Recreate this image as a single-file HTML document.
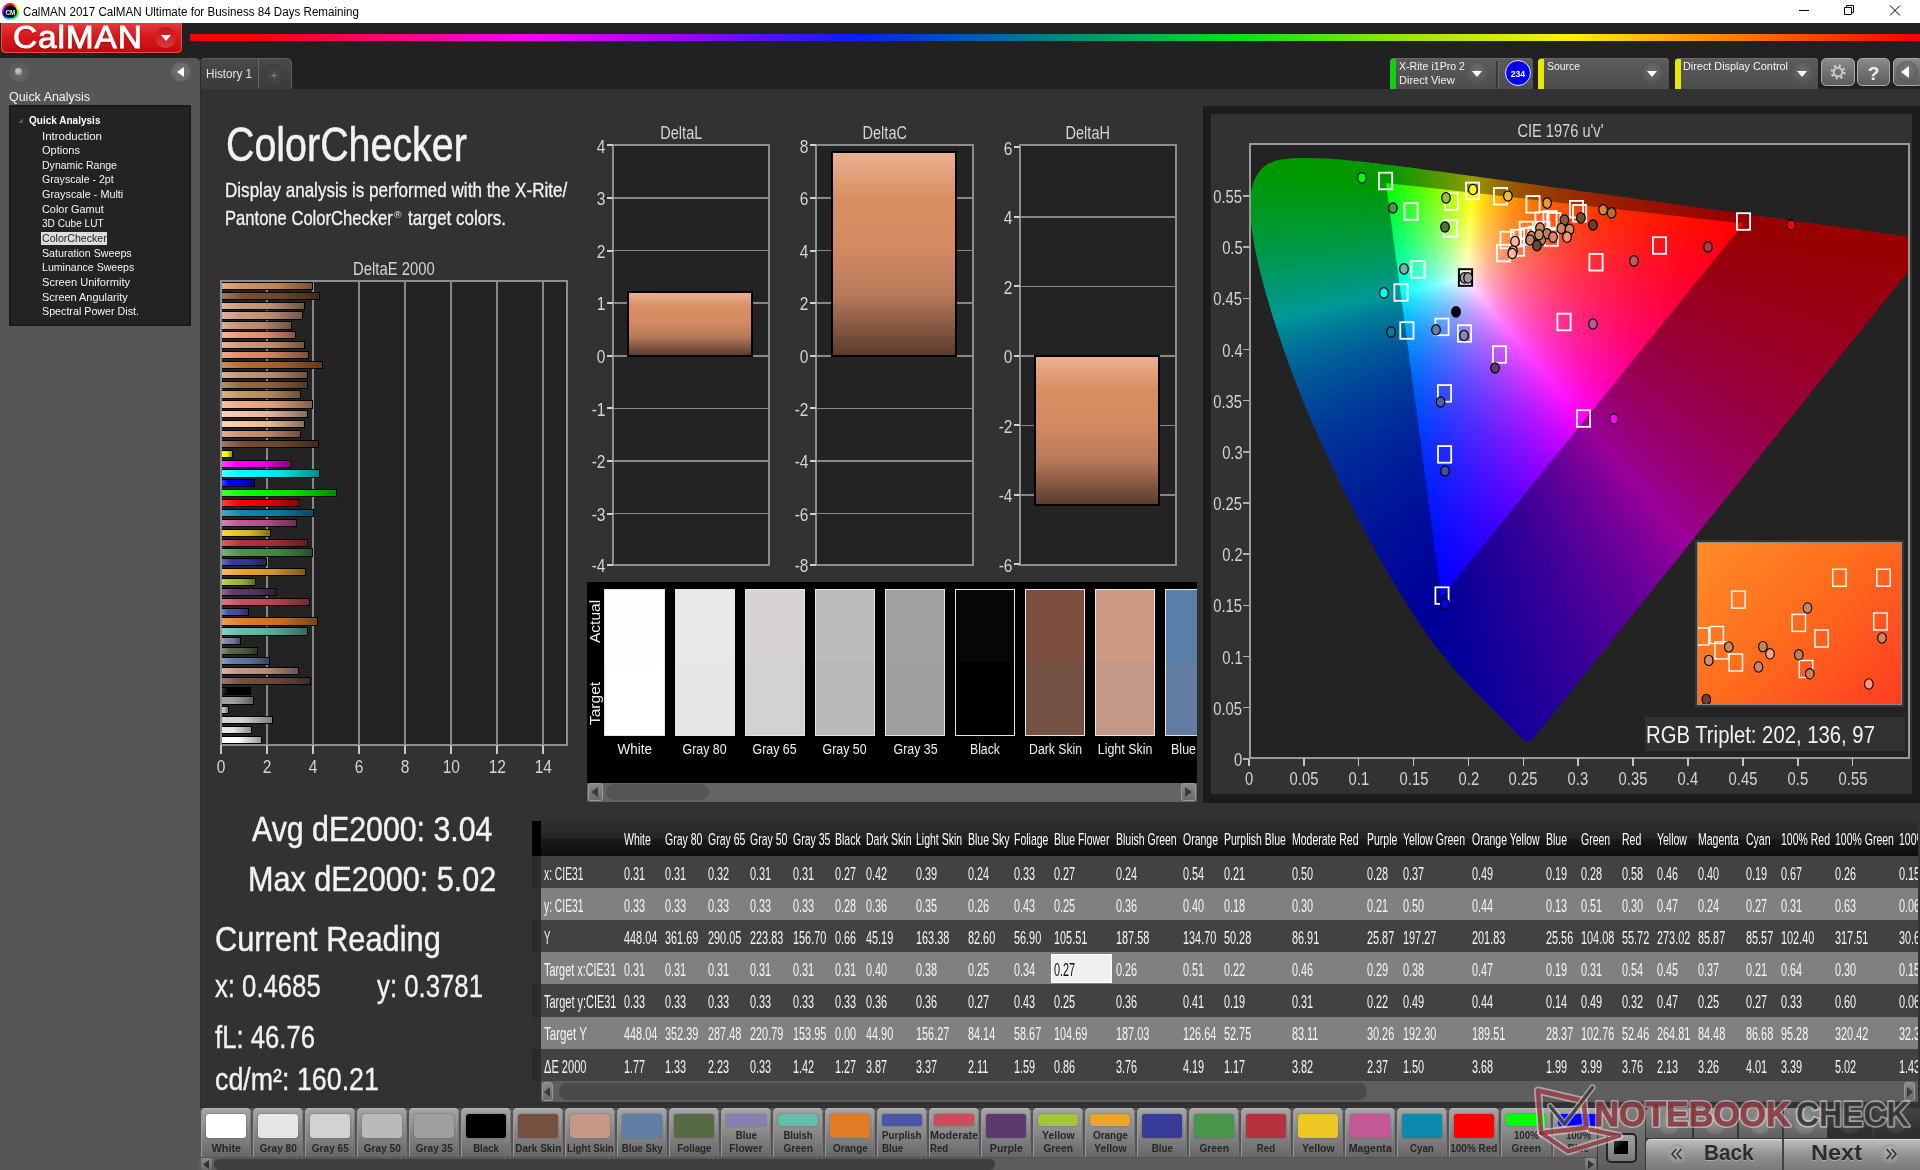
<!DOCTYPE html><html><head><meta charset="utf-8"><title>CalMAN 2017</title><style>html,body{margin:0;padding:0;background:#323232}
body{width:1920px;height:1170px;position:relative;overflow:hidden;font-family:"Liberation Sans",Arial,sans-serif}
.a,.t,.cg i{position:absolute}
.a{box-sizing:content-box}
.t{white-space:pre;line-height:1;display:block}
.cg i{display:block;height:2.4px}
.pb{border-radius:5px 5px 0 0;background:linear-gradient(#a6a6a6,#8c8c8c 45%,#666);box-shadow:inset 0 1px 0 #b8b8b8,inset 1px 0 0 #999,inset -1px 0 0 #777}
</style></head><body>
<div class="a" style="left:199px;top:89px;width:1721px;height:1081px;background:#323232"></div>
<span class="t" style="left:226.3px;top:120.96px;font-size:47.3px;transform:scaleX(0.833);transform-origin:0 0;color:#f2f2f2;-webkit-text-stroke:.5px #f2f2f2;">ColorChecker</span>
<span class="t" style="left:225.3px;top:179.52px;font-size:20.3px;transform:scaleX(0.841);transform-origin:0 0;color:#f2f2f2;-webkit-text-stroke:.3px #f2f2f2;">Display analysis is performed with the X-Rite/</span>
<span class="t" style="left:225.3px;top:207.52px;font-size:20.3px;transform:scaleX(0.818);transform-origin:0 0;color:#f2f2f2;-webkit-text-stroke:.3px #f2f2f2;">Pantone ColorChecker</span>
<span class="t" style="left:393.9px;top:209.56px;font-size:9.5px;transform:scaleX(1.086);transform-origin:0 0;color:#f2f2f2;">®</span>
<span class="t" style="left:407.5px;top:207.52px;font-size:20.3px;transform:scaleX(0.835);transform-origin:0 0;color:#f2f2f2;-webkit-text-stroke:.3px #f2f2f2;">target colors.</span>
<div class="a" style="left:0;top:0;width:1920px;height:23px;background:#fff"></div>
<div class="a" style="left:2px;top:3px;width:17px;height:17px;border-radius:50%;background:conic-gradient(#f00,#ff0,#0f0,#0ff,#00f,#f0f,#f00)"></div>
<div class="a" style="left:4px;top:5px;width:13px;height:13px;border-radius:50%;background:#000"></div>
<span class="t" style="left:5.06px;top:8.67px;font-size:7px;transform:scaleX(0.900);transform-origin:50% 0;color:#fff;font-weight:bold;">CM</span>
<span class="t" style="left:23px;top:5.84px;font-size:12px;transform:scaleX(0.967);transform-origin:0 0;color:#000;">CalMAN 2017 CalMAN Ultimate for Business 84 Days Remaining</span>
<svg class="a" style="left:1790px;top:0" width="130" height="23" viewBox="0 0 130 23" fill="none" stroke="#000" stroke-width="1"><path d="M9 10.5h10"/><path d="M54.5 7.5h7v7h-7z"/><path d="M56.5 7.5v-2h7v7h-2"/><path d="M100 5.5l10 10M110 5.5l-10 10"/></svg>
<div class="a" style="left:0px;top:23px;width:1920px;height:66px;background:#212121"></div>
<div class="a" style="left:190px;top:34.4px;width:1730px;height:6.8px;background:linear-gradient(90deg,#f00 0,#f00 3.5%,#ff0080 12%,#ff00f0 19%,#a000ff 28.3%,#0020ff 38.7%,#008088 49.4%,#00e020 60.2%,#a0e800 70.6%,#fff000 79.8%,#ff8000 89%,#f00 99.5%);filter:blur(.7px)"></div>
<div class="a" style="left:1px;top:23px;width:181px;height:29.5px;border-radius:0 0 5px 5px;background:linear-gradient(#e43a3e,#d8181c 45%,#c20a10);box-shadow:0 1px 0 #500000,inset 0 -1px 0 #e05050,inset 1px 0 0 #e05050,inset -1px 0 0 #e05050"></div>
<span class="t" style="left:13.3px;top:21.86px;font-size:31px;transform:scaleX(1.079);transform-origin:0 0;color:#fff;letter-spacing:.8px;-webkit-text-stroke:.9px #fff;text-shadow:0 1px 2px rgba(90,0,0,.7);">CalMAN</span>
<div class="a" style="left:155px;top:27px;width:21px;height:21px;border-radius:50%;background:linear-gradient(#c41418,#dc3a3e)"></div>
<svg class="a" style="left:161px;top:35px" width="10" height="6"><path d="M0 0h10l-5 6z" fill="#fff"/></svg>
<div class="a" style="left:200.4px;top:58.4px;width:91.6px;height:30.6px;border-radius:5px 5px 0 0;background:linear-gradient(#4a4a4a,#3a3a3a);border:1px solid #5e5e5e;border-bottom:none;box-sizing:border-box"></div>
<div class="a" style="left:257.5px;top:59px;width:1.5px;height:29px;background:#666"></div>
<span class="t" style="left:206.3px;top:67.72px;font-size:12.5px;transform:scaleX(0.933);transform-origin:0 0;color:#e4e4e4;">History 1</span>
<div class="a" style="left:264px;top:64px;width:20px;height:20px;border-radius:50%;background:radial-gradient(#4a4a4a,#3c3c3c)"></div>
<span class="t" style="left:270.79px;top:69.69px;font-size:11px;transform:scaleX(1.000);transform-origin:50% 0;color:#888;">+</span>
<div class="a" style="left:1390px;top:58px;width:143px;height:30.5px;border-radius:4px 4px 0 0;background:linear-gradient(#5c5c5c,#4c4c4c);box-shadow:inset 0 1px 0 #6a6a6a"></div>
<div class="a" style="left:1390px;top:59px;width:6px;height:29.5px;background:#10d010;border-radius:3px 0 0 0"></div>
<span class="t" style="left:1398.5px;top:60.69px;font-size:11px;transform:scaleX(0.964);transform-origin:0 0;color:#f4f4f4;">X-Rite i1Pro 2</span>
<span class="t" style="left:1398.5px;top:74.69px;font-size:11px;transform:scaleX(1.005);transform-origin:0 0;color:#f4f4f4;">Direct View</span>
<div class="a" style="left:1466.5px;top:63px;width:21px;height:21px;border-radius:50%;background:radial-gradient(circle at 50% 35%,#6e6e6e,#4a4a4a)"></div>
<svg class="a" style="left:1472px;top:71px" width="10" height="6"><path d="M0 0h10l-5 6z" fill="#fff"/></svg>
<div class="a" style="left:1496px;top:61px;width:1.5px;height:28px;background:#3a3a3a;box-shadow:1px 0 0 #666"></div>
<div class="a" style="left:1504.5px;top:60px;width:26px;height:26px;border-radius:50%;background:#0000f0;border:1.5px solid #e8e8ff;box-sizing:border-box"></div>
<span class="t" style="left:1509.57px;top:68.56px;font-size:9.5px;transform:scaleX(0.920);transform-origin:50% 0;color:#fff;font-weight:bold;">234</span>
<div class="a" style="left:1538px;top:58px;width:131px;height:30.5px;border-radius:4px 4px 0 0;background:linear-gradient(#5c5c5c,#4c4c4c);box-shadow:inset 0 1px 0 #6a6a6a"></div>
<div class="a" style="left:1538px;top:59px;width:6px;height:29.5px;background:#e8e800;border-radius:3px 0 0 0"></div>
<span class="t" style="left:1546.5px;top:60.69px;font-size:11px;transform:scaleX(0.947);transform-origin:0 0;color:#f4f4f4;">Source</span>
<div class="a" style="left:1641.5px;top:63px;width:21px;height:21px;border-radius:50%;background:radial-gradient(circle at 50% 35%,#6e6e6e,#4a4a4a)"></div>
<svg class="a" style="left:1647px;top:71px" width="10" height="6"><path d="M0 0h10l-5 6z" fill="#fff"/></svg>
<div class="a" style="left:1674.5px;top:58px;width:143.5px;height:30.5px;border-radius:4px 4px 0 0;background:linear-gradient(#5c5c5c,#4c4c4c);box-shadow:inset 0 1px 0 #6a6a6a"></div>
<div class="a" style="left:1674.5px;top:59px;width:6px;height:29.5px;background:#e8e800;border-radius:3px 0 0 0"></div>
<span class="t" style="left:1683px;top:60.69px;font-size:11px;transform:scaleX(0.987);transform-origin:0 0;color:#f4f4f4;">Direct Display Control</span>
<div class="a" style="left:1791.5px;top:63px;width:21px;height:21px;border-radius:50%;background:radial-gradient(circle at 50% 35%,#6e6e6e,#4a4a4a)"></div>
<svg class="a" style="left:1797px;top:71px" width="10" height="6"><path d="M0 0h10l-5 6z" fill="#fff"/></svg>
<div class="a" style="left:1821px;top:58px;width:34px;height:28px;border-radius:5px;background:linear-gradient(#8a8a8a,#5c5c5c);border:1px solid #a8a8a8;box-sizing:border-box;box-shadow:0 0 0 1px #222"></div>
<div class="a" style="left:1857px;top:58px;width:33px;height:28px;border-radius:5px;background:linear-gradient(#8a8a8a,#5c5c5c);border:1px solid #a8a8a8;box-sizing:border-box;box-shadow:0 0 0 1px #222"></div>
<div class="a" style="left:1893px;top:58px;width:30px;height:28px;border-radius:5px;background:linear-gradient(#8a8a8a,#5c5c5c);border:1px solid #a8a8a8;box-sizing:border-box;box-shadow:0 0 0 1px #222"></div>
<svg class="a" style="left:1828px;top:62px" width="20" height="20" viewBox="-10 -10 20 20"><g fill="none" stroke="#cfcfcf"><circle r="4.3" stroke-width="1.9"/><circle r="6.4" stroke-width="2.2" stroke-dasharray="2.2 2.83"/></g></svg>
<span class="t" style="left:1867.7px;top:64.42px;font-size:19px;transform:scaleX(1.000);transform-origin:50% 0;color:#eee;font-weight:bold;">?</span>
<div class="a" style="left:1896px;top:61px;width:22px;height:22px;border-radius:50%;background:radial-gradient(circle at 50% 35%,#7a7a7a,#555)"></div>
<svg class="a" style="left:1901px;top:66px" width="8" height="12"><path d="M8 0v12l-8-6z" fill="#fff"/></svg>
<div class="a" style="left:0;top:58px;width:200px;height:1112px;background:#565656;box-shadow:1px 0 0 #2b2b2b;border-radius:0 5px 0 0"></div>
<div class="a" style="left:9px;top:62px;width:20px;height:20px;border-radius:50%;background:radial-gradient(circle at 50% 60%,#6c6c6c,#545454)"></div>
<div class="a" style="left:15px;top:68px;width:7px;height:7px;border-radius:50%;background:radial-gradient(circle at 40% 35%,#ccc,#888)"></div>
<div class="a" style="left:171px;top:62px;width:20px;height:20px;border-radius:50%;background:radial-gradient(circle at 50% 40%,#747474,#5e5e5e)"></div>
<svg class="a" style="left:177px;top:67px" width="7" height="10"><path d="M7 0v10l-7-5z" fill="#fff"/></svg>
<span class="t" style="left:9px;top:91.02px;font-size:12.5px;transform:scaleX(0.997);transform-origin:0 0;color:#f4f4f4;">Quick Analysis</span>
<div class="a" style="left:9px;top:105px;width:182px;height:221px;background:#232323;border:2px solid #1a1a1a;box-sizing:border-box"></div>
<svg class="a" style="left:18px;top:118px" width="5" height="5"><path d="M5 0v5h-5z" fill="#555"/></svg>
<span class="t" style="left:29px;top:114.69px;font-size:11px;transform:scaleX(0.911);transform-origin:0 0;color:#fff;font-weight:bold;">Quick Analysis</span>
<span class="t" style="left:42px;top:130.69px;font-size:11px;transform:scaleX(1.044);transform-origin:0 0;color:#f4f4f4;">Introduction</span>
<span class="t" style="left:42px;top:144.69px;font-size:11px;transform:scaleX(1.002);transform-origin:0 0;color:#f4f4f4;">Options</span>
<span class="t" style="left:42px;top:159.69px;font-size:11px;transform:scaleX(0.958);transform-origin:0 0;color:#f4f4f4;">Dynamic Range</span>
<span class="t" style="left:42px;top:173.69px;font-size:11px;transform:scaleX(0.961);transform-origin:0 0;color:#f4f4f4;">Grayscale - 2pt</span>
<span class="t" style="left:42px;top:188.69px;font-size:11px;transform:scaleX(0.985);transform-origin:0 0;color:#f4f4f4;">Grayscale - Multi</span>
<span class="t" style="left:42px;top:203.69px;font-size:11px;transform:scaleX(0.990);transform-origin:0 0;color:#f4f4f4;">Color Gamut</span>
<span class="t" style="left:42px;top:217.69px;font-size:11px;transform:scaleX(0.917);transform-origin:0 0;color:#f4f4f4;">3D Cube LUT</span>
<div class="a" style="left:41px;top:231.8px;width:66px;height:13.5px;background:#dcdcdc"></div>
<span class="t" style="left:42px;top:232.69px;font-size:11px;transform:scaleX(0.962);transform-origin:0 0;color:#222;">ColorChecker</span>
<span class="t" style="left:42px;top:247.69px;font-size:11px;transform:scaleX(0.971);transform-origin:0 0;color:#f4f4f4;">Saturation Sweeps</span>
<span class="t" style="left:42px;top:261.69px;font-size:11px;transform:scaleX(0.961);transform-origin:0 0;color:#f4f4f4;">Luminance Sweeps</span>
<span class="t" style="left:42px;top:276.99px;font-size:11px;transform:scaleX(1.007);transform-origin:0 0;color:#f4f4f4;">Screen Uniformity</span>
<span class="t" style="left:42px;top:291.99px;font-size:11px;transform:scaleX(0.994);transform-origin:0 0;color:#f4f4f4;">Screen Angularity</span>
<span class="t" style="left:42px;top:305.99px;font-size:11px;transform:scaleX(0.973);transform-origin:0 0;color:#f4f4f4;">Spectral Power Dist.</span>
<span class="t" style="left:342.59px;top:260.34px;font-size:18.5px;transform:scaleX(0.802);transform-origin:50% 0;color:#d4d4d4;">DeltaE 2000</span>
<div class="a" style="left:220px;top:280px;width:347.5px;height:466px;background:#232323;border:2px solid #8e8e8e;box-sizing:border-box"></div>
<div class="a" style="left:266.25px;top:281px;width:1.5px;height:464px;background:#888"></div>
<div class="a" style="left:312.25px;top:281px;width:1.5px;height:464px;background:#888"></div>
<div class="a" style="left:358.25px;top:281px;width:1.5px;height:464px;background:#888"></div>
<div class="a" style="left:404.25px;top:281px;width:1.5px;height:464px;background:#888"></div>
<div class="a" style="left:450.25px;top:281px;width:1.5px;height:464px;background:#888"></div>
<div class="a" style="left:496.25px;top:281px;width:1.5px;height:464px;background:#888"></div>
<div class="a" style="left:542.25px;top:281px;width:1.5px;height:464px;background:#888"></div>
<div class="a" style="left:220px;top:745px;width:2px;height:9px;background:#c8c8c8"></div>
<span class="t" style="left:215.86px;top:757.94px;font-size:18.5px;transform:scaleX(0.840);transform-origin:50% 0;color:#d4d4d4;">0</span>
<div class="a" style="left:266px;top:745px;width:2px;height:9px;background:#c8c8c8"></div>
<span class="t" style="left:261.86px;top:757.94px;font-size:18.5px;transform:scaleX(0.840);transform-origin:50% 0;color:#d4d4d4;">2</span>
<div class="a" style="left:312px;top:745px;width:2px;height:9px;background:#c8c8c8"></div>
<span class="t" style="left:307.86px;top:757.94px;font-size:18.5px;transform:scaleX(0.840);transform-origin:50% 0;color:#d4d4d4;">4</span>
<div class="a" style="left:358px;top:745px;width:2px;height:9px;background:#c8c8c8"></div>
<span class="t" style="left:353.86px;top:757.94px;font-size:18.5px;transform:scaleX(0.840);transform-origin:50% 0;color:#d4d4d4;">6</span>
<div class="a" style="left:404px;top:745px;width:2px;height:9px;background:#c8c8c8"></div>
<span class="t" style="left:399.86px;top:757.94px;font-size:18.5px;transform:scaleX(0.840);transform-origin:50% 0;color:#d4d4d4;">8</span>
<div class="a" style="left:450px;top:745px;width:2px;height:9px;background:#c8c8c8"></div>
<span class="t" style="left:440.71px;top:757.94px;font-size:18.5px;transform:scaleX(0.840);transform-origin:50% 0;color:#d4d4d4;">10</span>
<div class="a" style="left:496px;top:745px;width:2px;height:9px;background:#c8c8c8"></div>
<span class="t" style="left:486.71px;top:757.94px;font-size:18.5px;transform:scaleX(0.840);transform-origin:50% 0;color:#d4d4d4;">12</span>
<div class="a" style="left:542px;top:745px;width:2px;height:9px;background:#c8c8c8"></div>
<span class="t" style="left:532.71px;top:757.94px;font-size:18.5px;transform:scaleX(0.840);transform-origin:50% 0;color:#d4d4d4;">14</span>
<div class="a" style="left:222px;top:735.9px;width:40.41px;height:8.2px;background:linear-gradient(90deg,#ffffff,#ffffff 40%,#999999);border:1.5px solid #000;border-left:none;box-sizing:border-box"></div>
<div class="a" style="left:222px;top:726.03px;width:30.29px;height:8.2px;background:linear-gradient(90deg,#e6e6e6,#e6e6e6 40%,#8a8a8a);border:1.5px solid #000;border-left:none;box-sizing:border-box"></div>
<div class="a" style="left:222px;top:716.16px;width:50.99px;height:8.2px;background:linear-gradient(90deg,#d2d2d2,#d2d2d2 40%,#7e7e7e);border:1.5px solid #000;border-left:none;box-sizing:border-box"></div>
<div class="a" style="left:222px;top:706.29px;width:7.29px;height:8.2px;background:linear-gradient(90deg,#bababa,#bababa 40%,#707070);border:1.5px solid #000;border-left:none;box-sizing:border-box"></div>
<div class="a" style="left:222px;top:696.42px;width:32.36px;height:8.2px;background:linear-gradient(90deg,#9f9f9f,#9f9f9f 40%,#5f5f5f);border:1.5px solid #000;border-left:none;box-sizing:border-box"></div>
<div class="a" style="left:222px;top:686.55px;width:28.91px;height:8.2px;background:linear-gradient(90deg,#303030,#000000 22%,#000000 60%,#000000);border:1.5px solid #000;border-left:none;box-sizing:border-box"></div>
<div class="a" style="left:222px;top:676.68px;width:88.71px;height:8.2px;background:linear-gradient(90deg,#977c6f,#74513f 22%,#684939 60%,#402d23);border:1.5px solid #000;border-left:none;box-sizing:border-box"></div>
<div class="a" style="left:222px;top:666.81px;width:77.21px;height:8.2px;background:linear-gradient(90deg,#d4b1a3,#c69784 22%,#b28877 60%,#6d5349);border:1.5px solid #000;border-left:none;box-sizing:border-box"></div>
<div class="a" style="left:222px;top:656.94px;width:48.23px;height:8.2px;background:linear-gradient(90deg,#879ebc,#5f7da5 22%,#567094 60%,#34455b);border:1.5px solid #000;border-left:none;box-sizing:border-box"></div>
<div class="a" style="left:222px;top:647.07px;width:36.27px;height:8.2px;background:linear-gradient(90deg,#809072,#566b43 22%,#4d603c 60%,#2f3b25);border:1.5px solid #000;border-left:none;box-sizing:border-box"></div>
<div class="a" style="left:222px;top:637.2px;width:19.48px;height:8.2px;background:linear-gradient(90deg,#a4a0c7,#8681b4 22%,#7974a2 60%,#4a4763);border:1.5px solid #000;border-left:none;box-sizing:border-box"></div>
<div class="a" style="left:222px;top:627.33px;width:86.18px;height:8.2px;background:linear-gradient(90deg,#8acfc0,#63bfab 22%,#59ac9a 60%,#36695e);border:1.5px solid #000;border-left:none;box-sizing:border-box"></div>
<div class="a" style="left:222px;top:617.46px;width:96.07px;height:8.2px;background:linear-gradient(90deg,#e89c5e,#e07b28 22%,#ca6f24 60%,#7b4416);border:1.5px solid #000;border-left:none;box-sizing:border-box"></div>
<div class="a" style="left:222px;top:607.59px;width:26.61px;height:8.2px;background:linear-gradient(90deg,#7780be,#4a56a8 22%,#434d97 60%,#292f5c);border:1.5px solid #000;border-left:none;box-sizing:border-box"></div>
<div class="a" style="left:222px;top:597.72px;width:87.56px;height:8.2px;background:linear-gradient(90deg,#d97985,#cc4c5c 22%,#b84453 60%,#702a33);border:1.5px solid #000;border-left:none;box-sizing:border-box"></div>
<div class="a" style="left:222px;top:587.85px;width:54.21px;height:8.2px;background:linear-gradient(90deg,#846b94,#5b3a70 22%,#523465 60%,#32203e);border:1.5px solid #000;border-left:none;box-sizing:border-box"></div>
<div class="a" style="left:222px;top:577.98px;width:34.2px;height:8.2px;background:linear-gradient(90deg,#bcd36d,#a5c43c 22%,#94b036 60%,#5b6c21);border:1.5px solid #000;border-left:none;box-sizing:border-box"></div>
<div class="a" style="left:222px;top:568.11px;width:84.34px;height:8.2px;background:linear-gradient(90deg,#f0bb61,#eba42c 22%,#d49428 60%,#815a18);border:1.5px solid #000;border-left:none;box-sizing:border-box"></div>
<div class="a" style="left:222px;top:558.24px;width:45.47px;height:8.2px;background:linear-gradient(90deg,#686db2,#363c98 22%,#313689 60%,#1e2154);border:1.5px solid #000;border-left:none;box-sizing:border-box"></div>
<div class="a" style="left:222px;top:548.37px;width:91.47px;height:8.2px;background:linear-gradient(90deg,#76b077,#48964a 22%,#418743 60%,#285229);border:1.5px solid #000;border-left:none;box-sizing:border-box"></div>
<div class="a" style="left:222px;top:538.5px;width:86.18px;height:8.2px;background:linear-gradient(90deg,#c8666d,#b5333c 22%,#a32e36 60%,#641c21);border:1.5px solid #000;border-left:none;box-sizing:border-box"></div>
<div class="a" style="left:222px;top:528.63px;width:48.69px;height:8.2px;background:linear-gradient(90deg,#f2d55b,#edc724 22%,#d5b320 60%,#826d14);border:1.5px solid #000;border-left:none;box-sizing:border-box"></div>
<div class="a" style="left:222px;top:518.76px;width:74.68px;height:8.2px;background:linear-gradient(90deg,#d182b0,#c25896 22%,#af4f87 60%,#6b3052);border:1.5px solid #000;border-left:none;box-sizing:border-box"></div>
<div class="a" style="left:222px;top:508.89px;width:91.93px;height:8.2px;background:linear-gradient(90deg,#48a7c2,#0b8aad 22%,#0a7c9c 60%,#064c5f);border:1.5px solid #000;border-left:none;box-sizing:border-box"></div>
<div class="a" style="left:222px;top:499.02px;width:77.67px;height:8.2px;background:linear-gradient(90deg,#ff4040,#ff0000 22%,#e60000 60%,#8c0000);border:1.5px solid #000;border-left:none;box-sizing:border-box"></div>
<div class="a" style="left:222px;top:489.15px;width:115.16px;height:8.2px;background:linear-gradient(90deg,#40ff40,#00ff00 22%,#00e600 60%,#008c00);border:1.5px solid #000;border-left:none;box-sizing:border-box"></div>
<div class="a" style="left:222px;top:479.28px;width:32.59px;height:8.2px;background:linear-gradient(90deg,#4040ff,#0000ff 22%,#0000e6 60%,#00008c);border:1.5px solid #000;border-left:none;box-sizing:border-box"></div>
<div class="a" style="left:222px;top:469.41px;width:97.91px;height:8.2px;background:linear-gradient(90deg,#40ffff,#00ffff 22%,#00e6e6 60%,#008c8c);border:1.5px solid #000;border-left:none;box-sizing:border-box"></div>
<div class="a" style="left:222px;top:459.54px;width:68.7px;height:8.2px;background:linear-gradient(90deg,#ff40ff,#ff00ff 22%,#e600e6 60%,#8c008c);border:1.5px solid #000;border-left:none;box-sizing:border-box"></div>
<div class="a" style="left:222px;top:449.67px;width:10.97px;height:8.2px;background:linear-gradient(90deg,#ffff40,#ffff00 22%,#e6e600 60%,#8c8c00);border:1.5px solid #000;border-left:none;box-sizing:border-box"></div>
<div class="a" style="left:222px;top:439.8px;width:96.99px;height:8.2px;background:linear-gradient(90deg,#9b7964,#7a4c30 22%,#6e442b 60%,#432a1a);border:1.5px solid #000;border-left:none;box-sizing:border-box"></div>
<div class="a" style="left:222px;top:429.93px;width:78.82px;height:8.2px;background:linear-gradient(90deg,#dcaf94,#d09470 22%,#bb8565 60%,#72513e);border:1.5px solid #000;border-left:none;box-sizing:border-box"></div>
<div class="a" style="left:222px;top:420.06px;width:82.96px;height:8.2px;background:linear-gradient(90deg,#fdd6b8,#fcc8a0 22%,#e3b490 60%,#8b6e58);border:1.5px solid #000;border-left:none;box-sizing:border-box"></div>
<div class="a" style="left:222px;top:410.19px;width:86.18px;height:8.2px;background:linear-gradient(90deg,#f7d3be,#f4c4a8 22%,#dcb097 60%,#866c5c);border:1.5px solid #000;border-left:none;box-sizing:border-box"></div>
<div class="a" style="left:222px;top:400.32px;width:91.24px;height:8.2px;background:linear-gradient(90deg,#f7c1a0,#f4ac80 22%,#dc9b73 60%,#865f46);border:1.5px solid #000;border-left:none;box-sizing:border-box"></div>
<div class="a" style="left:222px;top:390.45px;width:78.82px;height:8.2px;background:linear-gradient(90deg,#d6b08b,#c99664 22%,#b5875a 60%,#6f5237);border:1.5px solid #000;border-left:none;box-sizing:border-box"></div>
<div class="a" style="left:222px;top:380.58px;width:86.18px;height:8.2px;background:linear-gradient(90deg,#b28f6d,#986a3c 22%,#895f36 60%,#543a21);border:1.5px solid #000;border-left:none;box-sizing:border-box"></div>
<div class="a" style="left:222px;top:370.71px;width:86.18px;height:8.2px;background:linear-gradient(90deg,#d6b097,#c99674 22%,#b58768 60%,#6f5240);border:1.5px solid #000;border-left:none;box-sizing:border-box"></div>
<div class="a" style="left:222px;top:360.84px;width:101.13px;height:8.2px;background:linear-gradient(90deg,#c78e61,#b4682c 22%,#a25e28 60%,#633918);border:1.5px solid #000;border-left:none;box-sizing:border-box"></div>
<div class="a" style="left:222px;top:350.97px;width:87.1px;height:8.2px;background:linear-gradient(90deg,#e6ac8e,#dd9068 22%,#c7825e 60%,#7a4f39);border:1.5px solid #000;border-left:none;box-sizing:border-box"></div>
<div class="a" style="left:222px;top:341.1px;width:82.96px;height:8.2px;background:linear-gradient(90deg,#e2b29a,#d99878 22%,#c3896c 60%,#775442);border:1.5px solid #000;border-left:none;box-sizing:border-box"></div>
<div class="a" style="left:222px;top:331.23px;width:74.22px;height:8.2px;background:linear-gradient(90deg,#f4b5a0,#f09c80 22%,#d88c73 60%,#845646);border:1.5px solid #000;border-left:none;box-sizing:border-box"></div>
<div class="a" style="left:222px;top:321.36px;width:69.85px;height:8.2px;background:linear-gradient(90deg,#d6b097,#c99674 22%,#b58768 60%,#6f5240);border:1.5px solid #000;border-left:none;box-sizing:border-box"></div>
<div class="a" style="left:222px;top:311.49px;width:80.89px;height:8.2px;background:linear-gradient(90deg,#dbb3a0,#cf9a80 22%,#ba8b73 60%,#725546);border:1.5px solid #000;border-left:none;box-sizing:border-box"></div>
<div class="a" style="left:222px;top:301.62px;width:82.96px;height:8.2px;background:linear-gradient(90deg,#dcb39a,#d19a78 22%,#bc8b6c 60%,#735542);border:1.5px solid #000;border-left:none;box-sizing:border-box"></div>
<div class="a" style="left:222px;top:291.75px;width:98.14px;height:8.2px;background:linear-gradient(90deg,#9b7b62,#7a4f2e 22%,#6e4729 60%,#432b19);border:1.5px solid #000;border-left:none;box-sizing:border-box"></div>
<div class="a" style="left:222px;top:281.88px;width:91.24px;height:8.2px;background:linear-gradient(90deg,#e2ac87,#d9905f 22%,#c38256 60%,#774f34);border:1.5px solid #000;border-left:none;box-sizing:border-box"></div>
<span class="t" style="left:656.21px;top:125.49px;font-size:17.5px;transform:scaleX(0.830);transform-origin:50% 0;color:#d4d4d4;">DeltaL</span>
<div class="a" style="left:612px;top:144px;width:158px;height:422px;background:#232323;border:2px solid #8e8e8e;box-sizing:border-box"></div>
<div class="a" style="left:606.5px;top:144.4px;width:6.5px;height:2px;background:#d0d0d0"></div>
<span class="t" style="left:595.41px;top:137.64px;font-size:18.5px;transform:scaleX(0.840);transform-origin:100% 0;color:#d4d4d4;">4</span>
<div class="a" style="left:613px;top:197.25px;width:156px;height:1.5px;background:#888"></div>
<div class="a" style="left:606.5px;top:197px;width:6.5px;height:2px;background:#d0d0d0"></div>
<span class="t" style="left:595.41px;top:190.24px;font-size:18.5px;transform:scaleX(0.840);transform-origin:100% 0;color:#d4d4d4;">3</span>
<div class="a" style="left:613px;top:249.85px;width:156px;height:1.5px;background:#888"></div>
<div class="a" style="left:606.5px;top:249.6px;width:6.5px;height:2px;background:#d0d0d0"></div>
<span class="t" style="left:595.41px;top:242.84px;font-size:18.5px;transform:scaleX(0.840);transform-origin:100% 0;color:#d4d4d4;">2</span>
<div class="a" style="left:613px;top:302.45px;width:156px;height:1.5px;background:#888"></div>
<div class="a" style="left:606.5px;top:302.2px;width:6.5px;height:2px;background:#d0d0d0"></div>
<span class="t" style="left:595.41px;top:295.44px;font-size:18.5px;transform:scaleX(0.840);transform-origin:100% 0;color:#d4d4d4;">1</span>
<div class="a" style="left:613px;top:355.05px;width:156px;height:1.5px;background:#888"></div>
<div class="a" style="left:606.5px;top:354.8px;width:6.5px;height:2px;background:#d0d0d0"></div>
<span class="t" style="left:595.41px;top:348.04px;font-size:18.5px;transform:scaleX(0.840);transform-origin:100% 0;color:#d4d4d4;">0</span>
<div class="a" style="left:613px;top:407.65px;width:156px;height:1.5px;background:#888"></div>
<div class="a" style="left:606.5px;top:407.4px;width:6.5px;height:2px;background:#d0d0d0"></div>
<span class="t" style="left:589.25px;top:400.64px;font-size:18.5px;transform:scaleX(0.840);transform-origin:100% 0;color:#d4d4d4;">-1</span>
<div class="a" style="left:613px;top:460.25px;width:156px;height:1.5px;background:#888"></div>
<div class="a" style="left:606.5px;top:460px;width:6.5px;height:2px;background:#d0d0d0"></div>
<span class="t" style="left:589.25px;top:453.24px;font-size:18.5px;transform:scaleX(0.840);transform-origin:100% 0;color:#d4d4d4;">-2</span>
<div class="a" style="left:613px;top:512.85px;width:156px;height:1.5px;background:#888"></div>
<div class="a" style="left:606.5px;top:512.6px;width:6.5px;height:2px;background:#d0d0d0"></div>
<span class="t" style="left:589.25px;top:505.84px;font-size:18.5px;transform:scaleX(0.840);transform-origin:100% 0;color:#d4d4d4;">-3</span>
<div class="a" style="left:606.5px;top:564px;width:6.5px;height:2px;background:#d0d0d0"></div>
<span class="t" style="left:589.25px;top:557.24px;font-size:18.5px;transform:scaleX(0.840);transform-origin:100% 0;color:#d4d4d4;">-4</span>
<div class="a" style="left:627px;top:290.8px;width:126.3px;height:66.2px;background:linear-gradient(#e9b191,#d98e62 22%,#d48b62 45%,#b87a5a 70%,#5a3c2e);border:2px solid #000;box-sizing:border-box"></div>
<span class="t" style="left:858.05px;top:125.49px;font-size:17.5px;transform:scaleX(0.830);transform-origin:50% 0;color:#d4d4d4;">DeltaC</span>
<div class="a" style="left:815px;top:144px;width:159.3px;height:422px;background:#232323;border:2px solid #8e8e8e;box-sizing:border-box"></div>
<div class="a" style="left:809.5px;top:144.4px;width:6.5px;height:2px;background:#d0d0d0"></div>
<span class="t" style="left:798.41px;top:137.64px;font-size:18.5px;transform:scaleX(0.840);transform-origin:100% 0;color:#d4d4d4;">8</span>
<div class="a" style="left:816px;top:197.25px;width:157.3px;height:1.5px;background:#888"></div>
<div class="a" style="left:809.5px;top:197px;width:6.5px;height:2px;background:#d0d0d0"></div>
<span class="t" style="left:798.41px;top:190.24px;font-size:18.5px;transform:scaleX(0.840);transform-origin:100% 0;color:#d4d4d4;">6</span>
<div class="a" style="left:816px;top:249.85px;width:157.3px;height:1.5px;background:#888"></div>
<div class="a" style="left:809.5px;top:249.6px;width:6.5px;height:2px;background:#d0d0d0"></div>
<span class="t" style="left:798.41px;top:242.84px;font-size:18.5px;transform:scaleX(0.840);transform-origin:100% 0;color:#d4d4d4;">4</span>
<div class="a" style="left:816px;top:302.45px;width:157.3px;height:1.5px;background:#888"></div>
<div class="a" style="left:809.5px;top:302.2px;width:6.5px;height:2px;background:#d0d0d0"></div>
<span class="t" style="left:798.41px;top:295.44px;font-size:18.5px;transform:scaleX(0.840);transform-origin:100% 0;color:#d4d4d4;">2</span>
<div class="a" style="left:816px;top:355.05px;width:157.3px;height:1.5px;background:#888"></div>
<div class="a" style="left:809.5px;top:354.8px;width:6.5px;height:2px;background:#d0d0d0"></div>
<span class="t" style="left:798.41px;top:348.04px;font-size:18.5px;transform:scaleX(0.840);transform-origin:100% 0;color:#d4d4d4;">0</span>
<div class="a" style="left:816px;top:407.65px;width:157.3px;height:1.5px;background:#888"></div>
<div class="a" style="left:809.5px;top:407.4px;width:6.5px;height:2px;background:#d0d0d0"></div>
<span class="t" style="left:792.25px;top:400.64px;font-size:18.5px;transform:scaleX(0.840);transform-origin:100% 0;color:#d4d4d4;">-2</span>
<div class="a" style="left:816px;top:460.25px;width:157.3px;height:1.5px;background:#888"></div>
<div class="a" style="left:809.5px;top:460px;width:6.5px;height:2px;background:#d0d0d0"></div>
<span class="t" style="left:792.25px;top:453.24px;font-size:18.5px;transform:scaleX(0.840);transform-origin:100% 0;color:#d4d4d4;">-4</span>
<div class="a" style="left:816px;top:512.85px;width:157.3px;height:1.5px;background:#888"></div>
<div class="a" style="left:809.5px;top:512.6px;width:6.5px;height:2px;background:#d0d0d0"></div>
<span class="t" style="left:792.25px;top:505.84px;font-size:18.5px;transform:scaleX(0.840);transform-origin:100% 0;color:#d4d4d4;">-6</span>
<div class="a" style="left:809.5px;top:564px;width:6.5px;height:2px;background:#d0d0d0"></div>
<span class="t" style="left:792.25px;top:557.24px;font-size:18.5px;transform:scaleX(0.840);transform-origin:100% 0;color:#d4d4d4;">-8</span>
<div class="a" style="left:830.5px;top:151.3px;width:126.3px;height:205.7px;background:linear-gradient(#e9b191,#d98e62 22%,#d48b62 45%,#b87a5a 70%,#5a3c2e);border:2px solid #000;box-sizing:border-box"></div>
<span class="t" style="left:1061.05px;top:125.49px;font-size:17.5px;transform:scaleX(0.830);transform-origin:50% 0;color:#d4d4d4;">DeltaH</span>
<div class="a" style="left:1019px;top:144px;width:158.3px;height:422px;background:#232323;border:2px solid #8e8e8e;box-sizing:border-box"></div>
<div class="a" style="left:1013.5px;top:146.3px;width:6.5px;height:2px;background:#d0d0d0"></div>
<span class="t" style="left:1002.41px;top:139.54px;font-size:18.5px;transform:scaleX(0.840);transform-origin:100% 0;color:#d4d4d4;">6</span>
<div class="a" style="left:1020px;top:216.05px;width:156.3px;height:1.5px;background:#888"></div>
<div class="a" style="left:1013.5px;top:215.8px;width:6.5px;height:2px;background:#d0d0d0"></div>
<span class="t" style="left:1002.41px;top:209.04px;font-size:18.5px;transform:scaleX(0.840);transform-origin:100% 0;color:#d4d4d4;">4</span>
<div class="a" style="left:1020px;top:285.55px;width:156.3px;height:1.5px;background:#888"></div>
<div class="a" style="left:1013.5px;top:285.3px;width:6.5px;height:2px;background:#d0d0d0"></div>
<span class="t" style="left:1002.41px;top:278.54px;font-size:18.5px;transform:scaleX(0.840);transform-origin:100% 0;color:#d4d4d4;">2</span>
<div class="a" style="left:1020px;top:355.05px;width:156.3px;height:1.5px;background:#888"></div>
<div class="a" style="left:1013.5px;top:354.8px;width:6.5px;height:2px;background:#d0d0d0"></div>
<span class="t" style="left:1002.41px;top:348.04px;font-size:18.5px;transform:scaleX(0.840);transform-origin:100% 0;color:#d4d4d4;">0</span>
<div class="a" style="left:1020px;top:424.55px;width:156.3px;height:1.5px;background:#888"></div>
<div class="a" style="left:1013.5px;top:424.3px;width:6.5px;height:2px;background:#d0d0d0"></div>
<span class="t" style="left:996.25px;top:417.54px;font-size:18.5px;transform:scaleX(0.840);transform-origin:100% 0;color:#d4d4d4;">-2</span>
<div class="a" style="left:1020px;top:494.05px;width:156.3px;height:1.5px;background:#888"></div>
<div class="a" style="left:1013.5px;top:493.8px;width:6.5px;height:2px;background:#d0d0d0"></div>
<span class="t" style="left:996.25px;top:487.04px;font-size:18.5px;transform:scaleX(0.840);transform-origin:100% 0;color:#d4d4d4;">-4</span>
<div class="a" style="left:1013.5px;top:563.3px;width:6.5px;height:2px;background:#d0d0d0"></div>
<span class="t" style="left:996.25px;top:556.54px;font-size:18.5px;transform:scaleX(0.840);transform-origin:100% 0;color:#d4d4d4;">-6</span>
<div class="a" style="left:1034px;top:355.3px;width:126.2px;height:150.7px;background:linear-gradient(#e9b191,#d98e62 22%,#d48b62 45%,#b87a5a 70%,#5a3c2e);border:2px solid #000;box-sizing:border-box"></div>
<div class="a" style="left:587px;top:582px;width:610px;height:219.5px;background:#000"></div>
<div class="a" style="left:587px;top:582px;width:610px;height:200px;overflow:hidden">
<div class="a" style="left:17.1px;top:7px;width:60.7px;height:147px;box-sizing:border-box;border:1.2px solid #e4e4e4;background:linear-gradient(#fffdff 50%,#ffffff 50%)"></div>
<div class="a" style="left:88.05px;top:7px;width:59.8px;height:147px;box-sizing:border-box;border:1.2px solid #e4e4e4;background:linear-gradient(#eae9e7 50%,#e6e6e6 50%)"></div>
<div class="a" style="left:158.1px;top:7px;width:59.8px;height:147px;box-sizing:border-box;border:1.2px solid #e4e4e4;background:linear-gradient(#d6d2d3 50%,#d2d2d2 50%)"></div>
<div class="a" style="left:228.15px;top:7px;width:59.8px;height:147px;box-sizing:border-box;border:1.2px solid #e4e4e4;background:linear-gradient(#bcbcbc 50%,#bababa 50%)"></div>
<div class="a" style="left:298.2px;top:7px;width:59.8px;height:147px;box-sizing:border-box;border:1.2px solid #e4e4e4;background:linear-gradient(#a3a0a0 50%,#9f9f9f 50%)"></div>
<div class="a" style="left:368.25px;top:7px;width:59.8px;height:147px;box-sizing:border-box;border:1.2px solid #e4e4e4;background:linear-gradient(#050608 50%,#000000 50%)"></div>
<div class="a" style="left:438.3px;top:7px;width:59.8px;height:147px;box-sizing:border-box;border:1.2px solid #e4e4e4;background:linear-gradient(#7d4f40 50%,#745244 50%)"></div>
<div class="a" style="left:508.35px;top:7px;width:59.8px;height:147px;box-sizing:border-box;border:1.2px solid #e4e4e4;background:linear-gradient(#cf9a84 50%,#c39887 50%)"></div>
<div class="a" style="left:578.4px;top:7px;width:59.8px;height:147px;box-sizing:border-box;border:1.2px solid #e4e4e4;background:linear-gradient(#577fa8 50%,#627da2 50%)"></div>
</div>
<div class="a" style="left:587px;top:582px;width:610px;height:200px;overflow:hidden">
<span class="t" style="left:28.09px;top:159.38px;font-size:15.5px;transform:scaleX(0.871);transform-origin:50% 0;color:#f0f0f0;">White</span>
<span class="t" style="left:90.38px;top:159.38px;font-size:15.5px;transform:scaleX(0.798);transform-origin:50% 0;color:#f0f0f0;">Gray 80</span>
<span class="t" style="left:160.43px;top:159.38px;font-size:15.5px;transform:scaleX(0.798);transform-origin:50% 0;color:#f0f0f0;">Gray 65</span>
<span class="t" style="left:230.48px;top:159.38px;font-size:15.5px;transform:scaleX(0.798);transform-origin:50% 0;color:#f0f0f0;">Gray 50</span>
<span class="t" style="left:300.53px;top:159.38px;font-size:15.5px;transform:scaleX(0.798);transform-origin:50% 0;color:#f0f0f0;">Gray 35</span>
<span class="t" style="left:379.2px;top:159.38px;font-size:15.5px;transform:scaleX(0.791);transform-origin:50% 0;color:#f0f0f0;">Black</span>
<span class="t" style="left:434.61px;top:159.38px;font-size:15.5px;transform:scaleX(0.789);transform-origin:50% 0;color:#f0f0f0;">Dark Skin</span>
<span class="t" style="left:504.21px;top:159.38px;font-size:15.5px;transform:scaleX(0.801);transform-origin:50% 0;color:#f0f0f0;">Light Skin</span>
<span class="t" style="left:577.72px;top:159.38px;font-size:15.5px;transform:scaleX(0.801);transform-origin:50% 0;color:#f0f0f0;">Blue Sky</span>
</div>
<span class="t" style="left:586px;top:594px;width:17px;height:55px;font-size:15.5px;color:#f0f0f0;writing-mode:vertical-rl;transform:rotate(180deg);text-align:center;line-height:17px">Actual</span>
<span class="t" style="left:586px;top:676px;width:17px;height:55px;font-size:15.5px;color:#f0f0f0;writing-mode:vertical-rl;transform:rotate(180deg);text-align:center;line-height:17px">Target</span>
<div class="a" style="left:587px;top:782.5px;width:610px;height:19px;background:#646464"></div>
<div class="a" style="left:605.5px;top:784px;width:103px;height:16px;background:#555;border-radius:8px"></div>
<div class="a" style="left:587.5px;top:783px;width:15px;height:18px;background:linear-gradient(#8a8a8a,#6a6a6a);border-radius:3px;border:1px solid #999;box-sizing:border-box"></div>
<div class="a" style="left:1181px;top:783px;width:15px;height:18px;background:linear-gradient(#8a8a8a,#6a6a6a);border-radius:3px;border:1px solid #999;box-sizing:border-box"></div>
<svg class="a" style="left:591px;top:787px" width="7" height="10"><path d="M7 0v10l-7-5z" fill="#3c3c3c"/></svg>
<svg class="a" style="left:1185px;top:787px" width="7" height="10"><path d="M0 0v10l7-5z" fill="#3c3c3c"/></svg>
<div class="a" style="left:1203px;top:106px;width:717px;height:697px;background:#1c1c1c"></div>
<div class="a" style="left:1211px;top:114px;width:701px;height:680px;background:#323232"></div>
<span class="t" style="left:1506.06px;top:122.14px;font-size:18.5px;transform:scaleX(0.790);transform-origin:50% 0;color:#d4d4d4;">CIE 1976 u&#x27;v&#x27;</span>
<div class="a" style="left:1249px;top:143px;width:661px;height:616.4px;background:#232323;border:2px solid #9a9a9a;box-sizing:border-box"></div>
<div class="a" style="left:1251px;top:145px;width:657px;height:613px;overflow:hidden">
<div class="a" style="left:0;top:0;width:697px;height:613px;clip-path:polygon(282.17px 593.99px,280.66px 595.36px,278.86px 596.05px,276.78px 596.06px,274.41px 595.38px,271.75px 594.03px,267.92px 590.45px,262.36px 585px,255.37px 577.77px,251.23px 573.61px,246.52px 568.9px,241.04px 563.47px,234.92px 557.37px,230.56px 553.02px,225.93px 548.38px,220.96px 543.22px,216.97px 539.01px,212.8px 534.54px,208.41px 529.72px,203.81px 524.46px,200.02px 520.03px,196.15px 515.47px,192.11px 510.58px,187.82px 505.16px,183.22px 499.05px,180.16px 494.85px,176.98px 490.43px,173.69px 485.78px,170.29px 480.9px,166.8px 475.79px,163.24px 470.46px,159.6px 464.89px,155.9px 459.1px,152.89px 454.29px,149.81px 449.33px,146.68px 444.21px,143.49px 438.94px,140.25px 433.53px,136.98px 427.99px,133.68px 422.3px,130.35px 416.48px,127.01px 410.53px,123.65px 404.46px,120.82px 399.28px,117.96px 393.97px,115.06px 388.53px,112.14px 382.99px,109.2px 377.36px,106.24px 371.64px,103.28px 365.86px,100.32px 360.03px,97.38px 354.16px,94.44px 348.27px,91.54px 342.36px,88.66px 336.46px,86px 330.98px,83.33px 325.42px,80.64px 319.81px,77.96px 314.15px,75.27px 308.45px,72.6px 302.73px,69.95px 296.99px,67.34px 291.25px,64.75px 285.52px,62.22px 279.81px,59.74px 274.14px,57.32px 268.5px,54.98px 262.93px,52.5px 256.91px,50.07px 250.86px,47.68px 244.81px,45.35px 238.77px,43.06px 232.74px,40.83px 226.75px,38.65px 220.81px,36.53px 214.93px,34.47px 209.13px,32.47px 203.42px,30.53px 197.81px,28.66px 192.33px,26.49px 185.86px,24.41px 179.47px,22.41px 173.18px,20.49px 166.99px,18.66px 160.92px,16.92px 154.98px,15.26px 149.19px,13.69px 143.56px,12.2px 138.09px,10.8px 132.81px,8.97px 125.57px,7.33px 118.67px,5.87px 112.08px,4.58px 105.79px,3.44px 99.79px,2.44px 94.06px,1.56px 88.58px,0.58px 81.41px,-0.11px 74.83px,-0.53px 68.76px,-0.71px 63.11px,-0.67px 57.78px,-0.11px 49.73px,1.1px 42.74px,2.85px 36.62px,6.52px 29.01px,11.23px 23.19px,16.82px 19.08px,23.12px 16.33px,29.98px 14.68px,37.28px 13.8px,44.89px 13.31px,52.7px 13.17px,60.48px 13.2px,68.37px 13.41px,76.42px 13.79px,84.71px 14.34px,93.35px 15.04px,102.33px 15.88px,108.52px 16.52px,114.89px 17.22px,121.46px 17.97px,128.25px 18.77px,135.24px 19.63px,142.49px 20.54px,150px 21.5px,157.77px 22.51px,165.81px 23.57px,172.02px 24.4px,178.37px 25.26px,184.89px 26.15px,191.59px 27.06px,198.47px 28px,205.51px 28.96px,212.74px 29.95px,220.14px 30.97px,226.19px 31.81px,232.35px 32.66px,238.62px 33.53px,245px 34.42px,251.51px 35.33px,258.12px 36.25px,264.86px 37.19px,271.71px 38.14px,278.66px 39.11px,285.72px 40.1px,291.69px 40.93px,297.75px 41.78px,303.87px 42.63px,310.07px 43.5px,316.32px 44.37px,322.62px 45.25px,328.99px 46.13px,335.44px 47.03px,341.95px 47.93px,348.5px 48.84px,355.07px 49.75px,361.67px 50.67px,368.3px 51.59px,375px 52.53px,381.73px 53.48px,388.45px 54.42px,395.14px 55.36px,401.77px 56.28px,408.33px 57.2px,414.86px 58.11px,421.35px 59.01px,427.81px 59.91px,434.24px 60.81px,440.64px 61.7px,447.05px 62.59px,453.47px 63.49px,459.85px 64.38px,466.17px 65.26px,472.39px 66.12px,478.48px 66.97px,485.63px 67.96px,492.64px 68.92px,499.5px 69.87px,506.21px 70.79px,512.76px 71.7px,519.14px 72.59px,525.38px 73.46px,531.45px 74.31px,537.35px 75.14px,543.05px 75.94px,549.91px 76.9px,556.49px 77.82px,562.79px 78.7px,568.84px 79.55px,576.47px 80.6px,583.63px 81.59px,590.42px 82.53px,596.83px 83.42px,602.86px 84.27px,608.62px 85.08px,616.82px 86.22px,624.41px 87.28px,631.39px 88.26px,637.75px 89.15px,648.54px 90.62px,656.91px 91.79px,663.44px 92.7px,668.31px 93.39px,674.11px 94.2px,678.21px 94.77px,682.05px 95.31px,283.4px 591.94px)">
<div class="cg"><i style="left:33px;top:12px;width:49px;background:linear-gradient(90deg,#00ff00 0px,#00ff00 18px,#00ff00 36px,#00ff00 49px)"></i><i style="left:22px;top:14px;width:84px;background:linear-gradient(90deg,#00ff00 0px,#00ff00 18px,#00ff00 36px,#00ff00 54px,#00ff00 72px,#00ff00 84px)"></i><i style="left:17px;top:16px;width:107px;background:linear-gradient(90deg,#00ff00 0px,#00ff00 18px,#00ff00 36px,#00ff00 54px,#00ff00 72px,#00ff00 90px,#00ff00 107px)"></i><i style="left:13px;top:18px;width:128px;background:linear-gradient(90deg,#00ff00 0px,#00ff00 18px,#00ff00 36px,#00ff00 54px,#00ff00 72px,#00ff00 90px,#00ff00 108px,#00ff00 119.4px,#13ff00 128px)"></i><i style="left:10px;top:20px;width:146px;background:linear-gradient(90deg,#00ff00 0px,#00ff00 18px,#00ff00 36px,#00ff00 54px,#00ff00 72px,#00ff00 90px,#00ff00 108px,#00ff00 122.7px,#36ff00 146px)"></i><i style="left:8px;top:22px;width:163px;background:linear-gradient(90deg,#00ff00 0px,#00ff00 18px,#00ff00 36px,#00ff00 54px,#00ff00 72px,#00ff00 90px,#00ff00 108px,#00ff00 125px,#2cff00 144px,#5cff00 163px)"></i><i style="left:6px;top:24px;width:180px;background:linear-gradient(90deg,#00ff02 0px,#00ff00 14.4px,#00ff00 36px,#00ff00 54px,#00ff00 72px,#00ff00 90px,#00ff00 108px,#00ff00 127.2px,#26ff00 144px,#54ff00 162px,#85ff00 180px)"></i><i style="left:5px;top:26px;width:196px;background:linear-gradient(90deg,#00ff05 0px,#00ff02 18px,#00ff00 33px,#00ff00 54px,#00ff00 72px,#00ff00 90px,#00ff00 108px,#00ff00 128.5px,#24ff00 144px,#51ff00 162px,#82ff00 180px,#b3ff00 196px)"></i><i style="left:4px;top:28px;width:212px;background:linear-gradient(90deg,#00ff08 0px,#00ff05 18px,#00ff02 36px,#00ff00 51.6px,#00ff00 72px,#00ff00 90px,#00ff00 108px,#00ff00 129.8px,#21ff00 144px,#4eff00 162px,#7fff00 180px,#b6ff00 198px,#e6ff00 212px)"></i><i style="left:3px;top:30px;width:227px;background:linear-gradient(90deg,#00ff0a 0px,#00ff08 18px,#00ff05 36px,#00ff03 54px,#00ff00 70.3px,#00ff00 90px,#00ff00 108px,#00ff00 126px,#00ff00 131px,#1eff00 144px,#4bff00 162px,#7cff00 180px,#b3ff00 198px,#ffff00 219.9px,#ffe700 227px)"></i><i style="left:2px;top:32px;width:242px;background:linear-gradient(90deg,#00ff0d 0px,#00ff0b 18px,#00ff08 36px,#00ff06 54px,#00ff03 72px,#00ff00 88.9px,#00ff00 108px,#00ff00 126px,#00ff00 132.3px,#1bff00 144px,#48ff00 162px,#79ff00 180px,#b0ff00 198px,#ffff00 220.8px,#ffd400 234px,#ffbf00 242px)"></i><i style="left:1px;top:34px;width:258px;background:linear-gradient(90deg,#00ff10 0px,#00ff0e 18px,#00ff0b 36px,#00ff09 54px,#00ff06 72px,#00ff03 90px,#00ff00 107.6px,#00ff00 126px,#00ff00 133.6px,#18ff00 144px,#45ff00 162px,#76ff00 180px,#adff00 198px,#eaff00 216px,#ffff00 221.6px,#ffd600 234px,#ffab00 252px,#ff9f00 258px)"></i><i style="left:0px;top:36px;width:273px;background:linear-gradient(90deg,#00ff12 0px,#00ff10 18px,#00ff0e 36px,#00ff0c 54px,#00ff09 72px,#00ff06 90px,#00ff03 108px,#00ff00 126.2px,#00ff00 134.8px,#15ff00 144px,#42ff00 162px,#73ff00 180px,#aaff00 198px,#e7ff00 216px,#ffff00 222.5px,#ffd900 234px,#ffac00 252px,#ff8700 273px)"></i><i style="left:0px;top:38px;width:288px;background:linear-gradient(90deg,#00ff15 0px,#00ff13 18px,#00ff11 36px,#00ff0f 54px,#00ff0c 72px,#00ff0a 90px,#00ff07 108px,#00ff03 126px,#00ff02 135.1px,#14ff00 143.9px,#42ff00 162px,#73ff00 180px,#aaff00 198px,#e8ff00 216px,#ffff00 222.3px,#ffd800 234px,#ffac00 252px,#ff8b00 270px,#ff7200 288px)"></i><i style="left:0px;top:40px;width:302px;background:linear-gradient(90deg,#00ff18 0px,#00ff16 18px,#00ff14 36px,#00ff12 54px,#00ff0f 72px,#00ff0d 90px,#00ff0a 108px,#00ff07 126px,#00ff05 135.4px,#14ff04 144px,#40ff00 161.5px,#73ff00 180px,#aaff00 198px,#e8ff00 216px,#ffff00 222.1px,#ffd800 234px,#ffab00 252px,#ff8a00 270px,#ff7100 288px,#ff6200 302px)"></i><i style="left:0px;top:42px;width:316px;background:linear-gradient(90deg,#00ff1a 0px,#00ff19 18px,#00ff17 36px,#00ff15 54px,#00ff12 72px,#00ff10 90px,#00ff0d 108px,#00ff0a 126px,#00ff09 135.6px,#14ff07 144px,#41ff04 162px,#70ff00 179.1px,#aaff00 198px,#e9ff00 216px,#ffff00 222px,#ffd700 234px,#ffaa00 252px,#ff8a00 270px,#ff7100 288px,#ff5d00 306px,#ff5400 316px)"></i><i style="left:0px;top:44px;width:331px;background:linear-gradient(90deg,#00ff1d 0px,#00ff1b 18px,#00ff1a 36px,#00ff18 54px,#00ff15 72px,#00ff13 90px,#00ff11 108px,#00ff0e 126px,#00ff0c 135.9px,#13ff0b 144px,#40ff07 162px,#73ff04 180px,#a7ff00 196.8px,#e9ff00 216px,#ffff00 221.8px,#ffd600 234px,#ffaa00 252px,#ff8900 270px,#ff7000 288px,#ff5c00 306px,#ff4d00 324px,#ff4700 331px)"></i><i style="left:0px;top:46px;width:345px;background:linear-gradient(90deg,#00ff20 0px,#00ff1e 18px,#00ff1c 36px,#00ff1b 54px,#00ff19 72px,#00ff16 90px,#00ff14 108px,#00ff11 126px,#00ff10 136.2px,#13ff0e 144px,#40ff0b 162px,#73ff08 180px,#abff04 198px,#e4ff00 214.4px,#ffff00 221.7px,#ffd600 234px,#ffa900 252px,#ff8800 270px,#ff6f00 288px,#ff5c00 306px,#ff4c00 324px,#ff3d00 345px)"></i><i style="left:0px;top:48px;width:359px;background:linear-gradient(90deg,#00ff23 0px,#00ff21 18px,#00ff1f 36px,#00ff1e 54px,#00ff1c 72px,#00ff1a 90px,#00ff17 108px,#00ff15 126px,#00ff13 136.4px,#12ff12 144px,#40ff0f 162px,#72ff0c 180px,#abff08 198px,#eaff04 216px,#ffff03 221.5px,#ffdb00 232.1px,#ffa800 252px,#ff8800 270px,#ff6f00 288px,#ff5b00 306px,#ff4b00 324px,#ff3e00 342px,#ff3400 359px)"></i><i style="left:0px;top:50px;width:374px;background:linear-gradient(90deg,#00ff25 0px,#00ff24 18px,#00ff22 36px,#00ff21 54px,#00ff1f 72px,#00ff1d 90px,#00ff1b 108px,#00ff18 126px,#00ff17 136.7px,#11ff16 144px,#3fff13 162px,#72ff10 180px,#abff0d 198px,#ebff09 216px,#ffff07 221.4px,#ffd404 234px,#ffad00 249.7px,#ff8700 270px,#ff6e00 288px,#ff5b00 306px,#ff4b00 324px,#ff3e00 342px,#ff3300 360px,#ff2c00 374px)"></i><i style="left:0px;top:52px;width:388px;background:linear-gradient(90deg,#00ff28 0px,#00ff27 18px,#00ff25 36px,#00ff24 54px,#00ff22 72px,#00ff20 90px,#00ff1e 108px,#00ff1c 126px,#00ff1b 137px,#11ff1a 144px,#3fff17 162px,#72ff14 180px,#abff11 198px,#ebff0d 216px,#ffff0c 221.2px,#ffd408 234px,#ffa703 252px,#ff8b00 267.4px,#ff6e00 288px,#ff5a00 306px,#ff4a00 324px,#ff3d00 342px,#ff3300 360px,#ff2900 378px,#ff2500 388px)"></i><i style="left:0px;top:54px;width:402px;background:linear-gradient(90deg,#00ff2b 0px,#00ff2a 18px,#00ff28 36px,#00ff27 54px,#00ff25 72px,#00ff24 90px,#00ff22 108px,#00ff20 126px,#00ff1e 137.2px,#10ff1e 144px,#3fff1b 162px,#72ff18 180px,#abff15 198px,#ebff12 216px,#ffff11 221.1px,#ffd30c 234px,#ffa606 252px,#ff8603 270px,#ff7100 285px,#ff5a00 306px,#ff4a00 324px,#ff3d00 342px,#ff3200 360px,#ff2900 378px,#ff2100 396px,#ff1e00 402px)"></i><i style="left:0px;top:56px;width:417px;background:linear-gradient(90deg,#00ff2e 0px,#00ff2d 18px,#00ff2b 36px,#00ff2a 54px,#00ff29 72px,#00ff27 90px,#00ff25 108px,#00ff23 126px,#00ff22 137.5px,#10ff21 144px,#3eff1f 162px,#72ff1d 180px,#abff1a 198px,#ffff16 220.9px,#ffd210 234px,#ffa60a 252px,#ff8505 270px,#ff6d02 288px,#ff5c00 302.6px,#ff4900 324px,#ff3c00 342px,#ff3200 360px,#ff2800 378px,#ff2000 396px,#ff1800 417px)"></i><i style="left:0px;top:58px;width:431px;background:linear-gradient(90deg,#00ff30 0px,#00ff2f 18px,#00ff2e 36px,#00ff2d 54px,#00ff2c 72px,#00ff2a 90px,#00ff29 108px,#00ff27 126px,#00ff26 137.8px,#0fff25 144px,#3eff23 162px,#72ff21 180px,#acff1e 198px,#ffff1b 220.8px,#ffd214 234px,#ffa50d 252px,#ff8508 270px,#ff6c05 288px,#ff5902 306px,#ff4c00 320.3px,#ff3c00 342px,#ff3100 360px,#ff2800 378px,#ff2000 396px,#ff1900 414px,#ff1300 431px)"></i><i style="left:0px;top:60px;width:445px;background:linear-gradient(90deg,#00ff33 0px,#00ff32 18px,#00ff31 36px,#00ff30 54px,#00ff2f 72px,#00ff2e 90px,#00ff2c 108px,#00ff2b 126px,#00ff2a 138px,#0fff29 144px,#3dff27 162px,#72ff25 180px,#acff23 198px,#ffff20 220.6px,#ffd118 234px,#ffa411 252px,#ff840b 270px,#ff6b07 288px,#ff5804 306px,#ff4802 324px,#ff3e00 337.9px,#ff3100 360px,#ff2700 378px,#ff2000 396px,#ff1900 414px,#ff1300 432px,#ff0f00 445px)"></i><i style="left:0px;top:62px;width:460px;background:linear-gradient(90deg,#00ff36 0px,#00ff35 18px,#00ff34 36px,#00ff33 54px,#00ff32 72px,#00ff31 90px,#00ff30 108px,#00ff2f 126px,#00ff2e 138.3px,#0eff2d 144px,#3dff2b 162px,#71ff2a 180px,#acff27 198px,#ffff25 220.4px,#ffd01c 234px,#ffa414 252px,#ff830e 270px,#ff6b0a 288px,#ff5707 306px,#ff4804 324px,#ff3b01 342px,#ff3300 355.6px,#ff2700 378px,#ff1f00 396px,#ff1800 414px,#ff1200 432px,#ff0d00 450px,#ff0a00 460px)"></i><i style="left:0px;top:64px;width:474px;background:linear-gradient(90deg,#00ff39 0px,#00ff38 18px,#00ff38 36px,#00ff37 54px,#00ff36 72px,#00ff35 90px,#00ff34 108px,#00ff32 126px,#00ff31 138.6px,#0dff31 144px,#3dff30 162px,#71ff2e 180px,#acff2c 198px,#ffff2a 220.3px,#ffd020 234px,#ffa318 252px,#ff8311 270px,#ff6a0d 288px,#ff5709 306px,#ff4706 324px,#ff3a03 342px,#ff3001 360px,#ff2900 373.2px,#ff1f00 396px,#ff1800 414px,#ff1200 432px,#ff0d00 450px,#ff0800 468px,#ff0600 474px)"></i><i style="left:0px;top:66px;width:488px;background:linear-gradient(90deg,#00ff3c 0px,#00ff3b 18px,#00ff3b 36px,#00ff3a 54px,#00ff39 72px,#00ff38 90px,#00ff37 108px,#00ff36 126px,#00ff35 138.8px,#0dff35 144px,#3cff34 162px,#71ff32 180px,#acff31 198px,#ffff2f 220.1px,#ffcf25 234px,#ffa21b 252px,#ff8214 270px,#ff6a0f 288px,#ff560b 306px,#ff4708 324px,#ff3a05 342px,#ff2f03 360px,#ff2601 378px,#ff2000 390.9px,#ff1e00 396px,#ff1800 414px,#ff1200 432px,#ff0c00 450px,#ff0800 468px,#ff0300 488px)"></i><i style="left:0px;top:68px;width:503px;background:linear-gradient(90deg,#00ff3f 0px,#00ff3e 18px,#00ff3e 36px,#00ff3d 54px,#00ff3c 72px,#00ff3c 90px,#00ff3b 108px,#00ff3a 126px,#00ff39 139.1px,#3cff38 162px,#71ff37 180px,#acff36 198px,#ffff34 220px,#ffce29 234px,#ffa21f 252px,#ff8117 270px,#ff6912 288px,#ff560e 306px,#ff460a 324px,#ff3907 342px,#ff2f05 360px,#ff2603 378px,#ff1e01 396px,#ff1900 408.5px,#ff1700 414px,#ff1100 432px,#ff0c00 450px,#ff0700 468px,#ff0300 486px,#ff0000 500.3px,#ff0000 503px)"></i><i style="left:0px;top:70px;width:517px;background:linear-gradient(90deg,#00ff42 0px,#00ff41 18px,#00ff41 36px,#00ff40 54px,#00ff40 72px,#00ff3f 90px,#00ff3f 108px,#00ff3e 126px,#00ff3d 139.4px,#3bff3c 162px,#71ff3b 180px,#acff3a 198px,#ffff39 219.8px,#ffce2d 234px,#ffa122 252px,#ff811b 270px,#ff6815 288px,#ff5510 306px,#ff460c 324px,#ff3909 342px,#ff2e07 360px,#ff2504 378px,#ff1d03 396px,#ff1701 414px,#ff1300 426.2px,#ff1100 432px,#ff0c00 450px,#ff0700 468px,#ff0300 486px,#ff0000 498.7px,#ff0000 504px,#ff0000 517px)"></i><i style="left:0px;top:72px;width:532px;background:linear-gradient(90deg,#00ff45 0px,#00ff44 18px,#00ff44 36px,#00ff44 54px,#00ff43 72px,#00ff43 90px,#00ff42 108px,#00ff42 126px,#00ff41 139.6px,#3bff41 162px,#71ff40 180px,#acff3f 198px,#ffff3e 219.7px,#ffcd31 234px,#ffa026 252px,#ff801e 270px,#ff6817 288px,#ff5412 306px,#ff450e 324px,#ff380b 342px,#ff2e08 360px,#ff2506 378px,#ff1d04 396px,#ff1602 414px,#ff1001 432px,#ff0d00 443.8px,#ff0b00 450px,#ff0700 468px,#ff0200 486px,#ff0000 497.1px,#ff0000 504px,#ff0000 522px,#ff0000 532px)"></i><i style="left:0px;top:74px;width:546px;background:linear-gradient(90deg,#00ff48 0px,#00ff47 18px,#00ff47 36px,#00ff47 54px,#00ff47 72px,#00ff47 90px,#00ff46 108px,#00ff46 126px,#00ff46 139.9px,#3bff45 162px,#70ff45 180px,#adff44 198px,#ffff43 219.5px,#ffcc36 234px,#ffa029 252px,#ff7f21 270px,#ff671a 288px,#ff5415 306px,#ff4511 324px,#ff380d 342px,#ff2d0a 360px,#ff2408 378px,#ff1d06 396px,#ff1604 414px,#ff1002 432px,#ff0b01 450px,#ff0800 461.4px,#ff0600 468px,#ff0200 486px,#ff0000 495.5px,#ff0000 504px,#ff0000 522px,#ff0000 540px,#ff0000 546px)"></i><i style="left:0px;top:76px;width:560px;background:linear-gradient(90deg,#00ff4b 0px,#00ff4b 18px,#00ff4a 36px,#00ff4a 54px,#00ff4a 72px,#00ff4a 90px,#00ff4a 108px,#00ff4a 126px,#00ff4a 140.2px,#3aff4a 162px,#70ff49 180px,#adff49 198px,#ffff49 219.4px,#ffcc3a 234px,#ff9f2d 252px,#ff7f24 270px,#ff661d 288px,#ff5317 306px,#ff4413 324px,#ff370f 342px,#ff2d0c 360px,#ff2409 378px,#ff1c07 396px,#ff1505 414px,#ff1004 432px,#ff0a02 450px,#ff0601 468px,#ff0300 479.1px,#ff0200 486px,#ff0000 493.9px,#ff0000 504px,#ff0000 522px,#ff0000 540px,#ff0000 560px)"></i><i style="left:0px;top:78px;width:575px;background:linear-gradient(90deg,#00ff4e 0px,#00ff4e 18px,#00ff4e 36px,#00ff4e 54px,#00ff4e 72px,#00ff4e 90px,#00ff4e 108px,#00ff4e 126px,#00ff4e 140.4px,#3aff4e 162px,#70ff4e 180px,#adff4e 198px,#ffff4e 219.2px,#ffcb3e 234px,#ff9e31 252px,#ff7e27 270px,#ff661f 288px,#ff531a 306px,#ff4315 324px,#ff3711 342px,#ff2c0e 360px,#ff230b 378px,#ff1c09 396px,#ff1507 414px,#ff0f05 432px,#ff0a03 450px,#ff0502 468px,#ff0101 486px,#ff0000 492.2px,#ff0000 496.7px,#ff0000 504px,#ff0000 522px,#ff0000 540px,#ff0000 558px,#ff0000 575px)"></i><i style="left:0px;top:80px;width:589px;background:linear-gradient(90deg,#00ff51 0px,#00ff51 18px,#00ff51 36px,#00ff51 54px,#00ff51 72px,#00ff52 90px,#00ff52 108px,#00ff52 126px,#00ff52 140.7px,#39ff53 162px,#70ff53 180px,#adff53 198px,#ffff54 219.1px,#ffca43 234px,#ff9e34 252px,#ff7e2a 270px,#ff6522 288px,#ff521c 306px,#ff4317 324px,#ff3613 342px,#ff2c10 360px,#ff230d 378px,#ff1b0a 396px,#ff1508 414px,#ff0f06 432px,#ff0a05 450px,#ff0503 468px,#ff0002 490.6px,#ff0001 504px,#ff0000 514.4px,#ff0000 522px,#ff0000 540px,#ff0000 558px,#ff0000 576px,#ff0000 589px)"></i><i style="left:0px;top:82px;width:603px;background:linear-gradient(90deg,#00ff54 0px,#00ff54 18px,#00ff54 36px,#00ff55 54px,#00ff55 72px,#00ff55 90px,#00ff56 108px,#00ff56 126px,#00ff56 141px,#39ff57 162px,#70ff58 180px,#adff58 198px,#ffff59 218.9px,#ffca47 234px,#ff9d38 252px,#ff7d2d 270px,#ff6525 288px,#ff521e 306px,#ff4219 324px,#ff3615 342px,#ff2b11 360px,#ff220e 378px,#ff1b0c 396px,#ff140a 414px,#ff0e08 432px,#ff0906 450px,#ff0504 468px,#ff0003 489px,#ff0002 504px,#ff0001 522px,#ff0000 532px,#ff0000 540px,#ff0000 558px,#ff0000 576px,#ff0000 594px,#ff0000 603px)"></i><i style="left:0px;top:84px;width:618px;background:linear-gradient(90deg,#00ff57 0px,#00ff57 18px,#00ff58 36px,#00ff58 54px,#00ff59 72px,#00ff59 90px,#00ff5a 108px,#00ff5a 126px,#00ff5b 141.2px,#38ff5c 162px,#6fff5d 180px,#adff5e 198px,#ffff5f 218.7px,#ffc94c 234px,#ff9c3c 252px,#ff7c30 270px,#ff6428 288px,#ff5121 306px,#ff421b 324px,#ff3517 342px,#ff2b13 360px,#ff2210 378px,#ff1a0d 396px,#ff140b 414px,#ff0e09 432px,#ff0907 450px,#ff0406 468px,#ff0004 487.4px,#ff0003 504px,#ff0002 522px,#ff0001 540px,#ff0000 549.7px,#ff0000 558px,#ff0000 576px,#ff0000 594px,#ff0000 612px,#ff0000 618px)"></i><i style="left:0px;top:86px;width:632px;background:linear-gradient(90deg,#00ff5a 0px,#00ff5a 18px,#00ff5b 36px,#00ff5c 54px,#00ff5c 72px,#00ff5d 90px,#00ff5e 108px,#00ff5e 126px,#00ff5f 141.5px,#38ff60 162px,#6fff62 180px,#aeff63 198px,#ffff64 218.6px,#ffc850 234px,#ff9c3f 252px,#ff7c33 270px,#ff632a 288px,#ff5023 306px,#ff411e 324px,#ff3519 342px,#ff2a15 360px,#ff2212 378px,#ff1a0f 396px,#ff130c 414px,#ff0e0a 432px,#ff0908 450px,#ff0407 468px,#ff0005 485.8px,#ff0004 504px,#ff0003 522px,#ff0002 540px,#ff0000 558px,#ff0000 567.3px,#ff0000 576px,#ff0000 594px,#ff0000 612px,#ff0000 632px)"></i><i style="left:0px;top:88px;width:646px;background:linear-gradient(90deg,#00ff5d 0px,#00ff5e 18px,#00ff5e 36px,#00ff5f 54px,#00ff60 72px,#00ff61 90px,#00ff62 108px,#00ff63 126px,#00ff64 141.8px,#37ff65 162px,#6fff66 180px,#aeff68 198px,#ffff6a 218.4px,#ffc855 234px,#ff9b43 252px,#ff7b37 270px,#ff632d 288px,#ff5026 306px,#ff4120 324px,#ff341b 342px,#ff2a17 360px,#ff2113 378px,#ff1a11 396px,#ff130e 414px,#ff0d0c 432px,#ff080a 450px,#ff0408 468px,#ff0007 484.1px,#ff0005 504px,#ff0004 522px,#ff0003 540px,#ff0001 558px,#ff0000 576px,#ff0000 585px,#ff0000 594px,#ff0000 612px,#ff0000 630px,#ff0000 646px)"></i><i style="left:0px;top:90px;width:657px;background:linear-gradient(90deg,#00ff60 0px,#00ff61 18px,#00ff62 36px,#00ff63 54px,#00ff63 72px,#00ff65 90px,#00ff66 108px,#00ff67 126px,#00ff68 142.1px,#37ff6a 162px,#6fff6c 180px,#aeff6d 198px,#ffff70 218.3px,#ffc759 234px,#ff9a47 252px,#ff7a3a 270px,#ff6230 288px,#ff4f28 306px,#ff4022 324px,#ff341d 342px,#ff2919 360px,#ff2115 378px,#ff1912 396px,#ff130f 414px,#ff0d0d 432px,#ff080b 450px,#ff0309 468px,#ff0008 482.5px,#ff0006 504px,#ff0005 522px,#ff0003 540px,#ff0002 558px,#ff0001 576px,#ff0000 594px,#ff0000 602.6px,#ff0000 612px,#ff0000 630px,#ff0000 648px,#ff0000 657px)"></i><i style="left:0px;top:92px;width:657px;background:linear-gradient(90deg,#00ff63 0px,#00ff64 18px,#00ff65 36px,#00ff66 54px,#00ff67 72px,#00ff68 90px,#00ff6a 108px,#00ff6b 126px,#00ff6d 142.3px,#37ff6f 162px,#6fff71 180px,#aeff73 198px,#ffff76 218.1px,#ffc65e 234px,#ff9a4b 252px,#ff7a3d 270px,#ff6133 288px,#ff4f2b 306px,#ff4024 324px,#ff331f 342px,#ff291b 360px,#ff2017 378px,#ff1914 396px,#ff1211 414px,#ff0c0e 432px,#ff070c 450px,#ff030a 468px,#ff0009 480.9px,#ff0009 486px,#ff0007 504px,#ff0006 522px,#ff0004 540px,#ff0003 558px,#ff0002 576px,#ff0001 594px,#ff0000 612px,#ff0000 620.2px,#ff0000 630px,#ff0000 648px,#ff0000 657px)"></i><i style="left:0px;top:94px;width:657px;background:linear-gradient(90deg,#00ff66 0px,#00ff67 18px,#00ff69 36px,#00ff6a 54px,#00ff6b 72px,#00ff6c 90px,#00ff6e 108px,#00ff70 126px,#00ff71 142.6px,#36ff73 162px,#6fff76 180px,#aeff78 198px,#ffff7c 218px,#ffc562 234px,#ff994e 252px,#ff7940 270px,#ff6135 288px,#ff4e2d 306px,#ff3f26 324px,#ff3321 342px,#ff281c 360px,#ff2019 378px,#ff1815 396px,#ff1212 414px,#ff0c10 432px,#ff070e 450px,#ff030c 468px,#ff000a 479.3px,#ff000a 486px,#ff0008 504px,#ff0007 522px,#ff0005 540px,#ff0004 558px,#ff0003 576px,#ff0002 594px,#ff0001 612px,#ff0000 630px,#ff0000 637.9px,#ff0000 648px,#ff0000 657px)"></i><i style="left:0px;top:96px;width:657px;background:linear-gradient(90deg,#00ff6a 0px,#00ff6b 18px,#00ff6c 36px,#00ff6d 54px,#00ff6f 72px,#00ff70 90px,#00ff72 108px,#00ff74 126px,#00ff76 142.9px,#36ff78 162px,#6eff7b 180px,#aeff7e 198px,#ffff82 217.8px,#ffc567 234px,#ff9852 252px,#ff7843 270px,#ff6038 288px,#ff4d30 306px,#ff3e29 324px,#ff3223 342px,#ff281e 360px,#ff1f1a 378px,#ff1817 396px,#ff1114 414px,#ff0c11 432px,#ff070f 450px,#ff020d 468px,#ff000c 477.7px,#ff000b 486px,#ff0009 504px,#ff0008 522px,#ff0006 540px,#ff0005 558px,#ff0004 576px,#ff0003 594px,#ff0002 612px,#ff0001 630px,#ff0000 648px,#ff0000 655.5px,#ff0000 657px)"></i><i style="left:1px;top:98px;width:656px;background:linear-gradient(90deg,#00ff6d 0px,#00ff6e 18px,#00ff70 36px,#00ff71 54px,#00ff73 72px,#00ff74 90px,#00ff76 108px,#00ff78 126px,#00ff7b 142.1px,#38ff7d 162px,#71ff80 180px,#b2ff84 198px,#ffff88 216.7px,#ffc16a 234px,#ff9555 252px,#ff7646 270px,#ff5e3a 288px,#ff4c32 306px,#ff3d2b 324px,#ff3125 342px,#ff2720 360px,#ff1e1c 378px,#ff1718 396px,#ff1115 414px,#ff0b12 432px,#ff0610 450px,#ff020e 468px,#ff000d 475.1px,#ff000c 486px,#ff000a 504px,#ff0009 522px,#ff0007 540px,#ff0006 558px,#ff0005 576px,#ff0004 594px,#ff0003 612px,#ff0002 630px,#ff0001 648px,#ff0001 656px)"></i><i style="left:1px;top:100px;width:656px;background:linear-gradient(90deg,#00ff70 0px,#00ff72 18px,#00ff73 36px,#00ff75 54px,#00ff76 72px,#00ff78 90px,#00ff7b 108px,#00ff7d 126px,#00ff7f 142.4px,#38ff82 162px,#71ff86 180px,#b2ff89 198px,#ffff8e 216.5px,#ffc06e 234px,#ff9559 252px,#ff7549 270px,#ff5e3d 288px,#ff4b34 306px,#ff3d2d 324px,#ff3027 342px,#ff2622 360px,#ff1e1d 378px,#ff161a 396px,#ff1017 414px,#ff0b14 432px,#ff0611 450px,#ff010f 468px,#ff000f 473.4px,#ff000d 486px,#ff000b 504px,#ff000a 522px,#ff0008 540px,#ff0007 558px,#ff0006 576px,#ff0005 594px,#ff0004 612px,#ff0003 630px,#ff0002 648px,#ff0001 656px)"></i><i style="left:1px;top:102px;width:656px;background:linear-gradient(90deg,#00ff73 0px,#00ff75 18px,#00ff77 36px,#00ff78 54px,#00ff7a 72px,#00ff7c 90px,#00ff7f 108px,#00ff81 126px,#00ff84 142.7px,#37ff88 162px,#71ff8b 180px,#b3ff8f 198px,#ffff94 216.4px,#ffc073 234px,#ff945c 252px,#ff754c 270px,#ff5d40 288px,#ff4b37 306px,#ff3c2f 324px,#ff3029 342px,#ff2623 360px,#ff1d1f 378px,#ff161b 396px,#ff1018 414px,#ff0a15 432px,#ff0513 450px,#ff0010 471.8px,#ff000e 486px,#ff000d 504px,#ff000b 522px,#ff0009 540px,#ff0008 558px,#ff0007 576px,#ff0006 594px,#ff0005 612px,#ff0004 630px,#ff0003 648px,#ff0002 656px)"></i><i style="left:2px;top:104px;width:655px;background:linear-gradient(90deg,#00ff77 0px,#00ff78 18px,#00ff7a 36px,#00ff7c 54px,#00ff7e 72px,#00ff81 90px,#00ff83 108px,#00ff86 126px,#00ff89 141.9px,#3aff8d 162px,#74ff91 180px,#b7ff95 198px,#ffff9a 215.2px,#ffbc76 234px,#ff915f 252px,#ff724f 270px,#ff5b42 288px,#ff4939 306px,#ff3b31 324px,#ff2f2a 342px,#ff2525 360px,#ff1c21 378px,#ff151d 396px,#ff0f19 414px,#ff0916 432px,#ff0514 450px,#ff0011 469.2px,#ff000f 486px,#ff000d 504px,#ff000c 522px,#ff000a 540px,#ff0009 558px,#ff0008 576px,#ff0006 594px,#ff0005 612px,#ff0004 630px,#ff0003 648px,#ff0003 655px)"></i><i style="left:2px;top:106px;width:655px;background:linear-gradient(90deg,#00ff7a 0px,#00ff7c 18px,#00ff7e 36px,#00ff80 54px,#00ff82 72px,#00ff85 90px,#00ff88 108px,#00ff8b 126px,#00ff8e 142.2px,#39ff92 162px,#74ff96 180px,#b7ff9b 198px,#ffffa1 215px,#ffbb7b 234px,#ff9063 252px,#ff7252 270px,#ff5b45 288px,#ff493b 306px,#ff3a33 324px,#ff2e2c 342px,#ff2427 360px,#ff1c22 378px,#ff151e 396px,#ff0e1b 414px,#ff0918 432px,#ff0415 450px,#ff0013 467.6px,#ff0011 486px,#ff000f 504px,#ff000d 522px,#ff000b 540px,#ff000a 558px,#ff0008 576px,#ff0007 594px,#ff0006 612px,#ff0005 630px,#ff0004 648px,#ff0004 655px)"></i><i style="left:3px;top:108px;width:654px;background:linear-gradient(90deg,#00ff7e 0px,#00ff80 18px,#00ff82 36px,#00ff84 54px,#00ff86 72px,#00ff89 90px,#00ff8c 108px,#00ff90 126px,#00ff93 141.5px,#3cff98 162px,#78ff9c 180px,#bbffa2 198px,#ffffa7 213.9px,#ffb87e 234px,#ff8e66 252px,#ff7054 270px,#ff5947 288px,#ff473d 306px,#ff3935 324px,#ff2d2e 342px,#ff2328 360px,#ff1b24 378px,#ff1420 396px,#ff0e1c 414px,#ff0819 432px,#ff0416 450px,#ff0014 465px,#ff0012 486px,#ff0010 504px,#ff000e 522px,#ff000c 540px,#ff000b 558px,#ff0009 576px,#ff0008 594px,#ff0007 612px,#ff0006 630px,#ff0005 648px,#ff0005 654px)"></i><i style="left:3px;top:110px;width:654px;background:linear-gradient(90deg,#00ff81 0px,#00ff83 18px,#00ff85 36px,#00ff88 54px,#00ff8a 72px,#00ff8d 90px,#00ff91 108px,#00ff94 126px,#00ff98 141.7px,#3bff9d 162px,#77ffa2 180px,#bbffa8 198px,#ffffad 213.7px,#ffb782 234px,#ff8d6a 252px,#ff6f58 270px,#ff584a 288px,#ff4640 306px,#ff3837 324px,#ff2d30 342px,#ff232a 360px,#ff1b25 378px,#ff1321 396px,#ff0d1e 414px,#ff081a 432px,#ff0317 450px,#ff0016 463.3px,#ff0013 486px,#ff0011 504px,#ff000f 522px,#ff000d 540px,#ff000c 558px,#ff000a 576px,#ff0009 594px,#ff0008 612px,#ff0007 630px,#ff0006 648px,#ff0005 654px)"></i><i style="left:3px;top:112px;width:654px;background:linear-gradient(90deg,#00ff84 0px,#00ff87 18px,#00ff89 36px,#00ff8c 54px,#00ff8f 72px,#00ff92 90px,#00ff95 108px,#00ff99 126px,#00ff9d 142px,#3bffa2 162px,#77ffa8 180px,#bcffae 198px,#ffffb4 213.6px,#ffb687 234px,#ff8c6d 252px,#ff6e5b 270px,#ff584d 288px,#ff4642 306px,#ff3839 324px,#ff2c32 342px,#ff222c 360px,#ff1a27 378px,#ff1323 396px,#ff0d1f 414px,#ff081c 432px,#ff0319 450px,#ff0017 461.7px,#ff0016 468px,#ff0014 486px,#ff0012 504px,#ff0010 522px,#ff000e 540px,#ff000d 558px,#ff000b 576px,#ff000a 594px,#ff0009 612px,#ff0007 630px,#ff0006 648px,#ff0006 654px)"></i><i style="left:4px;top:114px;width:653px;background:linear-gradient(90deg,#00ff88 0px,#00ff8a 18px,#00ff8d 36px,#00ff90 54px,#00ff93 72px,#00ff96 90px,#00ff9a 108px,#00ff9e 126px,#00ffa2 141.3px,#3effa8 162px,#7bffae 180px,#c0ffb5 198px,#ffffbb 212.4px,#ffb38a 234px,#ff8a70 252px,#ff6c5d 270px,#ff564f 288px,#ff4444 306px,#ff363b 324px,#ff2b34 342px,#ff212e 360px,#ff1929 378px,#ff1224 396px,#ff0c20 414px,#ff071d 432px,#ff021a 450px,#ff0019 459.1px,#ff0017 468px,#ff0015 486px,#ff0013 504px,#ff0011 522px,#ff000f 540px,#ff000d 558px,#ff000c 576px,#ff000b 594px,#ff0009 612px,#ff0008 630px,#ff0007 648px,#ff0007 653px)"></i><i style="left:4px;top:116px;width:653px;background:linear-gradient(90deg,#00ff8b 0px,#00ff8e 18px,#00ff91 36px,#00ff94 54px,#00ff97 72px,#00ff9b 90px,#00ff9f 108px,#00ffa3 126px,#00ffa7 141.5px,#3dffad 162px,#7bffb4 180px,#c0ffbb 198px,#ffffc1 212.3px,#ffb28f 234px,#ff8974 252px,#ff6b60 270px,#ff5552 288px,#ff4446 306px,#ff363d 324px,#ff2a36 342px,#ff2130 360px,#ff192a 378px,#ff1226 396px,#ff0c22 414px,#ff061e 432px,#ff021b 450px,#ff001a 457.5px,#ff0018 468px,#ff0016 486px,#ff0014 504px,#ff0012 522px,#ff0010 540px,#ff000e 558px,#ff000d 576px,#ff000b 594px,#ff000a 612px,#ff0009 630px,#ff0008 648px,#ff0008 653px)"></i><i style="left:5px;top:118px;width:652px;background:linear-gradient(90deg,#00ff8f 0px,#00ff92 18px,#00ff95 36px,#00ff98 54px,#00ff9b 72px,#00ff9f 90px,#00ffa3 108px,#00ffa8 126px,#00ffac 140.8px,#40ffb3 162px,#7effba 180px,#c5ffc2 198px,#ffffc8 211.1px,#ffae91 234px,#ff8676 252px,#ff6963 270px,#ff5354 288px,#ff4248 306px,#ff353f 324px,#ff2937 342px,#ff2031 360px,#ff182c 378px,#ff1127 396px,#ff0b23 414px,#ff061f 432px,#ff001c 454.9px,#ff001a 468px,#ff0017 486px,#ff0015 504px,#ff0013 522px,#ff0011 540px,#ff000f 558px,#ff000e 576px,#ff000c 594px,#ff000b 612px,#ff000a 630px,#ff0008 652px)"></i><i style="left:5px;top:120px;width:652px;background:linear-gradient(90deg,#00ff92 0px,#00ff95 18px,#00ff98 36px,#00ff9c 54px,#00ffa0 72px,#00ffa4 90px,#00ffa8 108px,#00ffad 126px,#00ffb2 141.1px,#40ffb9 162px,#7effc0 180px,#c5ffc8 198px,#ffffcf 211px,#ffe9bf 216px,#ffae96 234px,#ff857a 252px,#ff6966 270px,#ff5357 288px,#ff424b 306px,#ff3441 324px,#ff2939 342px,#ff1f33 360px,#ff172d 378px,#ff1129 396px,#ff0b24 414px,#ff0521 432px,#ff001d 453.2px,#ff001b 468px,#ff0018 486px,#ff0016 504px,#ff0014 522px,#ff0012 540px,#ff0010 558px,#ff000f 576px,#ff000d 594px,#ff000c 612px,#ff000b 630px,#ff0009 652px)"></i><i style="left:6px;top:122px;width:651px;background:linear-gradient(90deg,#00ff96 0px,#00ff99 18px,#00ff9c 36px,#00ffa0 54px,#00ffa4 72px,#00ffa8 90px,#00ffad 108px,#00ffb3 126px,#00ffb7 140.3px,#42ffbf 162px,#82ffc7 180px,#caffcf 198px,#ffffd6 209.8px,#ffe4c3 216px,#ffaa99 234px,#ff837d 252px,#ff6668 270px,#ff5159 288px,#ff404d 306px,#ff3343 324px,#ff283b 342px,#ff1e34 360px,#ff162f 378px,#ff102a 396px,#ff0a26 414px,#ff0522 432px,#ff001f 450.6px,#ff001c 468px,#ff0019 486px,#ff0017 504px,#ff0015 522px,#ff0013 540px,#ff0011 558px,#ff000f 576px,#ff000e 594px,#ff000d 612px,#ff000b 630px,#ff000a 651px)"></i><i style="left:6px;top:124px;width:651px;background:linear-gradient(90deg,#00ff9a 0px,#00ff9d 18px,#00ffa0 36px,#00ffa4 54px,#00ffa8 72px,#00ffad 90px,#00ffb2 108px,#00ffb8 126px,#00ffbd 140.6px,#42ffc5 162px,#81ffcd 180px,#caffd6 198px,#ffffdd 209.6px,#ffe3c8 216px,#ffa99e 234px,#ff8280 252px,#ff666c 270px,#ff505c 288px,#ff404f 306px,#ff3245 324px,#ff273d 342px,#ff1e36 360px,#ff1630 378px,#ff0f2c 396px,#ff0927 414px,#ff0423 432px,#ff0020 449px,#ff001d 468px,#ff001a 486px,#ff0018 504px,#ff0016 522px,#ff0014 540px,#ff0012 558px,#ff0010 576px,#ff000f 594px,#ff000d 612px,#ff000c 630px,#ff000b 651px)"></i><i style="left:7px;top:126px;width:650px;background:linear-gradient(90deg,#00ff9d 0px,#00ffa1 18px,#00ffa5 36px,#00ffa9 54px,#00ffad 72px,#00ffb2 90px,#00ffb7 108px,#00ffbd 126px,#00ffc2 139.9px,#45ffcb 162px,#85ffd4 180px,#cfffde 198px,#ffffe4 208.5px,#ffdfcb 216px,#ffa6a0 234px,#ff8083 252px,#ff646e 270px,#ff4f5e 288px,#ff3e51 306px,#ff3147 324px,#ff263f 342px,#ff1d38 360px,#ff1532 378px,#ff0e2d 396px,#ff0928 414px,#ff0425 432px,#ff0022 446.4px,#ff001e 468px,#ff001b 486px,#ff0019 504px,#ff0017 522px,#ff0015 540px,#ff0013 558px,#ff0011 576px,#ff0010 594px,#ff000e 612px,#ff000d 630px,#ff000b 650px)"></i><i style="left:7px;top:128px;width:650px;background:linear-gradient(90deg,#00ffa1 0px,#00ffa5 18px,#00ffa8 36px,#00ffad 54px,#00ffb1 72px,#00ffb6 90px,#00ffbc 108px,#00ffc2 126px,#00ffc8 140.1px,#44ffd1 162px,#85ffda 180px,#cfffe5 198px,#ffffeb 208.3px,#ffded1 216px,#ffa5a5 234px,#ff7f87 252px,#ff6371 270px,#ff4e61 288px,#ff3e54 306px,#ff3049 324px,#ff2541 342px,#ff1c3a 360px,#ff1534 378px,#ff0e2e 396px,#ff082a 414px,#ff0326 432px,#ff0023 444.8px,#ff0022 450px,#ff001f 468px,#ff001d 486px,#ff001a 504px,#ff0018 522px,#ff0016 540px,#ff0014 558px,#ff0012 576px,#ff0010 594px,#ff000f 612px,#ff000e 630px,#ff000c 650px)"></i><i style="left:8px;top:130px;width:649px;background:linear-gradient(90deg,#00ffa5 0px,#00ffa9 18px,#00ffad 36px,#00ffb1 54px,#00ffb6 72px,#00ffbb 90px,#00ffc1 108px,#00ffc8 126px,#00ffcd 139.4px,#47ffd8 162px,#89ffe1 180px,#d4ffec 198px,#fffff2 207.2px,#ffd9d4 216px,#ffa2a7 234px,#ff7c89 252px,#ff6173 270px,#ff4c63 288px,#ff3c55 306px,#ff2f4b 324px,#ff2442 342px,#ff1b3b 360px,#ff1435 378px,#ff0d30 396px,#ff082b 414px,#ff0327 432px,#ff0025 442.1px,#ff0024 450px,#ff0020 468px,#ff001e 486px,#ff001b 504px,#ff0019 522px,#ff0017 540px,#ff0015 558px,#ff0013 576px,#ff0011 594px,#ff0010 612px,#ff000e 630px,#ff000d 649px)"></i><i style="left:8px;top:132px;width:647px;background:linear-gradient(90deg,#00ffa9 0px,#00ffad 18px,#00ffb1 36px,#00ffb5 54px,#00ffbb 72px,#00ffc0 90px,#00ffc6 108px,#00ffcd 126px,#00ffd3 139.7px,#47ffde 162px,#89ffe8 180px,#d5fff3 198px,#fffffa 207px,#ffd8da 216px,#ffa1ac 234px,#ff7b8d 252px,#ff6076 270px,#ff4c65 288px,#ff3b58 306px,#ff2f4d 324px,#ff2444 342px,#ff1b3d 360px,#ff1337 378px,#ff0d31 396px,#ff072d 414px,#ff0228 432px,#ff0027 440.5px,#ff0025 450px,#ff0022 468px,#ff001f 486px,#ff001c 504px,#ff001a 522px,#ff0018 540px,#ff0016 558px,#ff0014 576px,#ff0012 594px,#ff0011 612px,#ff000f 630px,#ff000e 647px)"></i><i style="left:9px;top:134px;width:644px;background:linear-gradient(90deg,#00ffad 0px,#00ffb1 18px,#00ffb5 36px,#00ffba 54px,#00ffbf 72px,#00ffc5 90px,#00ffcc 108px,#00ffd3 126px,#00ffd9 138.9px,#0fffdb 144px,#4affe5 162px,#8dffef 180px,#f0ffff 202.8px,#fffcff 206.4px,#ffd4dd 216px,#ff9eaf 234px,#ff798f 252px,#ff5e79 270px,#ff4a67 288px,#ff3a5a 306px,#ff2d4f 324px,#ff2346 342px,#ff1a3e 360px,#ff1238 378px,#ff0c33 396px,#ff062e 414px,#ff012a 432px,#ff0028 437.9px,#ff0026 450px,#ff0023 468px,#ff0020 486px,#ff001d 504px,#ff001b 522px,#ff0018 540px,#ff0016 558px,#ff0015 576px,#ff0013 594px,#ff0011 612px,#ff0010 630px,#ff000f 644px)"></i><i style="left:9px;top:136px;width:643px;background:linear-gradient(90deg,#00ffb0 0px,#00ffb5 18px,#00ffb9 36px,#00ffbe 54px,#00ffc4 72px,#00ffca 90px,#00ffd1 108px,#00ffd9 126px,#00ffdf 139.2px,#49ffeb 162px,#8dfff6 180px,#c3ffff 192.8px,#d7fbff 198px,#fff4ff 208.1px,#ffd3e3 216px,#ff9db3 234px,#ff7893 252px,#ff5e7c 270px,#ff496a 288px,#ff395c 306px,#ff2d51 324px,#ff2248 342px,#ff1940 360px,#ff123a 378px,#ff0c34 396px,#ff062f 414px,#ff002a 436.3px,#ff0027 450px,#ff0024 468px,#ff0021 486px,#ff001e 504px,#ff001c 522px,#ff0019 540px,#ff0017 558px,#ff0016 576px,#ff0014 594px,#ff0012 612px,#ff0011 630px,#ff0010 643px)"></i><i style="left:10px;top:138px;width:640px;background:linear-gradient(90deg,#00ffb4 0px,#00ffb9 18px,#00ffbe 36px,#00ffc3 54px,#00ffc9 72px,#00ffcf 90px,#00ffd7 108px,#00ffdf 126px,#00ffe5 138.5px,#11ffe8 144px,#4dfff2 162px,#98ffff 181.9px,#d5f3ff 198px,#ffebff 208.8px,#ffcfe5 216px,#ff9ab6 234px,#ff7695 252px,#ff5c7e 270px,#ff486c 288px,#ff385e 306px,#ff2b53 324px,#ff214a 342px,#ff1842 360px,#ff113b 378px,#ff0b35 396px,#ff0531 414px,#ff002c 433.7px,#ff0028 450px,#ff0025 468px,#ff0022 486px,#ff001f 504px,#ff001d 522px,#ff001a 540px,#ff0018 558px,#ff0016 576px,#ff0015 594px,#ff0013 612px,#ff0011 630px,#ff0011 640px)"></i><i style="left:10px;top:140px;width:639px;background:linear-gradient(90deg,#00ffb8 0px,#00ffbd 18px,#00ffc2 36px,#00ffc7 54px,#00ffce 72px,#00ffd4 90px,#00ffdc 108px,#00ffe4 126px,#00ffeb 138.7px,#10ffee 144px,#4cfff8 162px,#71ffff 171.9px,#8ef9ff 180px,#d0edff 198px,#ffe3ff 210.4px,#ffceeb 216px,#ff99ba 234px,#ff7599 252px,#ff5b81 270px,#ff476f 288px,#ff3761 306px,#ff2b55 324px,#ff214c 342px,#ff1844 360px,#ff113d 378px,#ff0a37 396px,#ff0532 414px,#ff002e 432.1px,#ff002a 450px,#ff0026 468px,#ff0023 486px,#ff0020 504px,#ff001e 522px,#ff001b 540px,#ff0019 558px,#ff0017 576px,#ff0015 594px,#ff0014 612px,#ff0012 630px,#ff0012 639px)"></i><i style="left:11px;top:142px;width:636px;background:linear-gradient(90deg,#00ffbc 0px,#00ffc1 18px,#00ffc6 36px,#00ffcc 54px,#00ffd3 72px,#00ffda 90px,#00ffe2 108px,#00ffea 126px,#00fff1 138px,#13fff4 144px,#4cffff 161px,#8df2ff 180px,#cee5ff 198px,#ffdcff 211.1px,#ff96bd 234px,#ff729c 252px,#ff5983 270px,#ff4571 288px,#ff3662 306px,#ff2a57 324px,#ff204d 342px,#ff1745 360px,#ff103e 378px,#ff0a38 396px,#ff0433 414px,#ff002f 429.4px,#ff002b 450px,#ff0027 468px,#ff0024 486px,#ff0021 504px,#ff001f 522px,#ff001c 540px,#ff001a 558px,#ff0018 576px,#ff0016 594px,#ff0015 612px,#ff0013 630px,#ff0012 636px)"></i><i style="left:11px;top:144px;width:634px;background:linear-gradient(90deg,#00ffc0 0px,#00ffc5 18px,#00ffcb 36px,#00ffd1 54px,#00ffd7 72px,#00ffdf 90px,#00ffe7 108px,#00fff0 126px,#00fff7 138.3px,#12fffb 144px,#29ffff 151px,#4df8ff 162px,#8aecff 180px,#c9dfff 198px,#ffd4ff 212.7px,#ff95c1 234px,#ff729f 252px,#ff5887 270px,#ff4574 288px,#ff3565 306px,#ff2959 324px,#ff1f4f 342px,#ff1647 360px,#ff0f40 378px,#ff093a 396px,#ff0435 414px,#ff0031 427.8px,#ff002c 450px,#ff0028 468px,#ff0025 486px,#ff0022 504px,#ff0020 522px,#ff001d 540px,#ff001b 558px,#ff0019 576px,#ff0017 594px,#ff0015 612px,#ff0013 634px)"></i><i style="left:12px;top:146px;width:632px;background:linear-gradient(90deg,#00ffc4 0px,#00ffca 18px,#00ffcf 36px,#00ffd6 54px,#00ffdd 72px,#00ffe4 90px,#00ffed 108px,#00fff7 126px,#00fffd 137.5px,#08ffff 140.1px,#4ef1ff 162px,#89e5ff 180px,#c8d8ff 198px,#ffcdff 213.4px,#ff92c4 234px,#ff6fa2 252px,#ff5689 270px,#ff4376 288px,#ff3467 306px,#ff285b 324px,#ff1e51 342px,#ff1648 360px,#ff0e41 378px,#ff083b 396px,#ff0336 414px,#ff0033 425.2px,#ff0031 432px,#ff002d 450px,#ff0029 468px,#ff0026 486px,#ff0023 504px,#ff0020 522px,#ff001e 540px,#ff001c 558px,#ff001a 576px,#ff0018 594px,#ff0016 612px,#ff0014 632px)"></i><i style="left:12px;top:148px;width:630px;background:linear-gradient(90deg,#00ffc8 0px,#00ffce 18px,#00ffd4 36px,#00ffda 54px,#00ffe2 72px,#00ffea 90px,#00fff3 108px,#00ffff 130.1px,#00faff 137.8px,#13f6ff 144px,#4bebff 162px,#86dfff 180px,#c3d3ff 198px,#ffc6ff 215.1px,#ff91c8 234px,#ff6fa5 252px,#ff558c 270px,#ff4278 288px,#ff3369 306px,#ff275d 324px,#ff1d53 342px,#ff154a 360px,#ff0e43 378px,#ff083d 396px,#ff0337 414px,#ff0035 423.6px,#ff0033 432px,#ff002e 450px,#ff002b 468px,#ff0027 486px,#ff0024 504px,#ff0022 522px,#ff001f 540px,#ff001d 558px,#ff001b 576px,#ff0019 594px,#ff0017 612px,#ff0015 630px)"></i><i style="left:13px;top:150px;width:628px;background:linear-gradient(90deg,#00ffcd 0px,#00ffd2 18px,#00ffd9 36px,#00ffdf 54px,#00ffe7 72px,#00ffef 90px,#00fff9 108px,#00ffff 119.2px,#00fbff 126px,#00f4ff 137.1px,#15f0ff 144px,#4ce5ff 162px,#86d9ff 180px,#c2cdff 198px,#ffc0ff 215.7px,#ff8ecb 234px,#ff6ca7 252px,#ff548e 270px,#ff417a 288px,#ff326b 306px,#ff265e 324px,#ff1c54 342px,#ff144c 360px,#ff0d44 378px,#ff073e 396px,#ff0239 414px,#ff0037 421px,#ff0034 432px,#ff002f 450px,#ff002c 468px,#ff0028 486px,#ff0025 504px,#ff0022 522px,#ff0020 540px,#ff001e 558px,#ff001b 576px,#ff001a 594px,#ff0018 612px,#ff0016 628px)"></i><i style="left:14px;top:152px;width:625px;background:linear-gradient(90deg,#00ffd1 0px,#00ffd7 18px,#00ffdd 36px,#00ffe4 54px,#00ffec 72px,#00fff5 90px,#00ffff 108.3px,#00f5ff 126px,#00eeff 136.4px,#17eaff 144px,#4ddeff 162px,#86d3ff 180px,#c1c7ff 198px,#ffbaff 216.4px,#ff8bcd 234px,#ff6aaa 252px,#ff5290 270px,#ff3f7c 288px,#ff316d 306px,#ff2560 324px,#ff1b56 342px,#ff134d 360px,#ff0c46 378px,#ff063f 396px,#ff0038 418.3px,#ff0035 432px,#ff0031 450px,#ff002d 468px,#ff0029 486px,#ff0026 504px,#ff0023 522px,#ff0021 540px,#ff001e 558px,#ff001c 576px,#ff001a 594px,#ff0018 612px,#ff0017 625px)"></i><i style="left:14px;top:154px;width:623px;background:linear-gradient(90deg,#00ffd5 0px,#00ffdb 18px,#00ffe2 36px,#00ffe9 54px,#00fff1 72px,#00fffa 90px,#00ffff 98.3px,#00faff 108px,#00efff 126px,#00e9ff 136.6px,#15e4ff 144px,#4bd9ff 162px,#83cdff 180px,#bcc1ff 198px,#ffb4ff 218px,#ff8ad2 234px,#ff69ad 252px,#ff5193 270px,#ff3f7f 288px,#ff306f 306px,#ff2462 324px,#ff1b58 342px,#ff134f 360px,#ff0c47 378px,#ff0641 396px,#ff003a 416.7px,#ff0036 432px,#ff0032 450px,#ff002e 468px,#ff002a 486px,#ff0027 504px,#ff0024 522px,#ff0022 540px,#ff001f 558px,#ff001d 576px,#ff001b 594px,#ff0019 612px,#ff0018 623px)"></i><i style="left:15px;top:156px;width:621px;background:linear-gradient(90deg,#00ffd9 0px,#00ffe0 18px,#00ffe7 36px,#00ffef 54px,#00fff7 72px,#00ffff 87.4px,#00f4ff 108px,#00e9ff 126px,#00e3ff 135.9px,#17deff 144px,#4cd3ff 162px,#83c8ff 180px,#bbbcff 198px,#ffaeff 218.7px,#ff87d4 234px,#ff67b0 252px,#ff4f95 270px,#ff3d81 288px,#ff2f71 306px,#ff2364 324px,#ff1a59 342px,#ff1250 360px,#ff0b49 378px,#ff0542 396px,#ff003c 414.1px,#ff0037 432px,#ff0033 450px,#ff002f 468px,#ff002b 486px,#ff0028 504px,#ff0025 522px,#ff0023 540px,#ff0020 558px,#ff001e 576px,#ff001c 594px,#ff001a 612px,#ff0019 621px)"></i><i style="left:15px;top:158px;width:619px;background:linear-gradient(90deg,#00ffde 0px,#00ffe4 18px,#00ffeb 36px,#00fff3 54px,#00fffc 72px,#00ffff 77.4px,#00f8ff 90px,#00eeff 108px,#00e4ff 126px,#00deff 136.1px,#16d9ff 144px,#4aceff 162px,#7fc3ff 180px,#b7b7ff 198px,#ffa8ff 220.4px,#ff86d8 234px,#ff66b3 252px,#ff4e98 270px,#ff3c84 288px,#ff2e73 306px,#ff2366 324px,#ff195b 342px,#ff1152 360px,#ff0a4a 378px,#ff0544 396px,#ff003e 412.5px,#ff0039 432px,#ff0034 450px,#ff0030 468px,#ff002d 486px,#ff0029 504px,#ff0026 522px,#ff0024 540px,#ff0021 558px,#ff001f 576px,#ff001d 594px,#ff001b 612px,#ff001a 619px)"></i><i style="left:16px;top:160px;width:617px;background:linear-gradient(90deg,#00ffe2 0px,#00ffe9 18px,#00fff0 36px,#00fff9 54px,#00ffff 66.5px,#00fcff 72px,#00f3ff 90px,#00e9ff 108px,#00deff 126px,#00d9ff 135.4px,#18d4ff 144px,#4bc9ff 162px,#7fbeff 180px,#b6b2ff 198px,#efa6ff 216px,#ffa2ff 221px,#ff83da 234px,#ff64b5 252px,#ff4c9a 270px,#ff3b85 288px,#ff2d75 306px,#ff2168 324px,#ff185d 342px,#ff1053 360px,#ff0a4c 378px,#ff0445 396px,#ff0040 409.9px,#ff003a 432px,#ff0035 450px,#ff0031 468px,#ff002d 486px,#ff002a 504px,#ff0027 522px,#ff0024 540px,#ff0022 558px,#ff0020 576px,#ff001e 594px,#ff001c 612px,#ff001b 617px)"></i><i style="left:16px;top:162px;width:615px;background:linear-gradient(90deg,#00ffe6 0px,#00ffed 18px,#00fff5 36px,#00ffff 56.5px,#00f7ff 72px,#00eeff 90px,#00e4ff 108px,#00daff 126px,#00d4ff 135.7px,#17cfff 144px,#49c4ff 162px,#7db9ff 180px,#b2adff 198px,#eaa1ff 216px,#ff9dff 222.7px,#ff82df 234px,#ff63b9 252px,#ff4c9d 270px,#ff3a88 288px,#ff2c77 306px,#ff216a 324px,#ff185f 342px,#ff1055 360px,#ff094d 378px,#ff0346 396px,#ff0042 408.2px,#ff0040 414px,#ff003b 432px,#ff0037 450px,#ff0032 468px,#ff002f 486px,#ff002b 504px,#ff0028 522px,#ff0025 540px,#ff0023 558px,#ff0021 576px,#ff001e 594px,#ff001c 615px)"></i><i style="left:17px;top:164px;width:612px;background:linear-gradient(90deg,#00ffeb 0px,#00fff2 18px,#00fffa 36px,#00ffff 45.6px,#00fbff 54px,#00f2ff 72px,#00e8ff 90px,#00deff 108px,#00d4ff 126px,#00cfff 134.9px,#18caff 144px,#4abfff 162px,#7db4ff 180px,#b1a9ff 198px,#e89dff 216px,#ff98ff 223.3px,#ff7fe1 234px,#ff61bb 252px,#ff4a9f 270px,#ff398a 288px,#ff2b79 306px,#ff206b 324px,#ff1760 342px,#ff0f57 360px,#ff084f 378px,#ff0348 396px,#ff0044 405.6px,#ff0042 414px,#ff003c 432px,#ff0038 450px,#ff0033 468px,#ff0030 486px,#ff002c 504px,#ff0029 522px,#ff0026 540px,#ff0024 558px,#ff0021 576px,#ff001f 594px,#ff001d 612px)"></i><i style="left:18px;top:166px;width:610px;background:linear-gradient(90deg,#00fff0 0px,#00fff7 18px,#00ffff 34.6px,#00f5ff 54px,#00ecff 72px,#00e3ff 90px,#00d9ff 108px,#00cfff 126px,#00cbff 134.2px,#1ac5ff 144px,#4abaff 162px,#7dafff 180px,#b1a4ff 198px,#e798ff 216px,#ff93ff 224px,#ff7de3 234px,#ff5ebd 252px,#ff48a1 270px,#ff378c 288px,#ff2a7b 306px,#ff1f6d 324px,#ff1662 342px,#ff0e58 360px,#ff0850 378px,#ff0249 396px,#ff0046 403px,#ff0043 414px,#ff003d 432px,#ff0039 450px,#ff0034 468px,#ff0031 486px,#ff002d 504px,#ff002a 522px,#ff0027 540px,#ff0025 558px,#ff0022 576px,#ff0020 594px,#ff001e 610px)"></i><i style="left:18px;top:168px;width:608px;background:linear-gradient(90deg,#00fff4 0px,#00fffc 18px,#00ffff 24.7px,#00faff 36px,#00f1ff 54px,#00e8ff 72px,#00deff 90px,#00d5ff 108px,#00cbff 126px,#00c6ff 134.5px,#19c1ff 144px,#49b6ff 162px,#7aabff 180px,#ada0ff 198px,#e294ff 216px,#ff8eff 225.6px,#ff7ce8 234px,#ff5ec1 252px,#ff47a4 270px,#ff368e 288px,#ff297d 306px,#ff1e6f 324px,#ff1564 342px,#ff0e5a 360px,#ff0752 378px,#ff024a 396px,#ff0048 401.4px,#ff0044 414px,#ff003f 432px,#ff003a 450px,#ff0036 468px,#ff0032 486px,#ff002e 504px,#ff002b 522px,#ff0028 540px,#ff0025 558px,#ff0023 576px,#ff0021 594px,#ff001f 608px)"></i><i style="left:19px;top:170px;width:606px;background:linear-gradient(90deg,#00fff9 0px,#00ffff 13.7px,#00f5ff 36px,#00ecff 54px,#00e3ff 72px,#00d9ff 90px,#00d0ff 108px,#00c6ff 126px,#00c2ff 133.8px,#1abcff 144px,#49b1ff 162px,#7aa7ff 180px,#ac9bff 198px,#e090ff 216px,#ff89ff 226.3px,#ff79ea 234px,#ff5bc3 252px,#ff46a6 270px,#ff3590 288px,#ff287f 306px,#ff1d71 324px,#ff1465 342px,#ff0d5b 360px,#ff0653 378px,#ff004b 398.8px,#ff0045 414px,#ff0040 432px,#ff003b 450px,#ff0037 468px,#ff0033 486px,#ff002f 504px,#ff002c 522px,#ff0029 540px,#ff0026 558px,#ff0024 576px,#ff0022 594px,#ff0020 606px)"></i><i style="left:20px;top:172px;width:603px;background:linear-gradient(90deg,#00fffe 0px,#00ffff 2.8px,#00f8ff 18px,#00f0ff 36px,#00e7ff 54px,#00deff 72px,#00d5ff 90px,#00cbff 108px,#00c1ff 126px,#00beff 133px,#1cb7ff 144px,#4aadff 162px,#7aa2ff 180px,#ac97ff 198px,#df8cff 216px,#ff84ff 227px,#ff76ec 234px,#ff59c5 252px,#ff44a8 270px,#ff3392 288px,#ff2680 306px,#ff1c72 324px,#ff1366 342px,#ff0c5d 360px,#ff0554 378px,#ff004d 396.2px,#ff0046 414px,#ff0041 432px,#ff003c 450px,#ff0038 468px,#ff0034 486px,#ff0030 504px,#ff002d 522px,#ff002a 540px,#ff0027 558px,#ff0025 576px,#ff0022 594px,#ff0021 603px)"></i><i style="left:20px;top:174px;width:601px;background:linear-gradient(90deg,#00fcff 0px,#00f4ff 18px,#00ebff 36px,#00e3ff 54px,#00daff 72px,#00d1ff 90px,#00c7ff 108px,#00bdff 126px,#00b9ff 133.3px,#1bb3ff 144px,#48a9ff 162px,#789eff 180px,#a894ff 198px,#db88ff 216px,#ff80ff 228.6px,#ff75f0 234px,#ff58c8 252px,#ff43ab 270px,#ff3395 288px,#ff2683 306px,#ff1b74 324px,#ff1368 342px,#ff0b5e 360px,#ff0556 378px,#ff004f 394.5px,#ff0048 414px,#ff0042 432px,#ff003d 450px,#ff0039 468px,#ff0035 486px,#ff0031 504px,#ff002e 522px,#ff002b 540px,#ff0028 558px,#ff0025 576px,#ff0023 594px,#ff0022 601px)"></i><i style="left:21px;top:176px;width:599px;background:linear-gradient(90deg,#00f7ff 0px,#00efff 18px,#00e7ff 36px,#00deff 54px,#00d5ff 72px,#00ccff 90px,#00c3ff 108px,#00b9ff 126px,#00b5ff 132.6px,#1cafff 144px,#49a5ff 162px,#789aff 180px,#a88fff 198px,#d984ff 216px,#ff7cff 229.3px,#ff56ca 252px,#ff41ad 270px,#ff3196 288px,#ff2484 306px,#ff1a76 324px,#ff126a 342px,#ff0a60 360px,#ff0457 378px,#ff0051 391.9px,#ff0049 414px,#ff0043 432px,#ff003e 450px,#ff003a 468px,#ff0036 486px,#ff0032 504px,#ff002f 522px,#ff002c 540px,#ff0029 558px,#ff0026 576px,#ff0024 594px,#ff0023 599px)"></i><i style="left:21px;top:178px;width:597px;background:linear-gradient(90deg,#00f3ff 0px,#00ebff 18px,#00e2ff 36px,#00daff 54px,#00d1ff 72px,#00c8ff 90px,#00bfff 108px,#00b5ff 126px,#00b2ff 132.8px,#1babff 144px,#47a1ff 162px,#7597ff 180px,#a58cff 198px,#d581ff 216px,#ff77ff 230.9px,#ff55ce 252px,#ff41b0 270px,#ff3099 288px,#ff2487 306px,#ff1a78 324px,#ff116c 342px,#ff0a62 360px,#ff0459 378px,#ff0053 390.3px,#ff0051 396px,#ff004b 414px,#ff0045 432px,#ff0040 450px,#ff003b 468px,#ff0037 486px,#ff0033 504px,#ff0030 522px,#ff002d 540px,#ff002a 558px,#ff0027 576px,#ff0024 597px)"></i><i style="left:22px;top:180px;width:595px;background:linear-gradient(90deg,#00eeff 0px,#00e6ff 18px,#00deff 36px,#00d5ff 54px,#00cdff 72px,#00c4ff 90px,#00bbff 108px,#00b1ff 126px,#00aeff 132.1px,#1ca7ff 144px,#489dff 162px,#7593ff 180px,#a488ff 198px,#d47dff 216px,#ff73ff 231.6px,#ff53d0 252px,#ff3fb2 270px,#ff2f9b 288px,#ff2388 306px,#ff187a 324px,#ff106d 342px,#ff0963 360px,#ff035a 378px,#ff0056 387.7px,#ff0052 396px,#ff004c 414px,#ff0046 432px,#ff0041 450px,#ff003c 468px,#ff0038 486px,#ff0034 504px,#ff0031 522px,#ff002d 540px,#ff002b 558px,#ff0028 576px,#ff0025 595px)"></i><i style="left:23px;top:182px;width:592px;background:linear-gradient(90deg,#00eaff 0px,#00e2ff 18px,#00daff 36px,#00d1ff 54px,#00c8ff 72px,#00c0ff 90px,#00b6ff 108px,#00adff 126px,#00aaff 131.4px,#1ea3ff 144px,#4999ff 162px,#768fff 180px,#a484ff 198px,#d37aff 216px,#ff6fff 232.3px,#ff51d2 252px,#ff3db4 270px,#ff2e9c 288px,#ff218a 306px,#ff177b 324px,#ff0f6f 342px,#ff0864 360px,#ff025b 378px,#ff0058 385.1px,#ff0053 396px,#ff004d 414px,#ff0047 432px,#ff0042 450px,#ff003d 468px,#ff0039 486px,#ff0035 504px,#ff0031 522px,#ff002e 540px,#ff002b 558px,#ff0029 576px,#ff0027 592px)"></i><i style="left:23px;top:184px;width:590px;background:linear-gradient(90deg,#00e6ff 0px,#00deff 18px,#00d6ff 36px,#00cdff 54px,#00c5ff 72px,#00bcff 90px,#00b3ff 108px,#00aaff 126px,#00a7ff 131.6px,#1da0ff 144px,#4796ff 162px,#738cff 180px,#a181ff 198px,#cf77ff 216px,#ff6cff 233.9px,#ff50d5 252px,#ff3cb7 270px,#ff2d9f 288px,#ff218c 306px,#ff177d 324px,#ff0e71 342px,#ff0866 360px,#ff025d 378px,#ff005a 383.4px,#ff0055 396px,#ff004e 414px,#ff0048 432px,#ff0043 450px,#ff003e 468px,#ff003a 486px,#ff0036 504px,#ff0032 522px,#ff002f 540px,#ff002c 558px,#ff002a 576px,#ff0028 590px)"></i><i style="left:24px;top:186px;width:588px;background:linear-gradient(90deg,#00e2ff 0px,#00daff 18px,#00d2ff 36px,#00c9ff 54px,#00c1ff 72px,#00b8ff 90px,#00afff 108px,#00a3ff 130.9px,#1e9cff 144px,#4892ff 162px,#7388ff 180px,#a07eff 198px,#ce73ff 216px,#ff68ff 234.6px,#ff4ed7 252px,#ff3bb8 270px,#ff2ba1 288px,#ff1f8e 306px,#ff167f 324px,#ff0e72 342px,#ff0767 360px,#ff005d 380.8px,#ff0056 396px,#ff004f 414px,#ff0049 432px,#ff0044 450px,#ff003f 468px,#ff003b 486px,#ff0037 504px,#ff0033 522px,#ff0030 540px,#ff002d 558px,#ff002a 576px,#ff0029 588px)"></i><i style="left:25px;top:188px;width:585px;background:linear-gradient(90deg,#00deff 0px,#00d6ff 18px,#00ceff 36px,#00c5ff 54px,#00bdff 72px,#00b4ff 90px,#00abff 108px,#00a0ff 130.2px,#1f98ff 144px,#498fff 162px,#7485ff 180px,#a07aff 198px,#cd70ff 216px,#ff64ff 235.2px,#ff4cd9 252px,#ff39ba 270px,#ff2aa2 288px,#ff1e8f 306px,#ff1580 324px,#ff0d73 342px,#ff0669 360px,#ff005f 378.2px,#ff0057 396px,#ff0050 414px,#ff004a 432px,#ff0045 450px,#ff0040 468px,#ff003c 486px,#ff0038 504px,#ff0034 522px,#ff0031 540px,#ff002e 558px,#ff002b 576px,#ff002a 585px)"></i><i style="left:25px;top:190px;width:584px;background:linear-gradient(90deg,#00daff 0px,#00d2ff 18px,#00caff 36px,#00c2ff 54px,#00b9ff 72px,#00b1ff 90px,#00a8ff 108px,#009cff 130.4px,#1e95ff 144px,#478cff 162px,#7182ff 180px,#9d78ff 198px,#c96dff 216px,#ff60ff 236.9px,#ff4bdd 252px,#ff38bd 270px,#ff29a5 288px,#ff1e92 306px,#ff1482 324px,#ff0c75 342px,#ff056a 360px,#ff0062 376.6px,#ff0059 396px,#ff0052 414px,#ff004c 432px,#ff0046 450px,#ff0041 468px,#ff003d 486px,#ff0039 504px,#ff0035 522px,#ff0032 540px,#ff002f 558px,#ff002c 576px,#ff002b 584px)"></i><i style="left:26px;top:192px;width:581px;background:linear-gradient(90deg,#00d6ff 0px,#00ceff 18px,#00c6ff 36px,#00beff 54px,#00b6ff 72px,#00adff 90px,#00a4ff 108px,#0099ff 129.7px,#1f92ff 144px,#4888ff 162px,#727eff 180px,#9c74ff 198px,#c96aff 216px,#ff5dff 237.6px,#ff49de 252px,#ff37bf 270px,#ff28a7 288px,#ff1c93 306px,#ff1384 324px,#ff0b77 342px,#ff046c 360px,#ff0064 374px,#ff005a 396px,#ff0053 414px,#ff004d 432px,#ff0047 450px,#ff0042 468px,#ff003e 486px,#ff003a 504px,#ff0036 522px,#ff0033 540px,#ff0030 558px,#ff002d 576px,#ff002c 581px)"></i><i style="left:27px;top:194px;width:578px;background:linear-gradient(90deg,#00d2ff 0px,#00caff 18px,#00c2ff 36px,#00baff 54px,#00b2ff 72px,#00a9ff 90px,#00a1ff 108px,#0096ff 129px,#218eff 144px,#4985ff 162px,#727bff 180px,#9c71ff 198px,#c867ff 216px,#ff5aff 238.2px,#ff47e0 252px,#ff35c1 270px,#ff27a8 288px,#ff1b95 306px,#ff1285 324px,#ff0a78 342px,#ff046d 360px,#ff0067 371.4px,#ff0063 378px,#ff005b 396px,#ff0054 414px,#ff004e 432px,#ff0048 450px,#ff0043 468px,#ff003f 486px,#ff003b 504px,#ff0037 522px,#ff0033 540px,#ff0030 558px,#ff002d 578px)"></i><i style="left:27px;top:196px;width:577px;background:linear-gradient(90deg,#00cfff 0px,#00c7ff 18px,#00bfff 36px,#00b7ff 54px,#00afff 72px,#00a6ff 90px,#009eff 108px,#0093ff 129.2px,#208cff 144px,#4782ff 162px,#7078ff 180px,#996fff 198px,#c464ff 216px,#f05aff 234px,#ff56ff 239.9px,#ff47e4 252px,#ff34c4 270px,#ff26ab 288px,#ff1b97 306px,#ff1187 324px,#ff0a7a 342px,#ff036f 360px,#ff0069 369.7px,#ff0065 378px,#ff005d 396px,#ff0056 414px,#ff004f 432px,#ff0049 450px,#ff0044 468px,#ff0040 486px,#ff003c 504px,#ff0038 522px,#ff0034 540px,#ff0031 558px,#ff002e 577px)"></i><i style="left:28px;top:198px;width:574px;background:linear-gradient(90deg,#00cbff 0px,#00c3ff 18px,#00bcff 36px,#00b4ff 54px,#00abff 72px,#00a3ff 90px,#009aff 108px,#0090ff 128.5px,#2188ff 144px,#487fff 162px,#7075ff 180px,#996bff 198px,#c361ff 216px,#ef57ff 234px,#ff53ff 240.5px,#ff45e5 252px,#ff32c5 270px,#ff24ad 288px,#ff1999 306px,#ff1089 324px,#ff097b 342px,#ff0270 360px,#ff006c 367.1px,#ff0066 378px,#ff005e 396px,#ff0057 414px,#ff0050 432px,#ff004a 450px,#ff0045 468px,#ff0041 486px,#ff003d 504px,#ff0039 522px,#ff0035 540px,#ff0032 558px,#ff0030 574px)"></i><i style="left:29px;top:200px;width:572px;background:linear-gradient(90deg,#00c7ff 0px,#00c0ff 18px,#00b8ff 36px,#00b0ff 54px,#00a8ff 72px,#009fff 90px,#0097ff 108px,#008dff 127.8px,#2285ff 144px,#497cff 162px,#7072ff 180px,#9968ff 198px,#c35eff 216px,#ed54ff 234px,#ff50ff 241.2px,#ff43e7 252px,#ff31c7 270px,#ff23ae 288px,#ff189a 306px,#ff0f8a 324px,#ff087d 342px,#ff006f 364.5px,#ff0067 378px,#ff005f 396px,#ff0058 414px,#ff0051 432px,#ff004b 450px,#ff0046 468px,#ff0042 486px,#ff003d 504px,#ff003a 522px,#ff0036 540px,#ff0033 558px,#ff0031 572px)"></i><i style="left:29px;top:202px;width:570px;background:linear-gradient(90deg,#00c4ff 0px,#00bdff 18px,#00b5ff 36px,#00adff 54px,#00a5ff 72px,#009dff 90px,#0094ff 108px,#008aff 128px,#2182ff 144px,#4779ff 162px,#6e70ff 180px,#9666ff 198px,#bf5cff 216px,#ea52ff 234px,#ff4dff 242.9px,#ff42eb 252px,#ff30ca 270px,#ff22b1 288px,#ff189d 306px,#ff0f8c 324px,#ff077f 342px,#ff0071 362.9px,#ff0069 378px,#ff0061 396px,#ff0059 414px,#ff0053 432px,#ff004d 450px,#ff0047 468px,#ff0043 486px,#ff003e 504px,#ff003b 522px,#ff0037 540px,#ff0034 558px,#ff0032 570px)"></i><i style="left:30px;top:204px;width:567px;background:linear-gradient(90deg,#00c1ff 0px,#00b9ff 18px,#00b2ff 36px,#00aaff 54px,#00a2ff 72px,#0099ff 90px,#0091ff 108px,#0088ff 127.3px,#227fff 144px,#4876ff 162px,#6e6dff 180px,#9663ff 198px,#bf59ff 216px,#e84fff 234px,#ff4aff 243.5px,#ff40ec 252px,#ff2fcc 270px,#ff21b2 288px,#ff169e 306px,#ff0e8e 324px,#ff0680 342px,#ff0074 360.3px,#ff006a 378px,#ff0062 396px,#ff005a 414px,#ff0054 432px,#ff004e 450px,#ff0048 468px,#ff0044 486px,#ff003f 504px,#ff003b 522px,#ff0038 540px,#ff0035 558px,#ff0033 567px)"></i><i style="left:31px;top:206px;width:565px;background:linear-gradient(90deg,#00bdff 0px,#00b6ff 18px,#00aeff 36px,#00a6ff 54px,#009eff 72px,#0096ff 90px,#008eff 108px,#0085ff 126.6px,#237cff 144px,#4873ff 162px,#6f6aff 180px,#9661ff 198px,#be57ff 216px,#e74dff 234px,#ff47ff 244.2px,#ff3eee 252px,#ff2dcd 270px,#ff20b4 288px,#ff159f 306px,#ff0d8f 324px,#ff0581 342px,#ff0077 357.6px,#ff006b 378px,#ff0063 396px,#ff005b 414px,#ff0055 432px,#ff004f 450px,#ff0049 468px,#ff0045 486px,#ff0040 504px,#ff003c 522px,#ff0039 540px,#ff0035 558px,#ff0034 565px)"></i><i style="left:32px;top:208px;width:562px;background:linear-gradient(90deg,#00baff 0px,#00b3ff 18px,#00abff 36px,#00a3ff 54px,#009bff 72px,#0093ff 90px,#008bff 108px,#0082ff 125.8px,#2479ff 144px,#4970ff 162px,#6f67ff 180px,#965eff 198px,#bd54ff 216px,#e64aff 234px,#ff44ff 244.8px,#ff3cef 252px,#ff2bcf 270px,#ff1eb5 288px,#ff14a1 306px,#ff0c90 324px,#ff0482 342px,#ff007a 355px,#ff0077 360px,#ff006d 378px,#ff0064 396px,#ff005c 414px,#ff0056 432px,#ff0050 450px,#ff004a 468px,#ff0045 486px,#ff0041 504px,#ff003d 522px,#ff0039 540px,#ff0035 562px)"></i><i style="left:32px;top:210px;width:560px;background:linear-gradient(90deg,#00b7ff 0px,#00b0ff 18px,#00a8ff 36px,#00a1ff 54px,#0099ff 72px,#0091ff 90px,#0088ff 108px,#0080ff 126.1px,#2377ff 144px,#486eff 162px,#6d65ff 180px,#935cff 198px,#ba52ff 216px,#e248ff 234px,#ff41ff 246.5px,#ff3bf3 252px,#ff2bd2 270px,#ff1eb8 288px,#ff13a3 306px,#ff0b92 324px,#ff0484 342px,#ff007d 353.4px,#ff0078 360px,#ff006e 378px,#ff0065 396px,#ff005e 414px,#ff0057 432px,#ff0051 450px,#ff004b 468px,#ff0047 486px,#ff0042 504px,#ff003e 522px,#ff003a 540px,#ff0037 560px)"></i><i style="left:33px;top:212px;width:558px;background:linear-gradient(90deg,#00b4ff 0px,#00adff 18px,#00a5ff 36px,#009dff 54px,#0096ff 72px,#008eff 90px,#0085ff 108px,#007dff 125.4px,#2474ff 144px,#486bff 162px,#6d62ff 180px,#9359ff 198px,#ba50ff 216px,#e146ff 234px,#ff3fff 247.2px,#ff29d3 270px,#ff1cb9 288px,#ff12a5 306px,#ff0a94 324px,#ff0386 342px,#ff0080 350.8px,#ff007a 360px,#ff006f 378px,#ff0067 396px,#ff005f 414px,#ff0058 432px,#ff0052 450px,#ff004c 468px,#ff0047 486px,#ff0043 504px,#ff003f 522px,#ff003b 540px,#ff0038 558px)"></i><i style="left:34px;top:214px;width:555px;background:linear-gradient(90deg,#00b1ff 0px,#00aaff 18px,#00a2ff 36px,#009aff 54px,#0093ff 72px,#008bff 90px,#0083ff 108px,#007bff 124.6px,#2572ff 144px,#4969ff 162px,#6d60ff 180px,#9357ff 198px,#b94dff 216px,#e044ff 234px,#ff3cff 247.8px,#ff28d5 270px,#ff1bbb 288px,#ff11a6 306px,#ff0995 324px,#ff0287 342px,#ff0083 348.2px,#ff007b 360px,#ff0071 378px,#ff0068 396px,#ff0060 414px,#ff0059 432px,#ff0053 450px,#ff004d 468px,#ff0048 486px,#ff0044 504px,#ff0040 522px,#ff003c 540px,#ff0039 555px)"></i><i style="left:34px;top:216px;width:554px;background:linear-gradient(90deg,#00aeff 0px,#00a7ff 18px,#00a0ff 36px,#0098ff 54px,#0090ff 72px,#0088ff 90px,#0080ff 108px,#0078ff 124.9px,#246fff 144px,#4867ff 162px,#6c5eff 180px,#9055ff 198px,#b64bff 216px,#dd42ff 234px,#ff39ff 249.5px,#ff27d8 270px,#ff1abe 288px,#ff10a8 306px,#ff0897 324px,#ff0086 346.5px,#ff007d 360px,#ff0072 378px,#ff0069 396px,#ff0061 414px,#ff005a 432px,#ff0054 450px,#ff004e 468px,#ff0049 486px,#ff0045 504px,#ff0041 522px,#ff003d 540px,#ff003a 554px)"></i><i style="left:35px;top:218px;width:551px;background:linear-gradient(90deg,#00abff 0px,#00a4ff 18px,#009dff 36px,#0095ff 54px,#008dff 72px,#0086ff 90px,#007dff 108px,#0076ff 124.2px,#256dff 144px,#4864ff 162px,#6c5bff 180px,#9052ff 198px,#b649ff 216px,#dc3fff 234px,#ff37ff 250.1px,#ff25d9 270px,#ff19bf 288px,#ff0faa 306px,#ff0799 324px,#ff0089 343.9px,#ff007e 360px,#ff0073 378px,#ff006a 396px,#ff0062 414px,#ff005b 432px,#ff0055 450px,#ff004f 468px,#ff004a 486px,#ff0046 504px,#ff0042 522px,#ff003e 540px,#ff003c 551px)"></i><i style="left:36px;top:220px;width:548px;background:linear-gradient(90deg,#00a8ff 0px,#00a1ff 18px,#009aff 36px,#0092ff 54px,#008bff 72px,#0083ff 90px,#007bff 108px,#0074ff 123.4px,#266aff 144px,#4962ff 162px,#6c59ff 180px,#9050ff 198px,#b547ff 216px,#db3dff 234px,#ff34ff 250.8px,#ff24db 270px,#ff18c0 288px,#ff0eab 306px,#ff069a 324px,#ff008c 341.3px,#ff007f 360px,#ff0074 378px,#ff006b 396px,#ff0063 414px,#ff005c 432px,#ff0056 450px,#ff0050 468px,#ff004b 486px,#ff0047 504px,#ff0042 522px,#ff003f 540px,#ff003d 548px)"></i><i style="left:37px;top:222px;width:546px;background:linear-gradient(90deg,#00a5ff 0px,#009eff 18px,#0097ff 36px,#008fff 54px,#0088ff 72px,#0080ff 90px,#0078ff 108px,#0072ff 122.7px,#2768ff 144px,#495fff 162px,#6c56ff 180px,#904eff 198px,#b444ff 216px,#da3bff 234px,#ff32ff 251.5px,#ff22dc 270px,#ff17c2 288px,#ff0dad 306px,#ff059b 324px,#ff008f 338.7px,#ff0080 360px,#ff0076 378px,#ff006c 396px,#ff0064 414px,#ff005d 432px,#ff0057 450px,#ff0051 468px,#ff004c 486px,#ff0047 504px,#ff0043 522px,#ff003f 540px,#ff003e 546px)"></i><i style="left:37px;top:224px;width:544px;background:linear-gradient(90deg,#00a3ff 0px,#009cff 18px,#0095ff 36px,#008dff 54px,#0086ff 72px,#007eff 90px,#0076ff 108px,#006fff 123px,#2666ff 144px,#485dff 162px,#6b55ff 180px,#8e4cff 198px,#b243ff 216px,#d73aff 234px,#ff2fff 253.1px,#ff22df 270px,#ff16c4 288px,#ff0caf 306px,#ff059d 324px,#ff0092 337.1px,#ff0082 360px,#ff0077 378px,#ff006e 396px,#ff0066 414px,#ff005f 432px,#ff0058 450px,#ff0052 468px,#ff004d 486px,#ff0048 504px,#ff0044 522px,#ff003f 544px)"></i><i style="left:38px;top:226px;width:542px;background:linear-gradient(90deg,#00a0ff 0px,#0099ff 18px,#0092ff 36px,#008bff 54px,#0083ff 72px,#007bff 90px,#0073ff 108px,#006dff 122.2px,#2763ff 144px,#495bff 162px,#6b52ff 180px,#8e4aff 198px,#b141ff 216px,#d637ff 234px,#ff2dff 253.8px,#ff20e1 270px,#ff15c6 288px,#ff0bb0 306px,#ff049f 324px,#ff0096 334.4px,#ff0090 342px,#ff0083 360px,#ff0078 378px,#ff006f 396px,#ff0067 414px,#ff0060 432px,#ff0059 450px,#ff0053 468px,#ff004e 486px,#ff0049 504px,#ff0045 522px,#ff0041 542px)"></i><i style="left:39px;top:228px;width:539px;background:linear-gradient(90deg,#009dff 0px,#0096ff 18px,#008fff 36px,#0088ff 54px,#0080ff 72px,#0079ff 90px,#0071ff 108px,#006bff 121.5px,#2861ff 144px,#4959ff 162px,#6b50ff 180px,#8e47ff 198px,#b13fff 216px,#d535ff 234px,#ff2bff 254.4px,#ff1fe2 270px,#ff13c7 288px,#ff0ab2 306px,#ff03a0 324px,#ff0099 331.8px,#ff0091 342px,#ff0084 360px,#ff0079 378px,#ff0070 396px,#ff0068 414px,#ff0060 432px,#ff005a 450px,#ff0054 468px,#ff004f 486px,#ff004a 504px,#ff0046 522px,#ff0042 539px)"></i><i style="left:40px;top:230px;width:536px;background:linear-gradient(90deg,#009bff 0px,#0094ff 18px,#008dff 36px,#0085ff 54px,#007eff 72px,#0076ff 90px,#006fff 108px,#0069ff 120.8px,#0967ff 126px,#295fff 144px,#4a56ff 162px,#6b4eff 180px,#8d45ff 198px,#b03cff 216px,#d433ff 234px,#ff29ff 255.1px,#ff1de3 270px,#ff12c8 288px,#ff09b3 306px,#ff02a1 324px,#ff009c 329.2px,#ff0092 342px,#ff0085 360px,#ff007b 378px,#ff0071 396px,#ff0069 414px,#ff0061 432px,#ff005b 450px,#ff0055 468px,#ff0050 486px,#ff004b 504px,#ff0047 522px,#ff0043 536px)"></i><i style="left:40px;top:232px;width:535px;background:linear-gradient(90deg,#0098ff 0px,#0092ff 18px,#008aff 36px,#0083ff 54px,#007cff 72px,#0074ff 90px,#006dff 108px,#0067ff 121px,#0965ff 126px,#285dff 144px,#4955ff 162px,#6a4cff 180px,#8b44ff 198px,#ae3bff 216px,#d132ff 234px,#ff26ff 256.8px,#ff1ce6 270px,#ff11cb 288px,#ff09b5 306px,#ff00a0 327.6px,#ff0094 342px,#ff0087 360px,#ff007c 378px,#ff0073 396px,#ff006a 414px,#ff0063 432px,#ff005c 450px,#ff0056 468px,#ff0051 486px,#ff004c 504px,#ff0048 522px,#ff0045 535px)"></i><i style="left:41px;top:234px;width:532px;background:linear-gradient(90deg,#0096ff 0px,#008fff 18px,#0088ff 36px,#0081ff 54px,#0079ff 72px,#0072ff 90px,#006aff 108px,#0065ff 120.3px,#0a63ff 126px,#295bff 144px,#4952ff 162px,#6a4aff 180px,#8b42ff 198px,#ad39ff 216px,#d030ff 234px,#f427ff 252px,#ff24ff 257.4px,#ff1be8 270px,#ff10cc 288px,#ff08b6 306px,#ff00a3 325px,#ff0095 342px,#ff0088 360px,#ff007d 378px,#ff0074 396px,#ff006b 414px,#ff0064 432px,#ff005d 450px,#ff0057 468px,#ff0052 486px,#ff004d 504px,#ff0048 522px,#ff0046 532px)"></i><i style="left:42px;top:236px;width:530px;background:linear-gradient(90deg,#0093ff 0px,#008cff 18px,#0085ff 36px,#007eff 54px,#0077ff 72px,#0070ff 90px,#0068ff 108px,#0063ff 119.6px,#0b60ff 126px,#2a58ff 144px,#4a50ff 162px,#6a48ff 180px,#8b40ff 198px,#ad37ff 216px,#d02eff 234px,#f325ff 252px,#ff22ff 258.1px,#ff1ae9 270px,#ff0fce 288px,#ff06b8 306px,#ff00a7 322.4px,#ff0096 342px,#ff0089 360px,#ff007e 378px,#ff0075 396px,#ff006c 414px,#ff0065 432px,#ff005e 450px,#ff0058 468px,#ff0053 486px,#ff004e 504px,#ff0049 522px,#ff0047 530px)"></i><i style="left:43px;top:238px;width:527px;background:linear-gradient(90deg,#0091ff 0px,#008aff 18px,#0083ff 36px,#007cff 54px,#0075ff 72px,#006dff 90px,#0066ff 108px,#0061ff 118.9px,#0c5eff 126px,#2b56ff 144px,#4a4eff 162px,#6a46ff 180px,#8b3eff 198px,#ad35ff 216px,#cf2cff 234px,#f223ff 252px,#ff20ff 258.7px,#ff18ea 270px,#ff0ecf 288px,#ff05b9 306px,#ff00ab 319.7px,#ff0098 342px,#ff008b 360px,#ff007f 378px,#ff0076 396px,#ff006d 414px,#ff0066 432px,#ff005f 450px,#ff0059 468px,#ff0053 486px,#ff004e 504px,#ff004a 522px,#ff0049 527px)"></i><i style="left:43px;top:240px;width:525px;background:linear-gradient(90deg,#008fff 0px,#0088ff 18px,#0081ff 36px,#007aff 54px,#0073ff 72px,#006bff 90px,#0064ff 108px,#005fff 119.1px,#0b5cff 126px,#2a55ff 144px,#494dff 162px,#6945ff 180px,#893cff 198px,#aa34ff 216px,#cc2bff 234px,#ef22ff 252px,#ff1eff 260.4px,#ff17ed 270px,#ff0dd2 288px,#ff05bb 306px,#ff00af 318.1px,#ff00a9 324px,#ff009a 342px,#ff008c 360px,#ff0081 378px,#ff0077 396px,#ff006f 414px,#ff0067 432px,#ff0060 450px,#ff005a 468px,#ff0055 486px,#ff0050 504px,#ff004a 525px)"></i><i style="left:44px;top:242px;width:523px;background:linear-gradient(90deg,#008cff 0px,#0086ff 18px,#007fff 36px,#0078ff 54px,#0071ff 72px,#0069ff 90px,#0062ff 108px,#005dff 118.4px,#0d5aff 126px,#2b53ff 144px,#4a4bff 162px,#6943ff 180px,#893aff 198px,#aa32ff 216px,#cb29ff 234px,#ee21ff 252px,#ff1cff 261.1px,#ff16ef 270px,#ff0cd3 288px,#ff04bd 306px,#ff00b2 315.5px,#ff00aa 324px,#ff009b 342px,#ff008d 360px,#ff0082 378px,#ff0078 396px,#ff0070 414px,#ff0068 432px,#ff0061 450px,#ff005b 468px,#ff0055 486px,#ff0050 504px,#ff004c 523px)"></i><i style="left:45px;top:244px;width:520px;background:linear-gradient(90deg,#008aff 0px,#0083ff 18px,#007cff 36px,#0075ff 54px,#006eff 72px,#0067ff 90px,#0060ff 108px,#005cff 117.6px,#0e58ff 126px,#2c51ff 144px,#4a49ff 162px,#6941ff 180px,#8938ff 198px,#a930ff 216px,#cb28ff 234px,#ec1fff 252px,#ff1aff 261.7px,#ff15f0 270px,#ff0bd4 288px,#ff03be 306px,#ff00b6 312.9px,#ff00ab 324px,#ff009c 342px,#ff008f 360px,#ff0083 378px,#ff0079 396px,#ff0071 414px,#ff0069 432px,#ff0062 450px,#ff005c 468px,#ff0056 486px,#ff0051 504px,#ff004d 520px)"></i><i style="left:46px;top:246px;width:518px;background:linear-gradient(90deg,#0088ff 0px,#0081ff 18px,#007aff 36px,#0073ff 54px,#006cff 72px,#0065ff 90px,#005eff 108px,#005aff 116.9px,#0f56ff 126px,#2c4fff 144px,#4b47ff 162px,#693fff 180px,#8937ff 198px,#a92eff 216px,#ca26ff 234px,#eb1dff 252px,#ff18ff 262.4px,#ff13f1 270px,#ff0ad5 288px,#ff00ba 310.3px,#ff00ac 324px,#ff009d 342px,#ff0090 360px,#ff0084 378px,#ff007a 396px,#ff0072 414px,#ff006a 432px,#ff0063 450px,#ff005d 468px,#ff0057 486px,#ff0052 504px,#ff004e 518px)"></i><i style="left:46px;top:248px;width:516px;background:linear-gradient(90deg,#0086ff 0px,#007fff 18px,#0078ff 36px,#0071ff 54px,#006aff 72px,#0063ff 90px,#005cff 108px,#0058ff 117.2px,#0e55ff 126px,#2b4dff 144px,#4945ff 162px,#683dff 180px,#8735ff 198px,#a72dff 216px,#c725ff 234px,#e81cff 252px,#ff16ff 264px,#ff13f4 270px,#ff09d8 288px,#ff00be 308.6px,#ff00af 324px,#ff009f 342px,#ff0091 360px,#ff0086 378px,#ff007c 396px,#ff0073 414px,#ff006b 432px,#ff0064 450px,#ff005e 468px,#ff0058 486px,#ff0053 504px,#ff0050 516px)"></i><i style="left:47px;top:250px;width:513px;background:linear-gradient(90deg,#0083ff 0px,#007dff 18px,#0076ff 36px,#006fff 54px,#0068ff 72px,#0061ff 90px,#005aff 108px,#0057ff 116.5px,#0f53ff 126px,#2c4bff 144px,#4a43ff 162px,#683cff 180px,#8734ff 198px,#a62bff 216px,#c723ff 234px,#e71bff 252px,#ff15ff 264.7px,#ff11f5 270px,#ff08d9 288px,#ff00c3 306px,#ff00b0 324px,#ff00a0 342px,#ff0093 360px,#ff0087 378px,#ff007d 396px,#ff0074 414px,#ff006c 432px,#ff0065 450px,#ff005f 468px,#ff0059 486px,#ff0054 504px,#ff0051 513px)"></i><i style="left:48px;top:252px;width:511px;background:linear-gradient(90deg,#0081ff 0px,#007bff 18px,#0074ff 36px,#006dff 54px,#0066ff 72px,#005fff 90px,#0058ff 108px,#0055ff 115.7px,#1051ff 126px,#2d49ff 144px,#4a42ff 162px,#683aff 180px,#8732ff 198px,#a62aff 216px,#c622ff 234px,#e619ff 252px,#ff13ff 265.4px,#ff07db 288px,#ff00c7 303.4px,#ff00b1 324px,#ff00a1 342px,#ff0094 360px,#ff0088 378px,#ff007e 396px,#ff0075 414px,#ff006d 432px,#ff0066 450px,#ff0060 468px,#ff005a 486px,#ff0055 504px,#ff0053 511px)"></i><i style="left:49px;top:254px;width:508px;background:linear-gradient(90deg,#007fff 0px,#0079ff 18px,#0072ff 36px,#006bff 54px,#0064ff 72px,#005dff 90px,#0056ff 108px,#0053ff 115px,#114fff 126px,#2e47ff 144px,#4b40ff 162px,#6938ff 180px,#8730ff 198px,#a628ff 216px,#c520ff 234px,#e518ff 252px,#ff11ff 266px,#ff05dc 288px,#ff00cb 300.8px,#ff00c5 306px,#ff00b2 324px,#ff00a2 342px,#ff0095 360px,#ff0089 378px,#ff007f 396px,#ff0076 414px,#ff006e 432px,#ff0067 450px,#ff0060 468px,#ff005b 486px,#ff0054 508px)"></i><i style="left:50px;top:256px;width:506px;background:linear-gradient(90deg,#007dff 0px,#0076ff 18px,#0070ff 36px,#0069ff 54px,#0062ff 72px,#005bff 90px,#0054ff 108px,#0052ff 114.3px,#124dff 126px,#2f46ff 144px,#4b3eff 162px,#6936ff 180px,#872fff 198px,#a527ff 216px,#c51eff 234px,#e516ff 252px,#ff0fff 266.7px,#ff04dd 288px,#ff00cf 298.2px,#ff00c6 306px,#ff00b3 324px,#ff00a3 342px,#ff0096 360px,#ff008a 378px,#ff0080 396px,#ff0077 414px,#ff006f 432px,#ff0068 450px,#ff0061 468px,#ff005b 486px,#ff0056 506px)"></i><i style="left:50px;top:258px;width:504px;background:linear-gradient(90deg,#007bff 0px,#0075ff 18px,#006eff 36px,#0067ff 54px,#0061ff 72px,#005aff 90px,#0053ff 108px,#0050ff 114.5px,#124bff 126px,#2e44ff 144px,#4a3dff 162px,#6735ff 180px,#852dff 198px,#a325ff 216px,#c21dff 234px,#e215ff 252px,#ff0eff 268.3px,#ff04e0 288px,#ff00d4 296.6px,#ff00c8 306px,#ff00b5 324px,#ff00a5 342px,#ff0097 360px,#ff008c 378px,#ff0081 396px,#ff0078 414px,#ff0070 432px,#ff0069 450px,#ff0062 468px,#ff005d 486px,#ff0057 504px)"></i><i style="left:51px;top:260px;width:501px;background:linear-gradient(90deg,#0079ff 0px,#0073ff 18px,#006cff 36px,#0065ff 54px,#005fff 72px,#0058ff 90px,#0051ff 108px,#004fff 113.8px,#134aff 126px,#2e42ff 144px,#4b3bff 162px,#6833ff 180px,#852cff 198px,#a324ff 216px,#c21cff 234px,#e114ff 252px,#ff0cff 269px,#ff03e1 288px,#ff00d9 293.9px,#ff00ca 306px,#ff00b6 324px,#ff00a6 342px,#ff0099 360px,#ff008d 378px,#ff0082 396px,#ff0079 414px,#ff0071 432px,#ff006a 450px,#ff0063 468px,#ff005d 486px,#ff0059 501px)"></i><i style="left:52px;top:262px;width:499px;background:linear-gradient(90deg,#0077ff 0px,#0071ff 18px,#006aff 36px,#0064ff 54px,#005dff 72px,#0056ff 90px,#004fff 108px,#004dff 113.1px,#1448ff 126px,#2f41ff 144px,#4b39ff 162px,#6832ff 180px,#852aff 198px,#a322ff 216px,#c11aff 234px,#e012ff 252px,#ff0aff 269.6px,#ff00dd 291.3px,#ff00cb 306px,#ff00b8 324px,#ff00a7 342px,#ff009a 360px,#ff008e 378px,#ff0083 396px,#ff007a 414px,#ff0072 432px,#ff006b 450px,#ff0064 468px,#ff005e 486px,#ff005a 499px)"></i><i style="left:53px;top:264px;width:496px;background:linear-gradient(90deg,#0075ff 0px,#006fff 18px,#0068ff 36px,#0062ff 54px,#005bff 72px,#0054ff 90px,#004cff 112.3px,#1446ff 126px,#303fff 144px,#4c38ff 162px,#6830ff 180px,#8529ff 198px,#a221ff 216px,#c119ff 234px,#df11ff 252px,#ff09ff 270.3px,#ff00e2 288.7px,#ff00cc 306px,#ff00b9 324px,#ff00a8 342px,#ff009b 360px,#ff008f 378px,#ff0084 396px,#ff007b 414px,#ff0073 432px,#ff006b 450px,#ff0065 468px,#ff005f 486px,#ff005c 496px)"></i><i style="left:54px;top:266px;width:494px;background:linear-gradient(90deg,#0073ff 0px,#006dff 18px,#0066ff 36px,#0060ff 54px,#0059ff 72px,#0052ff 90px,#004aff 111.6px,#1544ff 126px,#303dff 144px,#4c36ff 162px,#682fff 180px,#8527ff 198px,#a21fff 216px,#c018ff 234px,#de10ff 252px,#ff07ff 271px,#ff00e7 286.1px,#ff00cd 306px,#ff00ba 324px,#ff00aa 342px,#ff009c 360px,#ff0090 378px,#ff0085 396px,#ff007c 414px,#ff0074 432px,#ff006c 450px,#ff0066 468px,#ff0060 486px,#ff005d 494px)"></i><i style="left:55px;top:268px;width:491px;background:linear-gradient(90deg,#0071ff 0px,#006bff 18px,#0064ff 36px,#005eff 54px,#0057ff 72px,#0051ff 90px,#0049ff 110.9px,#1643ff 126px,#313cff 144px,#4d34ff 162px,#682dff 180px,#8526ff 198px,#a21eff 216px,#bf16ff 234px,#de0eff 252px,#ff05ff 271.6px,#ff00ec 283.5px,#ff00ce 306px,#ff00bb 324px,#ff00ab 342px,#ff009d 360px,#ff0091 378px,#ff0086 396px,#ff007d 414px,#ff0075 432px,#ff006d 450px,#ff0067 468px,#ff0061 486px,#ff005f 491px)"></i><i style="left:55px;top:270px;width:489px;background:linear-gradient(90deg,#006fff 0px,#0069ff 18px,#0063ff 36px,#005cff 54px,#0056ff 72px,#004fff 90px,#0047ff 111.1px,#1642ff 126px,#303aff 144px,#4b33ff 162px,#672cff 180px,#8325ff 198px,#a01dff 216px,#bd15ff 234px,#db0dff 252px,#ff04ff 273.3px,#ff00f1 281.8px,#ff00e8 288px,#ff00d0 306px,#ff00bd 324px,#ff00ac 342px,#ff009e 360px,#ff0092 378px,#ff0088 396px,#ff007e 414px,#ff0076 432px,#ff006e 450px,#ff0068 468px,#ff0061 489px)"></i><i style="left:56px;top:272px;width:487px;background:linear-gradient(90deg,#006eff 0px,#0067ff 18px,#0061ff 36px,#005bff 54px,#0054ff 72px,#004eff 90px,#0046ff 110.4px,#1740ff 126px,#3139ff 144px,#4c32ff 162px,#672bff 180px,#8323ff 198px,#a01cff 216px,#bd14ff 234px,#da0cff 252px,#ff02ff 273.9px,#ff00f6 279.2px,#ff00e9 288px,#ff00d2 306px,#ff00be 324px,#ff00ae 342px,#ff009f 360px,#ff0093 378px,#ff0089 396px,#ff007f 414px,#ff0077 432px,#ff006f 450px,#ff0069 468px,#ff0062 487px)"></i><i style="left:57px;top:274px;width:484px;background:linear-gradient(90deg,#006cff 0px,#0066ff 18px,#005fff 36px,#0059ff 54px,#0052ff 72px,#004cff 90px,#0044ff 109.7px,#173eff 126px,#3237ff 144px,#4c30ff 162px,#6829ff 180px,#8322ff 198px,#9f1aff 216px,#bc13ff 234px,#d90bff 252px,#ff01ff 274.6px,#ff00fc 276.6px,#ff00ea 288px,#ff00d3 306px,#ff00bf 324px,#ff00af 342px,#ff00a0 360px,#ff0094 378px,#ff0089 396px,#ff0080 414px,#ff0078 432px,#ff0070 450px,#ff0069 468px,#ff0064 484px)"></i><i style="left:58px;top:276px;width:482px;background:linear-gradient(90deg,#006aff 0px,#0064ff 18px,#005eff 36px,#0057ff 54px,#0051ff 72px,#004aff 90px,#0043ff 108.9px,#183dff 126px,#3236ff 144px,#4d2fff 162px,#6828ff 180px,#8320ff 198px,#9f19ff 216px,#bc11ff 234px,#d90aff 252px,#fd00ff 274px,#ff00ff 275.3px,#ff00eb 288px,#ff00d4 306px,#ff00c0 324px,#ff00b0 342px,#ff00a1 360px,#ff0095 378px,#ff008a 396px,#ff0081 414px,#ff0079 432px,#ff0071 450px,#ff006a 468px,#ff0065 482px)"></i><i style="left:59px;top:278px;width:479px;background:linear-gradient(90deg,#0068ff 0px,#0062ff 18px,#005cff 36px,#0055ff 54px,#004fff 72px,#0049ff 90px,#0042ff 108.2px,#193bff 126px,#3334ff 144px,#4d2dff 162px,#6826ff 180px,#831fff 198px,#9f18ff 216px,#bb10ff 234px,#d808ff 252px,#f800ff 271.4px,#ff00ff 275.9px,#ff00ec 288px,#ff00d5 306px,#ff00c1 324px,#ff00b1 342px,#ff00a2 360px,#ff0096 378px,#ff008b 396px,#ff0082 414px,#ff0079 432px,#ff0072 450px,#ff006b 468px,#ff0067 479px)"></i><i style="left:60px;top:280px;width:476px;background:linear-gradient(90deg,#0066ff 0px,#0060ff 18px,#005aff 36px,#0054ff 54px,#004dff 72px,#0047ff 90px,#0041ff 107.5px,#1a3aff 126px,#3433ff 144px,#4e2cff 162px,#6825ff 180px,#831eff 198px,#9f16ff 216px,#bb0fff 234px,#d707ff 252px,#f200ff 268.7px,#ff00ff 276.6px,#ff00ed 288px,#ff00d6 306px,#ff00c2 324px,#ff00b2 342px,#ff00a3 360px,#ff0097 378px,#ff008c 396px,#ff0083 414px,#ff007a 432px,#ff0073 450px,#ff006c 468px,#ff0069 476px)"></i><i style="left:61px;top:282px;width:474px;background:linear-gradient(90deg,#0065ff 0px,#005fff 18px,#0058ff 36px,#0052ff 54px,#004cff 72px,#0045ff 90px,#003fff 106.7px,#1b38ff 126px,#3431ff 144px,#4e2aff 162px,#6823ff 180px,#831cff 198px,#9e15ff 216px,#ba0eff 234px,#d606ff 252px,#ed00ff 266.1px,#ff00ff 277.2px,#ff00ef 288px,#ff00d7 306px,#ff00c3 324px,#ff00b3 342px,#ff00a4 360px,#ff0098 378px,#ff008d 396px,#ff0084 414px,#ff007b 432px,#ff0073 450px,#ff006d 468px,#ff006a 474px)"></i><i style="left:62px;top:284px;width:471px;background:linear-gradient(90deg,#0063ff 0px,#005dff 18px,#0057ff 36px,#0051ff 54px,#004aff 72px,#0044ff 90px,#003eff 106px,#1c37ff 126px,#3530ff 144px,#4e29ff 162px,#6922ff 180px,#831bff 198px,#9e14ff 216px,#ba0cff 234px,#d605ff 252px,#e800ff 263.5px,#f200ff 270px,#ff00ff 277.9px,#ff00f0 288px,#ff00d8 306px,#ff00c4 324px,#ff00b4 342px,#ff00a5 360px,#ff0099 378px,#ff008e 396px,#ff0085 414px,#ff007c 432px,#ff0074 450px,#ff006c 471px)"></i><i style="left:62px;top:286px;width:469px;background:linear-gradient(90deg,#0061ff 0px,#005cff 18px,#0055ff 36px,#004fff 54px,#0049ff 72px,#0043ff 90px,#003dff 106.3px,#1b36ff 126px,#342fff 144px,#4d28ff 162px,#6721ff 180px,#821aff 198px,#9c13ff 216px,#b80cff 234px,#d404ff 252px,#e300ff 261.9px,#f000ff 270px,#ff00ff 279.6px,#ff00f2 288px,#ff00da 306px,#ff00c6 324px,#ff00b6 342px,#ff00a7 360px,#ff009b 378px,#ff0090 396px,#ff0086 414px,#ff007d 432px,#ff0076 450px,#ff006e 469px)"></i><i style="left:63px;top:288px;width:467px;background:linear-gradient(90deg,#0060ff 0px,#005aff 18px,#0054ff 36px,#004eff 54px,#0047ff 72px,#0041ff 90px,#003cff 105.5px,#1c34ff 126px,#352dff 144px,#4e27ff 162px,#6820ff 180px,#8219ff 198px,#9c12ff 216px,#b70aff 234px,#d303ff 252px,#de00ff 259.3px,#ef00ff 270px,#ff00ff 280.2px,#ff00f3 288px,#ff00db 306px,#ff00c7 324px,#ff00b7 342px,#ff00a8 360px,#ff009c 378px,#ff0091 396px,#ff0087 414px,#ff007e 432px,#ff0076 450px,#ff0070 467px)"></i><i style="left:64px;top:290px;width:464px;background:linear-gradient(90deg,#005eff 0px,#0058ff 18px,#0052ff 36px,#004cff 54px,#0046ff 72px,#0040ff 90px,#003aff 104.8px,#1d33ff 126px,#352cff 144px,#4e25ff 162px,#681fff 180px,#8218ff 198px,#9c10ff 216px,#b709ff 234px,#d900ff 256.6px,#ee00ff 270px,#ff00ff 280.9px,#ff00f4 288px,#ff00dc 306px,#ff00c8 324px,#ff00b8 342px,#ff00a9 360px,#ff009c 378px,#ff0091 396px,#ff0088 414px,#ff007f 432px,#ff0077 450px,#ff0072 464px)"></i><i style="left:65px;top:292px;width:462px;background:linear-gradient(90deg,#005dff 0px,#0057ff 18px,#0051ff 36px,#004bff 54px,#0044ff 72px,#003eff 90px,#0039ff 104.1px,#1d31ff 126px,#362bff 144px,#4f24ff 162px,#681dff 180px,#8216ff 198px,#9c0fff 216px,#b608ff 234px,#d500ff 254px,#ed00ff 270px,#ff00ff 281.5px,#ff00f5 288px,#ff00dd 306px,#ff00c9 324px,#ff00b9 342px,#ff00aa 360px,#ff009d 378px,#ff0092 396px,#ff0089 414px,#ff0080 432px,#ff0078 450px,#ff0073 462px)"></i><i style="left:66px;top:294px;width:459px;background:linear-gradient(90deg,#005bff 0px,#0055ff 18px,#004fff 36px,#0049ff 54px,#0043ff 72px,#003dff 90px,#0038ff 103.3px,#1e30ff 126px,#3629ff 144px,#4f23ff 162px,#681cff 180px,#8215ff 198px,#9c0eff 216px,#b607ff 234px,#d000ff 251.4px,#ec00ff 270px,#ff00ff 282.2px,#ff00f6 288px,#ff00de 306px,#ff00ca 324px,#ff00ba 342px,#ff00ab 360px,#ff009e 378px,#ff0093 396px,#ff0089 414px,#ff0081 432px,#ff0079 450px,#ff0075 459px)"></i><i style="left:67px;top:296px;width:456px;background:linear-gradient(90deg,#0059ff 0px,#0054ff 18px,#004eff 36px,#0048ff 54px,#0041ff 72px,#003bff 90px,#0037ff 102.6px,#0735ff 108px,#1f2fff 126px,#3728ff 144px,#4f21ff 162px,#681bff 180px,#8214ff 198px,#9b0dff 216px,#b606ff 234px,#cb00ff 248.8px,#eb00ff 270px,#ff00ff 282.9px,#ff00f7 288px,#ff00df 306px,#ff00cb 324px,#ff00bb 342px,#ff00ac 360px,#ff009f 378px,#ff0094 396px,#ff008a 414px,#ff0081 432px,#ff007a 450px,#ff0077 456px)"></i><i style="left:68px;top:298px;width:454px;background:linear-gradient(90deg,#0058ff 0px,#0052ff 18px,#004cff 36px,#0046ff 54px,#0040ff 72px,#003aff 90px,#0036ff 101.9px,#0834ff 108px,#1f2dff 126px,#3727ff 144px,#5020ff 162px,#681aff 180px,#8213ff 198px,#9b0cff 216px,#b505ff 234px,#c700ff 246.2px,#d000ff 252px,#eb00ff 270px,#ff00ff 283.5px,#ff00e0 306px,#ff00cc 324px,#ff00bb 342px,#ff00ad 360px,#ff00a0 378px,#ff0095 396px,#ff008b 414px,#ff0082 432px,#ff0079 454px)"></i><i style="left:69px;top:300px;width:451px;background:linear-gradient(90deg,#0056ff 0px,#0050ff 18px,#004bff 36px,#0045ff 54px,#003fff 72px,#0038ff 90px,#0035ff 101.1px,#0932ff 108px,#202cff 126px,#3826ff 144px,#501fff 162px,#6918ff 180px,#8212ff 198px,#9b0bff 216px,#b504ff 234px,#c300ff 243.6px,#cf00ff 252px,#ea00ff 270px,#ff00ff 284.2px,#ff00e1 306px,#ff00cd 324px,#ff00bc 342px,#ff00ae 360px,#ff00a1 378px,#ff0096 396px,#ff008c 414px,#ff0083 432px,#ff007b 451px)"></i><i style="left:70px;top:302px;width:449px;background:linear-gradient(90deg,#0055ff 0px,#004fff 18px,#0049ff 36px,#0043ff 54px,#003dff 72px,#0037ff 90px,#0034ff 100.4px,#0a31ff 108px,#212bff 126px,#3924ff 144px,#501eff 162px,#6917ff 180px,#8210ff 198px,#9b0aff 216px,#b403ff 234px,#be00ff 240.9px,#ce00ff 252px,#e900ff 270px,#ff00ff 284.8px,#ff00e2 306px,#ff00ce 324px,#ff00bd 342px,#ff00af 360px,#ff00a2 378px,#ff0097 396px,#ff008d 414px,#ff0084 432px,#ff007c 449px)"></i><i style="left:71px;top:304px;width:446px;background:linear-gradient(90deg,#0053ff 0px,#004eff 18px,#0048ff 36px,#0042ff 54px,#003cff 72px,#0036ff 90px,#0032ff 99.7px,#0b30ff 108px,#2229ff 126px,#3923ff 144px,#511dff 162px,#6916ff 180px,#820fff 198px,#9b09ff 216px,#ba00ff 238.3px,#ce00ff 252px,#e800ff 270px,#ff00ff 285.5px,#ff00e3 306px,#ff00cf 324px,#ff00be 342px,#ff00b0 360px,#ff00a3 378px,#ff0098 396px,#ff008e 414px,#ff0085 432px,#ff007f 446px)"></i><i style="left:72px;top:306px;width:443px;background:linear-gradient(90deg,#0052ff 0px,#004cff 18px,#0046ff 36px,#0040ff 54px,#003aff 72px,#0034ff 90px,#0031ff 98.9px,#0b2eff 108px,#2228ff 126px,#3a22ff 144px,#511bff 162px,#6915ff 180px,#820eff 198px,#9a07ff 216px,#b600ff 235.7px,#cd00ff 252px,#e700ff 270px,#ff00ff 286.1px,#ff00e4 306px,#ff00d0 324px,#ff00bf 342px,#ff00b1 360px,#ff00a4 378px,#ff0098 396px,#ff008f 414px,#ff0086 432px,#ff0081 443px)"></i><i style="left:73px;top:308px;width:441px;background:linear-gradient(90deg,#0050ff 0px,#004bff 18px,#0045ff 36px,#003fff 54px,#0039ff 72px,#0033ff 90px,#0030ff 98.2px,#0c2dff 108px,#2327ff 126px,#3a21ff 144px,#521aff 162px,#6914ff 180px,#820dff 198px,#9a06ff 216px,#b200ff 233.1px,#cd00ff 252px,#e600ff 270px,#ff00ff 286.8px,#ff00e5 306px,#ff00d1 324px,#ff00c0 342px,#ff00b1 360px,#ff00a5 378px,#ff0099 396px,#ff008f 414px,#ff0086 432px,#ff0082 441px)"></i><i style="left:74px;top:310px;width:438px;background:linear-gradient(90deg,#004fff 0px,#0049ff 18px,#0044ff 36px,#003eff 54px,#0038ff 72px,#0032ff 90px,#002fff 97.5px,#0d2cff 108px,#2426ff 126px,#3b1fff 144px,#5219ff 162px,#6a13ff 180px,#820cff 198px,#9a05ff 216px,#ae00ff 230.5px,#cc00ff 252px,#e600ff 270px,#ff00ff 287.5px,#ff00e6 306px,#ff00d2 324px,#ff00c1 342px,#ff00b2 360px,#ff00a6 378px,#ff009a 396px,#ff0090 414px,#ff0087 432px,#ff0084 438px)"></i><i style="left:74px;top:312px;width:437px;background:linear-gradient(90deg,#004eff 0px,#0048ff 18px,#0042ff 36px,#003dff 54px,#0037ff 72px,#0031ff 90px,#002eff 97.7px,#0d2bff 108px,#2325ff 126px,#3a1fff 144px,#5118ff 162px,#6812ff 180px,#800bff 198px,#9805ff 216px,#aa00ff 228.9px,#b100ff 234px,#ca00ff 252px,#e400ff 270px,#ff00ff 289.1px,#ff00e9 306px,#ff00d4 324px,#ff00c3 342px,#ff00b4 360px,#ff00a7 378px,#ff009c 396px,#ff0092 414px,#ff0089 432px,#ff0086 437px)"></i><i style="left:75px;top:314px;width:434px;background:linear-gradient(90deg,#004cff 0px,#0047ff 18px,#0041ff 36px,#003bff 54px,#0036ff 72px,#0030ff 90px,#002dff 97px,#0d2aff 108px,#2424ff 126px,#3a1dff 144px,#5117ff 162px,#6911ff 180px,#800aff 198px,#9804ff 216px,#a600ff 226.2px,#b100ff 234px,#ca00ff 252px,#e300ff 270px,#ff00ff 289.8px,#ff00e9 306px,#ff00d5 324px,#ff00c4 342px,#ff00b5 360px,#ff00a8 378px,#ff009d 396px,#ff0092 414px,#ff0088 434px)"></i><i style="left:76px;top:316px;width:431px;background:linear-gradient(90deg,#004bff 0px,#0045ff 18px,#0040ff 36px,#003aff 54px,#0034ff 72px,#002eff 90px,#002cff 96.3px,#0e28ff 108px,#2422ff 126px,#3b1cff 144px,#5216ff 162px,#6910ff 180px,#8009ff 198px,#9803ff 216px,#a200ff 223.6px,#b000ff 234px,#c900ff 252px,#e200ff 270px,#ff00ff 290.4px,#ff00ea 306px,#ff00d6 324px,#ff00c5 342px,#ff00b6 360px,#ff00a9 378px,#ff009d 396px,#ff0093 414px,#ff008b 431px)"></i><i style="left:77px;top:318px;width:429px;background:linear-gradient(90deg,#004aff 0px,#0044ff 18px,#003eff 36px,#0039ff 54px,#0033ff 72px,#002dff 90px,#002bff 95.6px,#0f27ff 108px,#2521ff 126px,#3b1bff 144px,#5215ff 162px,#690fff 180px,#8008ff 198px,#9802ff 216px,#9f00ff 221px,#b000ff 234px,#c900ff 252px,#e100ff 270px,#ff00ff 291.1px,#ff00eb 306px,#ff00d7 324px,#ff00c6 342px,#ff00b7 360px,#ff00aa 378px,#ff009e 396px,#ff0094 414px,#ff008c 429px)"></i><i style="left:78px;top:320px;width:426px;background:linear-gradient(90deg,#0048ff 0px,#0043ff 18px,#003dff 36px,#0038ff 54px,#0032ff 72px,#002aff 94.8px,#1026ff 108px,#2620ff 126px,#3c1aff 144px,#5214ff 162px,#690eff 180px,#8007ff 198px,#9b00ff 218.4px,#b000ff 234px,#c800ff 252px,#e100ff 270px,#ff00ff 291.8px,#ff00ec 306px,#ff00d8 324px,#ff00c7 342px,#ff00b8 360px,#ff00ab 378px,#ff009f 396px,#ff0095 414px,#ff008f 426px)"></i><i style="left:79px;top:322px;width:424px;background:linear-gradient(90deg,#0047ff 0px,#0041ff 18px,#003cff 36px,#0036ff 54px,#0031ff 72px,#002aff 94.1px,#1125ff 108px,#261fff 126px,#3c19ff 144px,#5313ff 162px,#690dff 180px,#8006ff 198px,#9700ff 215.8px,#af00ff 234px,#c700ff 252px,#e000ff 270px,#ff00ff 292.4px,#ff00ed 306px,#ff00d9 324px,#ff00c8 342px,#ff00b9 360px,#ff00ab 378px,#ff00a0 396px,#ff0096 414px,#ff0090 424px)"></i><i style="left:80px;top:324px;width:421px;background:linear-gradient(90deg,#0046ff 0px,#0040ff 18px,#003bff 36px,#0035ff 54px,#002fff 72px,#0029ff 93.4px,#1124ff 108px,#271eff 126px,#3d18ff 144px,#5312ff 162px,#690cff 180px,#8005ff 198px,#9400ff 213.1px,#af00ff 234px,#c700ff 252px,#df00ff 270px,#f800ff 288px,#ff00ff 293.1px,#ff00ee 306px,#ff00da 324px,#ff00c8 342px,#ff00b9 360px,#ff00ac 378px,#ff00a1 396px,#ff0096 414px,#ff0093 421px)"></i><i style="left:81px;top:326px;width:418px;background:linear-gradient(90deg,#0044ff 0px,#003fff 18px,#0039ff 36px,#0034ff 54px,#002eff 72px,#0028ff 92.6px,#1223ff 108px,#271dff 126px,#3d17ff 144px,#5311ff 162px,#6a0bff 180px,#8004ff 198px,#9000ff 210.5px,#9700ff 216px,#af00ff 234px,#c600ff 252px,#df00ff 270px,#f700ff 288px,#ff00ff 293.7px,#ff00ef 306px,#ff00db 324px,#ff00c9 342px,#ff00ba 360px,#ff00ad 378px,#ff00a2 396px,#ff0095 418px)"></i><i style="left:82px;top:328px;width:416px;background:linear-gradient(90deg,#0043ff 0px,#003eff 18px,#0038ff 36px,#0033ff 54px,#002dff 72px,#0027ff 91.9px,#1322ff 108px,#281cff 126px,#3e16ff 144px,#5410ff 162px,#6a0aff 180px,#8003ff 198px,#8d00ff 207.9px,#9700ff 216px,#ae00ff 234px,#c600ff 252px,#de00ff 270px,#f600ff 288px,#ff00ff 294.4px,#ff00f0 306px,#ff00dc 324px,#ff00ca 342px,#ff00bb 360px,#ff00ae 378px,#ff00a2 396px,#ff0097 416px)"></i><i style="left:83px;top:330px;width:413px;background:linear-gradient(90deg,#0042ff 0px,#003cff 18px,#0037ff 36px,#0031ff 54px,#002cff 72px,#0026ff 91.1px,#1420ff 108px,#291bff 126px,#3e15ff 144px,#540fff 162px,#6a09ff 180px,#8003ff 198px,#8900ff 205.3px,#9700ff 216px,#ae00ff 234px,#c600ff 252px,#dd00ff 270px,#f500ff 288px,#ff00ff 295.1px,#ff00f1 306px,#ff00dd 324px,#ff00cb 342px,#ff00bc 360px,#ff00af 378px,#ff00a3 396px,#ff0099 413px)"></i><i style="left:84px;top:332px;width:411px;background:linear-gradient(90deg,#0041ff 0px,#003bff 18px,#0036ff 36px,#0030ff 54px,#002bff 72px,#0025ff 90.4px,#141fff 108px,#291aff 126px,#3f14ff 144px,#540eff 162px,#6a08ff 180px,#8600ff 202.7px,#9700ff 216px,#ae00ff 234px,#c500ff 252px,#dd00ff 270px,#f500ff 288px,#ff00ff 295.7px,#ff00f2 306px,#ff00dd 324px,#ff00cc 342px,#ff00bd 360px,#ff00b0 378px,#ff00a4 396px,#ff009b 411px)"></i><i style="left:85px;top:334px;width:408px;background:linear-gradient(90deg,#003fff 0px,#003aff 18px,#0035ff 36px,#002fff 54px,#002aff 72px,#0024ff 89.7px,#151eff 108px,#2a19ff 126px,#3f13ff 144px,#540dff 162px,#6a07ff 180px,#8300ff 200px,#9700ff 216px,#ad00ff 234px,#c500ff 252px,#dc00ff 270px,#f400ff 288px,#ff00ff 296.4px,#ff00f3 306px,#ff00de 324px,#ff00cd 342px,#ff00be 360px,#ff00b1 378px,#ff00a5 396px,#ff009e 408px)"></i><i style="left:86px;top:336px;width:405px;background:linear-gradient(90deg,#003eff 0px,#0039ff 18px,#0033ff 36px,#002eff 54px,#0029ff 72px,#0023ff 89px,#161dff 108px,#2a18ff 126px,#3f12ff 144px,#550cff 162px,#6a06ff 180px,#8000ff 197.4px,#9700ff 216px,#ad00ff 234px,#c400ff 252px,#db00ff 270px,#f300ff 288px,#ff00ff 297px,#ff00f4 306px,#ff00df 324px,#ff00ce 342px,#ff00bf 360px,#ff00b1 378px,#ff00a6 396px,#ff00a0 405px)"></i><i style="left:87px;top:338px;width:403px;background:linear-gradient(90deg,#003dff 0px,#0038ff 18px,#0032ff 36px,#002dff 54px,#0027ff 72px,#0022ff 88.2px,#161cff 108px,#2b17ff 126px,#4011ff 144px,#550bff 162px,#6b05ff 180px,#7c00ff 194.8px,#9600ff 216px,#ad00ff 234px,#c400ff 252px,#db00ff 270px,#f200ff 288px,#ff00ff 297.7px,#ff00f4 306px,#ff00e0 324px,#ff00cf 342px,#ff00bf 360px,#ff00b2 378px,#ff00a6 396px,#ff00a2 403px)"></i><i style="left:88px;top:340px;width:400px;background:linear-gradient(90deg,#003cff 0px,#0036ff 18px,#0031ff 36px,#002cff 54px,#0026ff 72px,#0022ff 87.5px,#171bff 108px,#2b16ff 126px,#4010ff 144px,#550aff 162px,#6b04ff 180px,#7900ff 192.2px,#8000ff 198px,#9600ff 216px,#ad00ff 234px,#c300ff 252px,#da00ff 270px,#f100ff 288px,#ff00ff 298.4px,#ff00f5 306px,#ff00e1 324px,#ff00cf 342px,#ff00c0 360px,#ff00b3 378px,#ff00a5 400px)"></i><i style="left:89px;top:342px;width:398px;background:linear-gradient(90deg,#003bff 0px,#0035ff 18px,#0030ff 36px,#002bff 54px,#0025ff 72px,#0021ff 86.8px,#181aff 108px,#2c15ff 126px,#410fff 144px,#5609ff 162px,#6b03ff 180px,#7600ff 189.6px,#8000ff 198px,#9600ff 216px,#ac00ff 234px,#c300ff 252px,#da00ff 270px,#f100ff 288px,#ff00ff 299px,#ff00f6 306px,#ff00e2 324px,#ff00d0 342px,#ff00c1 360px,#ff00b4 378px,#ff00a7 398px)"></i><i style="left:90px;top:344px;width:395px;background:linear-gradient(90deg,#0039ff 0px,#0034ff 18px,#002fff 36px,#002aff 54px,#0024ff 72px,#0020ff 86px,#1819ff 108px,#2d14ff 126px,#410eff 144px,#5608ff 162px,#6b02ff 180px,#7300ff 186.9px,#8000ff 198px,#9600ff 216px,#ac00ff 234px,#c200ff 252px,#d900ff 270px,#f000ff 288px,#ff00ff 299.7px,#ff00f7 306px,#ff00e3 324px,#ff00d1 342px,#ff00c2 360px,#ff00b5 378px,#ff00a9 395px)"></i><i style="left:91px;top:346px;width:392px;background:linear-gradient(90deg,#0038ff 0px,#0033ff 18px,#002eff 36px,#0029ff 54px,#0023ff 72px,#001fff 85.3px,#1918ff 108px,#2d13ff 126px,#410dff 144px,#5607ff 162px,#7000ff 184.3px,#8000ff 198px,#9600ff 216px,#ac00ff 234px,#c200ff 252px,#d800ff 270px,#ef00ff 288px,#ff00ff 300.3px,#ff00f8 306px,#ff00e4 324px,#ff00d2 342px,#ff00c3 360px,#ff00b5 378px,#ff00ac 392px)"></i><i style="left:92px;top:348px;width:390px;background:linear-gradient(90deg,#0037ff 0px,#0032ff 18px,#002dff 36px,#0027ff 54px,#0022ff 72px,#001eff 84.6px,#061dff 90px,#1a17ff 108px,#2e12ff 126px,#420cff 144px,#5606ff 162px,#6d00ff 181.7px,#8000ff 198px,#9600ff 216px,#ab00ff 234px,#c100ff 252px,#d800ff 270px,#ee00ff 288px,#ff00ff 301px,#ff00f9 306px,#ff00e4 324px,#ff00d3 342px,#ff00c4 360px,#ff00b6 378px,#ff00ae 390px)"></i><i style="left:93px;top:350px;width:387px;background:linear-gradient(90deg,#0036ff 0px,#0031ff 18px,#002cff 36px,#0026ff 54px,#0021ff 72px,#001eff 83.8px,#071cff 90px,#1a16ff 108px,#2e11ff 126px,#420bff 144px,#5705ff 162px,#6a00ff 179.1px,#8000ff 198px,#9600ff 216px,#ab00ff 234px,#c100ff 252px,#d700ff 270px,#ee00ff 288px,#ff00ff 301.6px,#ff00e5 324px,#ff00d4 342px,#ff00c4 360px,#ff00b7 378px,#ff00b1 387px)"></i><i style="left:94px;top:352px;width:385px;background:linear-gradient(90deg,#0035ff 0px,#0030ff 18px,#002bff 36px,#0025ff 54px,#0020ff 72px,#001dff 83.1px,#071bff 90px,#1b15ff 108px,#2f10ff 126px,#430aff 144px,#5705ff 162px,#6700ff 176.5px,#8000ff 198px,#9500ff 216px,#ab00ff 234px,#c100ff 252px,#d700ff 270px,#ed00ff 288px,#ff00ff 302.3px,#ff00e6 324px,#ff00d5 342px,#ff00c5 360px,#ff00b8 378px,#ff00b3 385px)"></i><i style="left:95px;top:354px;width:382px;background:linear-gradient(90deg,#0034ff 0px,#002fff 18px,#002aff 36px,#0024ff 54px,#001fff 72px,#001cff 82.4px,#081aff 90px,#1c14ff 108px,#2f0fff 126px,#4309ff 144px,#5704ff 162px,#6500ff 173.9px,#6c00ff 180px,#8000ff 198px,#9500ff 216px,#ab00ff 234px,#c000ff 252px,#d600ff 270px,#ec00ff 288px,#ff00ff 303px,#ff00e7 324px,#ff00d5 342px,#ff00c6 360px,#ff00b6 382px)"></i><i style="left:96px;top:356px;width:379px;background:linear-gradient(90deg,#0033ff 0px,#002eff 18px,#0029ff 36px,#0023ff 54px,#001eff 72px,#001bff 81.6px,#0919ff 90px,#1c13ff 108px,#300eff 126px,#4308ff 144px,#5703ff 162px,#6200ff 171.2px,#6c00ff 180px,#8000ff 198px,#9500ff 216px,#aa00ff 234px,#c000ff 252px,#d600ff 270px,#ec00ff 288px,#ff00ff 303.6px,#ff00e8 324px,#ff00d6 342px,#ff00c7 360px,#ff00b9 379px)"></i><i style="left:97px;top:358px;width:377px;background:linear-gradient(90deg,#0032ff 0px,#002dff 18px,#0028ff 36px,#0022ff 54px,#001dff 72px,#001bff 80.9px,#0a18ff 90px,#1d13ff 108px,#300dff 126px,#4408ff 144px,#5802ff 162px,#5f00ff 168.6px,#6c00ff 180px,#8000ff 198px,#9500ff 216px,#aa00ff 234px,#bf00ff 252px,#d500ff 270px,#eb00ff 288px,#ff00ff 304.3px,#ff00e9 324px,#ff00d7 342px,#ff00c8 360px,#ff00bb 377px)"></i><i style="left:98px;top:360px;width:374px;background:linear-gradient(90deg,#0031ff 0px,#002cff 18px,#0027ff 36px,#0021ff 54px,#001cff 72px,#001aff 80.2px,#0a17ff 90px,#1d12ff 108px,#310cff 126px,#4407ff 144px,#5c00ff 166px,#6c00ff 180px,#8000ff 198px,#9500ff 216px,#aa00ff 234px,#bf00ff 252px,#d400ff 270px,#ea00ff 288px,#ff00ff 304.9px,#ff00e9 324px,#ff00d8 342px,#ff00c8 360px,#ff00be 374px)"></i><i style="left:99px;top:362px;width:371px;background:linear-gradient(90deg,#0030ff 0px,#002bff 18px,#0026ff 36px,#0020ff 54px,#001bff 72px,#0019ff 79.4px,#0b16ff 90px,#1e11ff 108px,#310bff 126px,#4506ff 144px,#5a00ff 163.4px,#6c00ff 180px,#8000ff 198px,#9500ff 216px,#aa00ff 234px,#bf00ff 252px,#d400ff 270px,#ea00ff 288px,#ff00ff 305.6px,#ff00ea 324px,#ff00d9 342px,#ff00c9 360px,#ff00c1 371px)"></i><i style="left:100px;top:364px;width:369px;background:linear-gradient(90deg,#002fff 0px,#002aff 18px,#0025ff 36px,#001fff 54px,#001aff 72px,#0018ff 78.7px,#0c15ff 90px,#1f10ff 108px,#320bff 126px,#4505ff 144px,#5700ff 160.8px,#6c00ff 180px,#8000ff 198px,#9500ff 216px,#a900ff 234px,#be00ff 252px,#d300ff 270px,#e900ff 288px,#ff00ff 306.3px,#ff00eb 324px,#ff00d9 342px,#ff00ca 360px,#ff00c3 369px)"></i><i style="left:101px;top:366px;width:366px;background:linear-gradient(90deg,#002dff 0px,#0029ff 18px,#0024ff 36px,#001fff 54px,#0019ff 72px,#0018ff 78px,#0c14ff 90px,#1f0fff 108px,#320aff 126px,#4504ff 144px,#5400ff 158.1px,#6c00ff 180px,#8000ff 198px,#9500ff 216px,#a900ff 234px,#be00ff 252px,#d300ff 270px,#e800ff 288px,#ff00ff 306.9px,#ff00ec 324px,#ff00da 342px,#ff00cb 360px,#ff00c6 366px)"></i><i style="left:102px;top:368px;width:364px;background:linear-gradient(90deg,#002cff 0px,#0028ff 18px,#0023ff 36px,#001eff 54px,#0018ff 72px,#0017ff 77.2px,#0d13ff 90px,#200eff 108px,#3309ff 126px,#4603ff 144px,#5200ff 155.5px,#5900ff 162px,#6d00ff 180px,#8000ff 198px,#9400ff 216px,#a900ff 234px,#bd00ff 252px,#d200ff 270px,#e800ff 288px,#ff00ff 307.6px,#ff00ed 324px,#ff00db 342px,#ff00c8 364px)"></i><i style="left:103px;top:370px;width:361px;background:linear-gradient(90deg,#002bff 0px,#0027ff 18px,#0022ff 36px,#001dff 54px,#0016ff 76.5px,#0e12ff 90px,#200dff 108px,#3308ff 126px,#4603ff 144px,#4f00ff 152.9px,#5900ff 162px,#6d00ff 180px,#8000ff 198px,#9400ff 216px,#a900ff 234px,#bd00ff 252px,#d200ff 270px,#e700ff 288px,#ff00ff 308.2px,#ff00ed 324px,#ff00dc 342px,#ff00cc 361px)"></i><i style="left:104px;top:372px;width:358px;background:linear-gradient(90deg,#002bff 0px,#0026ff 18px,#0021ff 36px,#001cff 54px,#0016ff 75.8px,#0e12ff 90px,#210cff 108px,#3307ff 126px,#4602ff 144px,#4d00ff 150.3px,#5900ff 162px,#6d00ff 180px,#8000ff 198px,#9400ff 216px,#a800ff 234px,#bd00ff 252px,#d100ff 270px,#e600ff 288px,#ff00ff 308.9px,#ff00ee 324px,#ff00dd 342px,#ff00cf 358px)"></i><i style="left:105px;top:374px;width:356px;background:linear-gradient(90deg,#002aff 0px,#0025ff 18px,#0020ff 36px,#001bff 54px,#0015ff 75px,#0f11ff 90px,#210cff 108px,#3406ff 126px,#4b00ff 147.7px,#5a00ff 162px,#6d00ff 180px,#8000ff 198px,#9400ff 216px,#a800ff 234px,#bc00ff 252px,#d100ff 270px,#e600ff 288px,#ff00ff 309.6px,#ff00ef 324px,#ff00dd 342px,#ff00d1 356px)"></i><i style="left:106px;top:376px;width:353px;background:linear-gradient(90deg,#0029ff 0px,#0024ff 18px,#001fff 36px,#001aff 54px,#0014ff 74.3px,#1010ff 90px,#220bff 108px,#3406ff 126px,#4800ff 145.1px,#5a00ff 162px,#6d00ff 180px,#8000ff 198px,#9400ff 216px,#a800ff 234px,#bc00ff 252px,#d000ff 270px,#e500ff 288px,#ff00ff 310.2px,#ff00f0 324px,#ff00de 342px,#ff00d4 353px)"></i><i style="left:107px;top:378px;width:351px;background:linear-gradient(90deg,#0028ff 0px,#0023ff 18px,#001eff 36px,#0019ff 54px,#0014ff 73.6px,#100fff 90px,#220aff 108px,#3505ff 126px,#4600ff 142.4px,#5a00ff 162px,#6d00ff 180px,#8000ff 198px,#9400ff 216px,#a800ff 234px,#bc00ff 252px,#d000ff 270px,#e400ff 288px,#ff00ff 310.9px,#ff00f0 324px,#ff00df 342px,#ff00d7 351px)"></i><i style="left:108px;top:380px;width:348px;background:linear-gradient(90deg,#0027ff 0px,#0022ff 18px,#001dff 36px,#0018ff 54px,#0013ff 72.8px,#110eff 90px,#2309ff 108px,#3504ff 126px,#4300ff 139.8px,#5a00ff 162px,#6d00ff 180px,#8000ff 198px,#9400ff 216px,#a700ff 234px,#bb00ff 252px,#cf00ff 270px,#e400ff 288px,#f900ff 306px,#ff00ff 311.5px,#ff00f1 324px,#ff00e0 342px,#ff00da 348px)"></i><i style="left:109px;top:382px;width:345px;background:linear-gradient(90deg,#0026ff 0px,#0021ff 18px,#001cff 36px,#0017ff 54px,#0012ff 72.1px,#120dff 90px,#2308ff 108px,#3603ff 126px,#4100ff 137.2px,#4800ff 144px,#5b00ff 162px,#6d00ff 180px,#8000ff 198px,#9400ff 216px,#a700ff 234px,#bb00ff 252px,#cf00ff 270px,#e300ff 288px,#f800ff 306px,#ff00ff 312.2px,#ff00f2 324px,#ff00de 345px)"></i><i style="left:110px;top:384px;width:343px;background:linear-gradient(90deg,#0025ff 0px,#0020ff 18px,#001bff 36px,#0016ff 54px,#0012ff 71.4px,#120dff 90px,#2408ff 108px,#3602ff 126px,#3f00ff 134.6px,#4800ff 144px,#5b00ff 162px,#6d00ff 180px,#8000ff 198px,#9400ff 216px,#a700ff 234px,#bb00ff 252px,#cf00ff 270px,#e300ff 288px,#f700ff 306px,#ff00ff 312.9px,#ff00f3 324px,#ff00e0 343px)"></i><i style="left:111px;top:386px;width:340px;background:linear-gradient(90deg,#0024ff 0px,#001fff 18px,#001aff 36px,#0016ff 54px,#0011ff 70.6px,#130cff 90px,#2507ff 108px,#3602ff 126px,#3c00ff 132px,#4900ff 144px,#5b00ff 162px,#6e00ff 180px,#8000ff 198px,#9300ff 216px,#a700ff 234px,#ba00ff 252px,#ce00ff 270px,#e200ff 288px,#f600ff 306px,#ff00ff 313.5px,#ff00f4 324px,#ff00e4 340px)"></i><i style="left:112px;top:388px;width:338px;background:linear-gradient(90deg,#0023ff 0px,#001eff 18px,#001aff 36px,#0015ff 54px,#0010ff 69.9px,#130bff 90px,#2506ff 108px,#3a00ff 129.3px,#4900ff 144px,#5b00ff 162px,#6e00ff 180px,#8000ff 198px,#9300ff 216px,#a700ff 234px,#ba00ff 252px,#ce00ff 270px,#e200ff 288px,#f600ff 306px,#ff00ff 314.2px,#ff00f4 324px,#ff00e6 338px)"></i><i style="left:113px;top:390px;width:335px;background:linear-gradient(90deg,#0022ff 0px,#001dff 18px,#0019ff 36px,#0014ff 54px,#0010ff 69.2px,#140aff 90px,#2605ff 108px,#3800ff 126.7px,#4900ff 144px,#5b00ff 162px,#6e00ff 180px,#8000ff 198px,#9300ff 216px,#a600ff 234px,#ba00ff 252px,#cd00ff 270px,#e100ff 288px,#f500ff 306px,#ff00ff 314.8px,#ff00f5 324px,#ff00ea 335px)"></i><i style="left:114px;top:392px;width:332px;background:linear-gradient(90deg,#0021ff 0px,#001dff 18px,#0018ff 36px,#0013ff 54px,#000fff 68.4px,#1509ff 90px,#2604ff 108px,#3600ff 124.1px,#4a00ff 144px,#5c00ff 162px,#6e00ff 180px,#8000ff 198px,#9300ff 216px,#a600ff 234px,#b900ff 252px,#cd00ff 270px,#e000ff 288px,#f400ff 306px,#ff00ff 315.5px,#ff00f6 324px,#ff00ee 332px)"></i><i style="left:115px;top:394px;width:330px;background:linear-gradient(90deg,#0020ff 0px,#001cff 18px,#0017ff 36px,#0012ff 54px,#000fff 67.7px,#1509ff 90px,#2704ff 108px,#3400ff 121.5px,#4a00ff 144px,#5c00ff 162px,#6e00ff 180px,#8000ff 198px,#9300ff 216px,#a600ff 234px,#b900ff 252px,#cc00ff 270px,#e000ff 288px,#f400ff 306px,#ff00ff 316.2px,#ff00f7 324px,#ff00f0 330px)"></i><i style="left:117px;top:396px;width:326px;background:linear-gradient(90deg,#001fff 0px,#001bff 18px,#0016ff 36px,#0011ff 54px,#000eff 66px,#060cff 72px,#1708ff 90px,#2803ff 108px,#3200ff 117.9px,#3900ff 126px,#4b00ff 144px,#5d00ff 162px,#6f00ff 180px,#8100ff 198px,#9400ff 216px,#a700ff 234px,#ba00ff 252px,#cd00ff 270px,#e000ff 288px,#f400ff 306px,#ff00ff 315.8px,#ff00f4 326px)"></i><i style="left:118px;top:398px;width:324px;background:linear-gradient(90deg,#001eff 0px,#001aff 18px,#0015ff 36px,#0010ff 54px,#000dff 65.2px,#060cff 72px,#1707ff 90px,#2802ff 108px,#2f00ff 115.2px,#3a00ff 126px,#4b00ff 144px,#5d00ff 162px,#6f00ff 180px,#8100ff 198px,#9400ff 216px,#a700ff 234px,#b900ff 252px,#cd00ff 270px,#e000ff 288px,#f300ff 306px,#ff00ff 316.5px,#ff00f7 324px)"></i><i style="left:119px;top:400px;width:321px;background:linear-gradient(90deg,#001eff 0px,#0019ff 18px,#0014ff 36px,#0010ff 54px,#000dff 64.5px,#070bff 72px,#1806ff 90px,#2d00ff 112.6px,#3a00ff 126px,#4c00ff 144px,#5d00ff 162px,#6f00ff 180px,#8100ff 198px,#9400ff 216px,#a600ff 234px,#b900ff 252px,#cc00ff 270px,#df00ff 288px,#f300ff 306px,#ff00ff 317.1px,#ff00fb 321px)"></i><i style="left:120px;top:402px;width:318px;background:linear-gradient(90deg,#001dff 0px,#0018ff 18px,#0014ff 36px,#000fff 54px,#000cff 63.8px,#080aff 72px,#1805ff 90px,#2b00ff 110px,#3b00ff 126px,#4c00ff 144px,#5e00ff 162px,#6f00ff 180px,#8100ff 198px,#9400ff 216px,#a600ff 234px,#b900ff 252px,#cc00ff 270px,#df00ff 288px,#f200ff 306px,#ff00ff 317.8px,#ff00ff 318px)"></i><i style="left:121px;top:404px;width:316px;background:linear-gradient(90deg,#001cff 0px,#0017ff 18px,#0013ff 36px,#000eff 54px,#000cff 63.1px,#0809ff 72px,#1905ff 90px,#2900ff 107.4px,#3b00ff 126px,#4c00ff 144px,#5e00ff 162px,#6f00ff 180px,#8100ff 198px,#9400ff 216px,#a600ff 234px,#b800ff 252px,#cb00ff 270px,#de00ff 288px,#f200ff 306px,#fc00ff 316px)"></i><i style="left:122px;top:406px;width:313px;background:linear-gradient(90deg,#001bff 0px,#0017ff 18px,#0012ff 36px,#000dff 54px,#000bff 62.3px,#0909ff 72px,#1a04ff 90px,#2700ff 104.8px,#3b00ff 126px,#4d00ff 144px,#5e00ff 162px,#7000ff 180px,#8100ff 198px,#9300ff 216px,#a600ff 234px,#b800ff 252px,#cb00ff 270px,#de00ff 288px,#f100ff 306px,#f800ff 313px)"></i><i style="left:123px;top:408px;width:311px;background:linear-gradient(90deg,#001aff 0px,#0016ff 18px,#0011ff 36px,#000dff 54px,#000bff 61.6px,#0908ff 72px,#1a03ff 90px,#2500ff 102.1px,#2b00ff 108px,#3c00ff 126px,#4d00ff 144px,#5e00ff 162px,#7000ff 180px,#8100ff 198px,#9300ff 216px,#a500ff 234px,#b800ff 252px,#ca00ff 270px,#dd00ff 288px,#f000ff 306px,#f600ff 311px)"></i><i style="left:124px;top:410px;width:308px;background:linear-gradient(90deg,#0019ff 0px,#0015ff 18px,#0010ff 36px,#000cff 54px,#000aff 60.9px,#0a07ff 72px,#1b03ff 90px,#2300ff 99.5px,#2b00ff 108px,#3c00ff 126px,#4d00ff 144px,#5e00ff 162px,#7000ff 180px,#8100ff 198px,#9300ff 216px,#a500ff 234px,#b800ff 252px,#ca00ff 270px,#dd00ff 288px,#f200ff 308px)"></i><i style="left:125px;top:412px;width:305px;background:linear-gradient(90deg,#0019ff 0px,#0014ff 18px,#0010ff 36px,#000bff 54px,#000aff 60.1px,#0b06ff 72px,#1b02ff 90px,#2100ff 96.9px,#2c00ff 108px,#3c00ff 126px,#4d00ff 144px,#5f00ff 162px,#7000ff 180px,#8100ff 198px,#9300ff 216px,#a500ff 234px,#b700ff 252px,#ca00ff 270px,#dc00ff 288px,#ee00ff 305px)"></i><i style="left:126px;top:414px;width:303px;background:linear-gradient(90deg,#0018ff 0px,#0013ff 18px,#000fff 36px,#000aff 54px,#0009ff 59.4px,#0b06ff 72px,#2000ff 94.3px,#2c00ff 108px,#3d00ff 126px,#4e00ff 144px,#5f00ff 162px,#7000ff 180px,#8100ff 198px,#9300ff 216px,#a500ff 234px,#b700ff 252px,#c900ff 270px,#dc00ff 288px,#eb00ff 303px)"></i><i style="left:128px;top:416px;width:299px;background:linear-gradient(90deg,#0017ff 0px,#0012ff 18px,#000eff 36px,#0008ff 57.7px,#0d05ff 72px,#1e00ff 90.7px,#2d00ff 108px,#3e00ff 126px,#4f00ff 144px,#6000ff 162px,#7100ff 180px,#8200ff 198px,#9400ff 216px,#a600ff 234px,#b800ff 252px,#ca00ff 270px,#dc00ff 288px,#e800ff 299px)"></i><i style="left:129px;top:418px;width:297px;background:linear-gradient(90deg,#0016ff 0px,#0012ff 18px,#000dff 36px,#0008ff 56.9px,#0d04ff 72px,#1c00ff 88.1px,#2e00ff 108px,#3e00ff 126px,#4f00ff 144px,#6000ff 162px,#7100ff 180px,#8200ff 198px,#9400ff 216px,#a600ff 234px,#b700ff 252px,#c900ff 270px,#dc00ff 288px,#e500ff 297px)"></i><i style="left:130px;top:420px;width:294px;background:linear-gradient(90deg,#0015ff 0px,#0011ff 18px,#000cff 36px,#0007ff 56.2px,#0e03ff 72px,#1a00ff 85.4px,#2e00ff 108px,#3f00ff 126px,#4f00ff 144px,#6000ff 162px,#7100ff 180px,#8200ff 198px,#9400ff 216px,#a500ff 234px,#b700ff 252px,#c900ff 270px,#db00ff 288px,#e100ff 294px)"></i><i style="left:131px;top:422px;width:291px;background:linear-gradient(90deg,#0015ff 0px,#0010ff 18px,#000cff 36px,#0007ff 55.5px,#0f03ff 72px,#1800ff 82.8px,#1f00ff 90px,#2f00ff 108px,#3f00ff 126px,#5000ff 144px,#6000ff 162px,#7100ff 180px,#8200ff 198px,#9400ff 216px,#a500ff 234px,#b700ff 252px,#c900ff 270px,#de00ff 291px)"></i><i style="left:132px;top:424px;width:289px;background:linear-gradient(90deg,#0014ff 0px,#000fff 18px,#000bff 36px,#0006ff 54.7px,#0f02ff 72px,#1600ff 80.2px,#1f00ff 90px,#2f00ff 108px,#3f00ff 126px,#5000ff 144px,#6100ff 162px,#7100ff 180px,#8200ff 198px,#9400ff 216px,#a500ff 234px,#b700ff 252px,#c800ff 270px,#db00ff 289px)"></i><i style="left:133px;top:426px;width:286px;background:linear-gradient(90deg,#0013ff 0px,#000fff 18px,#000aff 36px,#0006ff 54px,#1001ff 72px,#1500ff 77.6px,#2000ff 90px,#3000ff 108px,#4000ff 126px,#5000ff 144px,#6100ff 162px,#7100ff 180px,#8200ff 198px,#9300ff 216px,#a500ff 234px,#b600ff 252px,#c800ff 270px,#d800ff 286px)"></i><i style="left:134px;top:428px;width:283px;background:linear-gradient(90deg,#0012ff 0px,#000eff 18px,#000aff 36px,#0005ff 53.3px,#1300ff 75px,#2000ff 90px,#3000ff 108px,#4000ff 126px,#5000ff 144px,#6100ff 162px,#7100ff 180px,#8200ff 198px,#9300ff 216px,#a500ff 234px,#b600ff 252px,#c800ff 270px,#d400ff 283px)"></i><i style="left:136px;top:430px;width:280px;background:linear-gradient(90deg,#0011ff 0px,#000dff 18px,#0009ff 36px,#0005ff 51.5px,#1100ff 71.4px,#2100ff 90px,#3100ff 108px,#4100ff 126px,#5200ff 144px,#6200ff 162px,#7200ff 180px,#8300ff 198px,#9400ff 216px,#a500ff 234px,#b700ff 252px,#c800ff 270px,#d200ff 280px)"></i><i style="left:137px;top:432px;width:277px;background:linear-gradient(90deg,#0011ff 0px,#000cff 18px,#0008ff 36px,#0004ff 50.8px,#0f00ff 68.7px,#2200ff 90px,#3200ff 108px,#4200ff 126px,#5200ff 144px,#6200ff 162px,#7300ff 180px,#8300ff 198px,#9400ff 216px,#a500ff 234px,#b600ff 252px,#c800ff 270px,#cf00ff 277px)"></i><i style="left:138px;top:434px;width:275px;background:linear-gradient(90deg,#0010ff 0px,#000cff 18px,#0007ff 36px,#0004ff 50.1px,#0e00ff 66.1px,#1300ff 72px,#2200ff 90px,#3200ff 108px,#4200ff 126px,#5200ff 144px,#6200ff 162px,#7300ff 180px,#8300ff 198px,#9400ff 216px,#a500ff 234px,#b600ff 252px,#c700ff 270px,#cc00ff 275px)"></i><i style="left:139px;top:436px;width:272px;background:linear-gradient(90deg,#000fff 0px,#000bff 18px,#0007ff 36px,#0003ff 49.3px,#0c00ff 63.5px,#1300ff 72px,#2300ff 90px,#3200ff 108px,#4200ff 126px,#5200ff 144px,#6200ff 162px,#7300ff 180px,#8300ff 198px,#9400ff 216px,#a500ff 234px,#b600ff 252px,#c900ff 272px)"></i><i style="left:140px;top:438px;width:269px;background:linear-gradient(90deg,#000fff 0px,#000aff 18px,#0006ff 36px,#0003ff 48.6px,#0502ff 54px,#0a00ff 60.9px,#1400ff 72px,#2300ff 90px,#3300ff 108px,#4300ff 126px,#5200ff 144px,#6300ff 162px,#7300ff 180px,#8300ff 198px,#9400ff 216px,#a500ff 234px,#b600ff 252px,#c600ff 269px)"></i><i style="left:142px;top:440px;width:266px;background:linear-gradient(90deg,#000eff 0px,#0009ff 18px,#0005ff 36px,#0002ff 46.9px,#0900ff 57.3px,#1500ff 72px,#2500ff 90px,#3400ff 108px,#4400ff 126px,#5400ff 144px,#6400ff 162px,#7400ff 180px,#8400ff 198px,#9500ff 216px,#a500ff 234px,#b600ff 252px,#c400ff 266px)"></i><i style="left:143px;top:442px;width:263px;background:linear-gradient(90deg,#000dff 0px,#0009ff 18px,#0004ff 36px,#0002ff 46.1px,#0700ff 54.6px,#1600ff 72px,#2500ff 90px,#3400ff 108px,#4400ff 126px,#5400ff 144px,#6400ff 162px,#7400ff 180px,#8400ff 198px,#9500ff 216px,#a500ff 234px,#b600ff 252px,#c000ff 263px)"></i><i style="left:144px;top:444px;width:261px;background:linear-gradient(90deg,#000cff 0px,#0008ff 18px,#0004ff 36px,#0002ff 45.4px,#0500ff 52px,#1600ff 72px,#2500ff 90px,#3500ff 108px,#4400ff 126px,#5400ff 144px,#6400ff 162px,#7400ff 180px,#8400ff 198px,#9400ff 216px,#a500ff 234px,#b600ff 252px,#be00ff 261px)"></i><i style="left:145px;top:446px;width:258px;background:linear-gradient(90deg,#000cff 0px,#0007ff 18px,#0003ff 36px,#0001ff 44.7px,#0400ff 49.4px,#1700ff 72px,#2600ff 90px,#3500ff 108px,#4500ff 126px,#5400ff 144px,#6400ff 162px,#7400ff 180px,#8400ff 198px,#9400ff 216px,#a500ff 234px,#b500ff 252px,#bb00ff 258px)"></i><i style="left:146px;top:448px;width:255px;background:linear-gradient(90deg,#000bff 0px,#0007ff 18px,#0003ff 36px,#0001ff 43.9px,#0200ff 46.8px,#0800ff 54px,#1700ff 72px,#2600ff 90px,#3500ff 108px,#4500ff 126px,#5400ff 144px,#6400ff 162px,#7400ff 180px,#8400ff 198px,#9400ff 216px,#a500ff 234px,#b800ff 255px)"></i><i style="left:148px;top:450px;width:252px;background:linear-gradient(90deg,#000aff 0px,#0006ff 18px,#0002ff 36px,#0000ff 42.2px,#0100ff 43.2px,#0a00ff 54px,#1900ff 72px,#2800ff 90px,#3700ff 108px,#4600ff 126px,#5600ff 144px,#6500ff 162px,#7500ff 180px,#8500ff 198px,#9500ff 216px,#a500ff 234px,#b600ff 252px)"></i><i style="left:149px;top:452px;width:249px;background:linear-gradient(90deg,#0009ff 0px,#0005ff 18px,#0000ff 40.5px,#0000ff 41.5px,#0a00ff 54px,#1900ff 72px,#2800ff 90px,#3700ff 108px,#4600ff 126px,#5600ff 144px,#6500ff 162px,#7500ff 180px,#8500ff 198px,#9500ff 216px,#a500ff 234px,#b300ff 249px)"></i><i style="left:150px;top:454px;width:247px;background:linear-gradient(90deg,#0009ff 0px,#0005ff 18px,#0000ff 37.9px,#0000ff 40.7px,#0b00ff 54px,#1900ff 72px,#2800ff 90px,#3700ff 108px,#4700ff 126px,#5600ff 144px,#6500ff 162px,#7500ff 180px,#8500ff 198px,#9500ff 216px,#a500ff 234px,#b100ff 247px)"></i><i style="left:151px;top:456px;width:244px;background:linear-gradient(90deg,#0008ff 0px,#0004ff 18px,#0000ff 35.3px,#0000ff 40px,#0b00ff 54px,#1a00ff 72px,#2900ff 90px,#3800ff 108px,#4700ff 126px,#5600ff 144px,#6600ff 162px,#7500ff 180px,#8500ff 198px,#9500ff 216px,#a500ff 234px,#ae00ff 244px)"></i><i style="left:153px;top:458px;width:240px;background:linear-gradient(90deg,#0007ff 0px,#0003ff 18px,#0000ff 31.7px,#0000ff 38.3px,#0d00ff 54px,#1b00ff 72px,#2a00ff 90px,#3900ff 108px,#4800ff 126px,#5700ff 144px,#6700ff 162px,#7600ff 180px,#8600ff 198px,#9600ff 216px,#a600ff 234px,#ab00ff 240px)"></i><i style="left:154px;top:460px;width:238px;background:linear-gradient(90deg,#0007ff 0px,#0003ff 18px,#0000ff 29.1px,#0000ff 37.5px,#0d00ff 54px,#1c00ff 72px,#2a00ff 90px,#3900ff 108px,#4800ff 126px,#5700ff 144px,#6700ff 162px,#7600ff 180px,#8600ff 198px,#9500ff 216px,#a900ff 238px)"></i><i style="left:155px;top:462px;width:235px;background:linear-gradient(90deg,#0006ff 0px,#0002ff 18px,#0000ff 26.4px,#0000ff 36.8px,#0e00ff 54px,#1c00ff 72px,#2b00ff 90px,#3a00ff 108px,#4800ff 126px,#5800ff 144px,#6700ff 162px,#7600ff 180px,#8600ff 198px,#9500ff 216px,#a600ff 235px)"></i><i style="left:157px;top:464px;width:232px;background:linear-gradient(90deg,#0005ff 0px,#0000ff 22.8px,#0000ff 35.1px,#0f00ff 54px,#1d00ff 72px,#2c00ff 90px,#3b00ff 108px,#4a00ff 126px,#5900ff 144px,#6800ff 162px,#7700ff 180px,#8700ff 198px,#9600ff 216px,#a400ff 232px)"></i><i style="left:158px;top:466px;width:229px;background:linear-gradient(90deg,#0005ff 0px,#0000ff 20.2px,#0000ff 34.4px,#1000ff 54px,#1e00ff 72px,#2c00ff 90px,#3b00ff 108px,#4a00ff 126px,#5900ff 144px,#6800ff 162px,#7700ff 180px,#8600ff 198px,#9600ff 216px,#a100ff 229px)"></i><i style="left:159px;top:468px;width:226px;background:linear-gradient(90deg,#0004ff 0px,#0000ff 17.6px,#0000ff 33.6px,#1000ff 54px,#1e00ff 72px,#2d00ff 90px,#3b00ff 108px,#4a00ff 126px,#5900ff 144px,#6800ff 162px,#7700ff 180px,#8600ff 198px,#9600ff 216px,#9f00ff 226px)"></i><i style="left:160px;top:470px;width:224px;background:linear-gradient(90deg,#0003ff 0px,#0000ff 15px,#0000ff 32.9px,#1100ff 54px,#1f00ff 72px,#2d00ff 90px,#3c00ff 108px,#4a00ff 126px,#5900ff 144px,#6800ff 162px,#7700ff 180px,#8600ff 198px,#9600ff 216px,#9d00ff 224px)"></i><i style="left:162px;top:472px;width:220px;background:linear-gradient(90deg,#0003ff 0px,#0000ff 11.4px,#0000ff 18px,#0000ff 31.1px,#1200ff 54px,#2000ff 72px,#2e00ff 90px,#3d00ff 108px,#4b00ff 126px,#5a00ff 144px,#6900ff 162px,#7800ff 180px,#8700ff 198px,#9a00ff 220px)"></i><i style="left:163px;top:474px;width:218px;background:linear-gradient(90deg,#0002ff 0px,#0000ff 8.7px,#0000ff 18px,#0000ff 30.4px,#0400ff 36px,#1200ff 54px,#2000ff 72px,#2f00ff 90px,#3d00ff 108px,#4c00ff 126px,#5a00ff 144px,#6900ff 162px,#7800ff 180px,#8700ff 198px,#9800ff 218px)"></i><i style="left:164px;top:476px;width:215px;background:linear-gradient(90deg,#0001ff 0px,#0000ff 6.1px,#0000ff 18px,#0000ff 29.7px,#0500ff 36px,#1300ff 54px,#2100ff 72px,#2f00ff 90px,#3d00ff 108px,#4c00ff 126px,#5a00ff 144px,#6900ff 162px,#7800ff 180px,#8700ff 198px,#9600ff 215px)"></i><i style="left:166px;top:478px;width:211px;background:linear-gradient(90deg,#0001ff 0px,#0000ff 2.5px,#0000ff 18px,#0000ff 27.9px,#0600ff 36px,#1400ff 54px,#2200ff 72px,#3000ff 90px,#3e00ff 108px,#4d00ff 126px,#5b00ff 144px,#6a00ff 162px,#7900ff 180px,#8800ff 198px,#9300ff 211px)"></i><i style="left:167px;top:480px;width:209px;background:linear-gradient(90deg,#0000ff 0px,#0000ff 18px,#0000ff 27.2px,#0700ff 36px,#1500ff 54px,#2200ff 72px,#3100ff 90px,#3f00ff 108px,#4d00ff 126px,#5c00ff 144px,#6a00ff 162px,#7900ff 180px,#8800ff 198px,#9100ff 209px)"></i><i style="left:169px;top:482px;width:205px;background:linear-gradient(90deg,#0000ff 0px,#0000ff 18px,#0000ff 25.5px,#0800ff 36px,#1600ff 54px,#2400ff 72px,#3200ff 90px,#4000ff 108px,#4e00ff 126px,#5d00ff 144px,#6b00ff 162px,#7a00ff 180px,#8900ff 198px,#8f00ff 205px)"></i><i style="left:170px;top:484px;width:203px;background:linear-gradient(90deg,#0000ff 0px,#0000ff 18px,#0000ff 24.8px,#0900ff 36px,#1600ff 54px,#2400ff 72px,#3200ff 90px,#4000ff 108px,#4e00ff 126px,#5d00ff 144px,#6b00ff 162px,#7a00ff 180px,#8900ff 198px,#8d00ff 203px)"></i><i style="left:171px;top:486px;width:200px;background:linear-gradient(90deg,#0000ff 0px,#0000ff 18px,#0000ff 24px,#0900ff 36px,#1700ff 54px,#2400ff 72px,#3200ff 90px,#4000ff 108px,#4f00ff 126px,#5d00ff 144px,#6b00ff 162px,#7a00ff 180px,#8a00ff 200px)"></i><i style="left:173px;top:488px;width:196px;background:linear-gradient(90deg,#0000ff 0px,#0000ff 22.3px,#0a00ff 36px,#1800ff 54px,#2600ff 72px,#3300ff 90px,#4100ff 108px,#5000ff 126px,#5e00ff 144px,#6c00ff 162px,#7b00ff 180px,#8800ff 196px)"></i><i style="left:174px;top:490px;width:194px;background:linear-gradient(90deg,#0000ff 0px,#0000ff 21.6px,#0b00ff 36px,#1800ff 54px,#2600ff 72px,#3400ff 90px,#4200ff 108px,#5000ff 126px,#5e00ff 144px,#6c00ff 162px,#7b00ff 180px,#8600ff 194px)"></i><i style="left:176px;top:492px;width:190px;background:linear-gradient(90deg,#0000ff 0px,#0000ff 19.8px,#0c00ff 36px,#1a00ff 54px,#2700ff 72px,#3500ff 90px,#4300ff 108px,#5100ff 126px,#5f00ff 144px,#6d00ff 162px,#7c00ff 180px,#8400ff 190px)"></i><i style="left:177px;top:494px;width:188px;background:linear-gradient(90deg,#0000ff 0px,#0000ff 19.1px,#0d00ff 36px,#1a00ff 54px,#2800ff 72px,#3500ff 90px,#4300ff 108px,#5100ff 126px,#5f00ff 144px,#6d00ff 162px,#7c00ff 180px,#8200ff 188px)"></i><i style="left:179px;top:496px;width:184px;background:linear-gradient(90deg,#0000ff 0px,#0000ff 17.4px,#0e00ff 36px,#1b00ff 54px,#2900ff 72px,#3600ff 90px,#4400ff 108px,#5200ff 126px,#6000ff 144px,#6e00ff 162px,#8000ff 184px)"></i><i style="left:180px;top:498px;width:181px;background:linear-gradient(90deg,#0000ff 0px,#0000ff 16.6px,#0e00ff 36px,#1c00ff 54px,#2900ff 72px,#3700ff 90px,#4400ff 108px,#5200ff 126px,#6000ff 144px,#6e00ff 162px,#7d00ff 181px)"></i><i style="left:181px;top:500px;width:179px;background:linear-gradient(90deg,#0000ff 0px,#0000ff 15.9px,#0f00ff 36px,#1c00ff 54px,#2900ff 72px,#3700ff 90px,#4500ff 108px,#5200ff 126px,#6000ff 144px,#6e00ff 162px,#7c00ff 179px)"></i><i style="left:183px;top:502px;width:175px;background:linear-gradient(90deg,#0000ff 0px,#0000ff 14.2px,#1000ff 36px,#1d00ff 54px,#2b00ff 72px,#3800ff 90px,#4600ff 108px,#5300ff 126px,#6100ff 144px,#6f00ff 162px,#7900ff 175px)"></i><i style="left:184px;top:504px;width:172px;background:linear-gradient(90deg,#0000ff 0px,#0000ff 13.4px,#1000ff 36px,#1e00ff 54px,#2b00ff 72px,#3800ff 90px,#4600ff 108px,#5400ff 126px,#6100ff 144px,#6f00ff 162px,#7700ff 172px)"></i><i style="left:186px;top:506px;width:169px;background:linear-gradient(90deg,#0000ff 0px,#0000ff 11.7px,#0500ff 18px,#1200ff 36px,#1f00ff 54px,#2c00ff 72px,#3900ff 90px,#4700ff 108px,#5500ff 126px,#6200ff 144px,#7000ff 162px,#7600ff 169px)"></i><i style="left:188px;top:508px;width:165px;background:linear-gradient(90deg,#0000ff 0px,#0000ff 10px,#0600ff 18px,#1300ff 36px,#2000ff 54px,#2d00ff 72px,#3a00ff 90px,#4800ff 108px,#5500ff 126px,#6300ff 144px,#7300ff 165px)"></i><i style="left:189px;top:510px;width:163px;background:linear-gradient(90deg,#0000ff 0px,#0000ff 9.2px,#0600ff 18px,#1300ff 36px,#2000ff 54px,#2d00ff 72px,#3b00ff 90px,#4800ff 108px,#5600ff 126px,#6300ff 144px,#7200ff 163px)"></i><i style="left:191px;top:512px;width:159px;background:linear-gradient(90deg,#0000ff 0px,#0000ff 7.5px,#0700ff 18px,#1400ff 36px,#2100ff 54px,#2e00ff 72px,#3c00ff 90px,#4900ff 108px,#5700ff 126px,#6400ff 144px,#7000ff 159px)"></i><i style="left:192px;top:514px;width:156px;background:linear-gradient(90deg,#0000ff 0px,#0000ff 6.8px,#0800ff 18px,#1500ff 36px,#2200ff 54px,#2f00ff 72px,#3c00ff 90px,#4900ff 108px,#5700ff 126px,#6400ff 144px,#6d00ff 156px)"></i><i style="left:194px;top:516px;width:153px;background:linear-gradient(90deg,#0000ff 0px,#0000ff 5px,#0900ff 18px,#1600ff 36px,#2300ff 54px,#3000ff 72px,#3d00ff 90px,#4a00ff 108px,#5800ff 126px,#6500ff 144px,#6c00ff 153px)"></i><i style="left:196px;top:518px;width:149px;background:linear-gradient(90deg,#0000ff 0px,#0000ff 3.3px,#0a00ff 18px,#1700ff 36px,#2400ff 54px,#3100ff 72px,#3e00ff 90px,#4b00ff 108px,#5900ff 126px,#6600ff 144px,#6a00ff 149px)"></i><i style="left:197px;top:520px;width:147px;background:linear-gradient(90deg,#0000ff 0px,#0000ff 2.6px,#0b00ff 18px,#1800ff 36px,#2400ff 54px,#3100ff 72px,#3e00ff 90px,#4b00ff 108px,#5900ff 126px,#6800ff 147px)"></i><i style="left:199px;top:522px;width:143px;background:linear-gradient(90deg,#0000ff 0px,#0000ff 0.8px,#0c00ff 18px,#1900ff 36px,#2500ff 54px,#3200ff 72px,#3f00ff 90px,#4c00ff 108px,#5a00ff 126px,#6600ff 143px)"></i><i style="left:201px;top:524px;width:139px;background:linear-gradient(90deg,#0100ff 0px,#0d00ff 18px,#1a00ff 36px,#2600ff 54px,#3300ff 72px,#4000ff 90px,#4d00ff 108px,#5b00ff 126px,#6400ff 139px)"></i><i style="left:203px;top:526px;width:136px;background:linear-gradient(90deg,#0200ff 0px,#0e00ff 18px,#1b00ff 36px,#2800ff 54px,#3400ff 72px,#4100ff 90px,#4e00ff 108px,#5b00ff 126px,#6300ff 136px)"></i><i style="left:204px;top:528px;width:133px;background:linear-gradient(90deg,#0200ff 0px,#0f00ff 18px,#1b00ff 36px,#2800ff 54px,#3500ff 72px,#4200ff 90px,#4e00ff 108px,#5c00ff 126px,#6100ff 133px)"></i><i style="left:206px;top:530px;width:130px;background:linear-gradient(90deg,#0300ff 0px,#1000ff 18px,#1c00ff 36px,#2900ff 54px,#3600ff 72px,#4200ff 90px,#4f00ff 108px,#5f00ff 130px)"></i><i style="left:208px;top:532px;width:126px;background:linear-gradient(90deg,#0500ff 0px,#1100ff 18px,#1d00ff 36px,#2a00ff 54px,#3700ff 72px,#4300ff 90px,#5000ff 108px,#5d00ff 126px)"></i><i style="left:210px;top:534px;width:122px;background:linear-gradient(90deg,#0600ff 0px,#1200ff 18px,#1f00ff 36px,#2b00ff 54px,#3800ff 72px,#4400ff 90px,#5100ff 108px,#5b00ff 122px)"></i><i style="left:212px;top:536px;width:119px;background:linear-gradient(90deg,#0700ff 0px,#1300ff 18px,#2000ff 36px,#2c00ff 54px,#3900ff 72px,#4500ff 90px,#5200ff 108px,#5a00ff 119px)"></i><i style="left:214px;top:538px;width:115px;background:linear-gradient(90deg,#0800ff 0px,#1400ff 18px,#2100ff 36px,#2d00ff 54px,#3a00ff 72px,#4600ff 90px,#5300ff 108px,#5800ff 115px)"></i><i style="left:215px;top:540px;width:113px;background:linear-gradient(90deg,#0900ff 0px,#1500ff 18px,#2100ff 36px,#2d00ff 54px,#3a00ff 72px,#4700ff 90px,#5300ff 108px,#5700ff 113px)"></i><i style="left:217px;top:542px;width:109px;background:linear-gradient(90deg,#0a00ff 0px,#1600ff 18px,#2200ff 36px,#2e00ff 54px,#3b00ff 72px,#4700ff 90px,#5500ff 109px)"></i><i style="left:219px;top:544px;width:105px;background:linear-gradient(90deg,#0b00ff 0px,#1700ff 18px,#2300ff 36px,#2f00ff 54px,#3c00ff 72px,#4800ff 90px,#5300ff 105px)"></i><i style="left:221px;top:546px;width:102px;background:linear-gradient(90deg,#0c00ff 0px,#1800ff 18px,#2400ff 36px,#3000ff 54px,#3d00ff 72px,#4900ff 90px,#5200ff 102px)"></i><i style="left:223px;top:548px;width:98px;background:linear-gradient(90deg,#0d00ff 0px,#1900ff 18px,#2500ff 36px,#3100ff 54px,#3e00ff 72px,#4a00ff 90px,#5000ff 98px)"></i><i style="left:225px;top:550px;width:95px;background:linear-gradient(90deg,#0e00ff 0px,#1a00ff 18px,#2600ff 36px,#3200ff 54px,#3f00ff 72px,#4b00ff 90px,#4f00ff 95px)"></i><i style="left:227px;top:552px;width:91px;background:linear-gradient(90deg,#0f00ff 0px,#1b00ff 18px,#2700ff 36px,#3300ff 54px,#4000ff 72px,#4d00ff 91px)"></i><i style="left:229px;top:554px;width:87px;background:linear-gradient(90deg,#1000ff 0px,#1c00ff 18px,#2800ff 36px,#3400ff 54px,#4100ff 72px,#4b00ff 87px)"></i><i style="left:231px;top:556px;width:84px;background:linear-gradient(90deg,#1100ff 0px,#1d00ff 18px,#2900ff 36px,#3500ff 54px,#4100ff 72px,#4a00ff 84px)"></i><i style="left:233px;top:558px;width:80px;background:linear-gradient(90deg,#1200ff 0px,#1e00ff 18px,#2a00ff 36px,#3600ff 54px,#4200ff 72px,#4800ff 80px)"></i><i style="left:235px;top:560px;width:77px;background:linear-gradient(90deg,#1400ff 0px,#1f00ff 18px,#2b00ff 36px,#3700ff 54px,#4300ff 72px,#4700ff 77px)"></i><i style="left:237px;top:562px;width:73px;background:linear-gradient(90deg,#1500ff 0px,#2000ff 18px,#2c00ff 36px,#3800ff 54px,#4500ff 73px)"></i><i style="left:239px;top:564px;width:69px;background:linear-gradient(90deg,#1600ff 0px,#2100ff 18px,#2d00ff 36px,#3900ff 54px,#4300ff 69px)"></i><i style="left:241px;top:566px;width:66px;background:linear-gradient(90deg,#1700ff 0px,#2200ff 18px,#2e00ff 36px,#3a00ff 54px,#4200ff 66px)"></i><i style="left:243px;top:568px;width:62px;background:linear-gradient(90deg,#1800ff 0px,#2300ff 18px,#2f00ff 36px,#3b00ff 54px,#4000ff 62px)"></i><i style="left:245px;top:570px;width:59px;background:linear-gradient(90deg,#1900ff 0px,#2400ff 18px,#3000ff 36px,#3c00ff 54px,#3f00ff 59px)"></i><i style="left:247px;top:572px;width:55px;background:linear-gradient(90deg,#1a00ff 0px,#2500ff 18px,#3100ff 36px,#3d00ff 55px)"></i><i style="left:249px;top:574px;width:51px;background:linear-gradient(90deg,#1b00ff 0px,#2600ff 18px,#3200ff 36px,#3c00ff 51px)"></i><i style="left:251px;top:576px;width:48px;background:linear-gradient(90deg,#1c00ff 0px,#2700ff 18px,#3300ff 36px,#3b00ff 48px)"></i><i style="left:253px;top:578px;width:44px;background:linear-gradient(90deg,#1d00ff 0px,#2800ff 18px,#3400ff 36px,#3900ff 44px)"></i><i style="left:255px;top:580px;width:40px;background:linear-gradient(90deg,#1e00ff 0px,#2900ff 18px,#3700ff 40px)"></i><i style="left:257px;top:582px;width:37px;background:linear-gradient(90deg,#1f00ff 0px,#2a00ff 18px,#3600ff 37px)"></i><i style="left:259px;top:584px;width:33px;background:linear-gradient(90deg,#2000ff 0px,#2b00ff 18px,#3500ff 33px)"></i><i style="left:261px;top:586px;width:30px;background:linear-gradient(90deg,#2100ff 0px,#2c00ff 18px,#3400ff 30px)"></i><i style="left:263px;top:588px;width:26px;background:linear-gradient(90deg,#2200ff 0px,#2d00ff 18px,#3200ff 26px)"></i><i style="left:265px;top:590px;width:22px;background:linear-gradient(90deg,#2300ff 0px,#3000ff 22px)"></i><i style="left:267px;top:592px;width:19px;background:linear-gradient(90deg,#2400ff 0px,#2f00ff 19px)"></i><i style="left:269px;top:594px;width:16px;background:linear-gradient(90deg,#2400ff 0px,#2e00ff 16px)"></i><i style="left:274px;top:596px;width:7px;background:linear-gradient(90deg,#2700ff 0px,#2c00ff 7px)"></i></div>
</div>
<svg class="a" style="left:0;top:0" width="657" height="613"><path d="M282.17 593.99 L280.66 595.36 L278.86 596.05 L276.78 596.06 L274.41 595.38 L271.75 594.03 L267.92 590.45 L262.36 585 L255.37 577.77 L251.23 573.61 L246.52 568.9 L241.04 563.47 L234.92 557.37 L230.56 553.02 L225.93 548.38 L220.96 543.22 L216.97 539.01 L212.8 534.54 L208.41 529.72 L203.81 524.46 L200.02 520.03 L196.15 515.47 L192.11 510.58 L187.82 505.16 L183.22 499.05 L180.16 494.85 L176.98 490.43 L173.69 485.78 L170.29 480.9 L166.8 475.79 L163.24 470.46 L159.6 464.89 L155.9 459.1 L152.89 454.29 L149.81 449.33 L146.68 444.21 L143.49 438.94 L140.25 433.53 L136.98 427.99 L133.68 422.3 L130.35 416.48 L127.01 410.53 L123.65 404.46 L120.82 399.28 L117.96 393.97 L115.06 388.53 L112.14 382.99 L109.2 377.36 L106.24 371.64 L103.28 365.86 L100.32 360.03 L97.38 354.16 L94.44 348.27 L91.54 342.36 L88.66 336.46 L86 330.98 L83.33 325.42 L80.64 319.81 L77.96 314.15 L75.27 308.45 L72.6 302.73 L69.95 296.99 L67.34 291.25 L64.75 285.52 L62.22 279.81 L59.74 274.14 L57.32 268.5 L54.98 262.93 L52.5 256.91 L50.07 250.86 L47.68 244.81 L45.35 238.77 L43.06 232.74 L40.83 226.75 L38.65 220.81 L36.53 214.93 L34.47 209.13 L32.47 203.42 L30.53 197.81 L28.66 192.33 L26.49 185.86 L24.41 179.47 L22.41 173.18 L20.49 166.99 L18.66 160.92 L16.92 154.98 L15.26 149.19 L13.69 143.56 L12.2 138.09 L10.8 132.81 L8.97 125.57 L7.33 118.67 L5.87 112.08 L4.58 105.79 L3.44 99.79 L2.44 94.06 L1.56 88.58 L0.58 81.41 L-0.11 74.83 L-0.53 68.76 L-0.71 63.11 L-0.67 57.78 L-0.11 49.73 L1.1 42.74 L2.85 36.62 L6.52 29.01 L11.23 23.19 L16.82 19.08 L23.12 16.33 L29.98 14.68 L37.28 13.8 L44.89 13.31 L52.7 13.17 L60.48 13.2 L68.37 13.41 L76.42 13.79 L84.71 14.34 L93.35 15.04 L102.33 15.88 L108.52 16.52 L114.89 17.22 L121.46 17.97 L128.25 18.77 L135.24 19.63 L142.49 20.54 L150 21.5 L157.77 22.51 L165.81 23.57 L172.02 24.4 L178.37 25.26 L184.89 26.15 L191.59 27.06 L198.47 28 L205.51 28.96 L212.74 29.95 L220.14 30.97 L226.19 31.81 L232.35 32.66 L238.62 33.53 L245 34.42 L251.51 35.33 L258.12 36.25 L264.86 37.19 L271.71 38.14 L278.66 39.11 L285.72 40.1 L291.69 40.93 L297.75 41.78 L303.87 42.63 L310.07 43.5 L316.32 44.37 L322.62 45.25 L328.99 46.13 L335.44 47.03 L341.95 47.93 L348.5 48.84 L355.07 49.75 L361.67 50.67 L368.3 51.59 L375 52.53 L381.73 53.48 L388.45 54.42 L395.14 55.36 L401.77 56.28 L408.33 57.2 L414.86 58.11 L421.35 59.01 L427.81 59.91 L434.24 60.81 L440.64 61.7 L447.05 62.59 L453.47 63.49 L459.85 64.38 L466.17 65.26 L472.39 66.12 L478.48 66.97 L485.63 67.96 L492.64 68.92 L499.5 69.87 L506.21 70.79 L512.76 71.7 L519.14 72.59 L525.38 73.46 L531.45 74.31 L537.35 75.14 L543.05 75.94 L549.91 76.9 L556.49 77.82 L562.79 78.7 L568.84 79.55 L576.47 80.6 L583.63 81.59 L590.42 82.53 L596.83 83.42 L602.86 84.27 L608.62 85.08 L616.82 86.22 L624.41 87.28 L631.39 88.26 L637.75 89.15 L648.54 90.62 L656.91 91.79 L663.44 92.7 L668.31 93.39 L674.11 94.2 L678.21 94.77 L682.05 95.31 L283.4 591.94Z M492.49 78.53 L134.96 37.99 L190.33 452.03Z" fill="#000" fill-opacity=".4" fill-rule="evenodd"/></svg>
</div>
<div class="a" style="left:1248.15px;top:757.5px;width:1.5px;height:8px;background:#c4c4c4"></div>
<span class="t" style="left:1243.76px;top:770.04px;font-size:18.5px;transform:scaleX(0.800);transform-origin:50% 0;color:#d4d4d4;">0</span>
<div class="a" style="left:1243px;top:758.1px;width:7px;height:1.5px;background:#b0b0b0"></div>
<span class="t" style="left:1232.21px;top:750.94px;font-size:18.5px;transform:scaleX(0.800);transform-origin:100% 0;color:#d4d4d4;">0</span>
<div class="a" style="left:1303.04px;top:757.5px;width:1.5px;height:8px;background:#c4c4c4"></div>
<span class="t" style="left:1285.78px;top:770.04px;font-size:18.5px;transform:scaleX(0.800);transform-origin:50% 0;color:#d4d4d4;">0.05</span>
<div class="a" style="left:1243px;top:706.94px;width:7px;height:1.5px;background:#b0b0b0"></div>
<span class="t" style="left:1206.49px;top:699.77px;font-size:18.5px;transform:scaleX(0.800);transform-origin:100% 0;color:#d4d4d4;">0.05</span>
<div class="a" style="left:1357.92px;top:757.5px;width:1.5px;height:8px;background:#c4c4c4"></div>
<span class="t" style="left:1345.81px;top:770.04px;font-size:18.5px;transform:scaleX(0.800);transform-origin:50% 0;color:#d4d4d4;">0.1</span>
<div class="a" style="left:1243px;top:655.77px;width:7px;height:1.5px;background:#b0b0b0"></div>
<span class="t" style="left:1216.78px;top:648.61px;font-size:18.5px;transform:scaleX(0.800);transform-origin:100% 0;color:#d4d4d4;">0.1</span>
<div class="a" style="left:1412.81px;top:757.5px;width:1.5px;height:8px;background:#c4c4c4"></div>
<span class="t" style="left:1395.55px;top:770.04px;font-size:18.5px;transform:scaleX(0.800);transform-origin:50% 0;color:#d4d4d4;">0.15</span>
<div class="a" style="left:1243px;top:604.61px;width:7px;height:1.5px;background:#b0b0b0"></div>
<span class="t" style="left:1206.49px;top:597.44px;font-size:18.5px;transform:scaleX(0.800);transform-origin:100% 0;color:#d4d4d4;">0.15</span>
<div class="a" style="left:1467.69px;top:757.5px;width:1.5px;height:8px;background:#c4c4c4"></div>
<span class="t" style="left:1455.58px;top:770.04px;font-size:18.5px;transform:scaleX(0.800);transform-origin:50% 0;color:#d4d4d4;">0.2</span>
<div class="a" style="left:1243px;top:553.44px;width:7px;height:1.5px;background:#b0b0b0"></div>
<span class="t" style="left:1216.78px;top:546.28px;font-size:18.5px;transform:scaleX(0.800);transform-origin:100% 0;color:#d4d4d4;">0.2</span>
<div class="a" style="left:1522.58px;top:757.5px;width:1.5px;height:8px;background:#c4c4c4"></div>
<span class="t" style="left:1505.32px;top:770.04px;font-size:18.5px;transform:scaleX(0.800);transform-origin:50% 0;color:#d4d4d4;">0.25</span>
<div class="a" style="left:1243px;top:502.28px;width:7px;height:1.5px;background:#b0b0b0"></div>
<span class="t" style="left:1206.49px;top:495.11px;font-size:18.5px;transform:scaleX(0.800);transform-origin:100% 0;color:#d4d4d4;">0.25</span>
<div class="a" style="left:1577.46px;top:757.5px;width:1.5px;height:8px;background:#c4c4c4"></div>
<span class="t" style="left:1565.35px;top:770.04px;font-size:18.5px;transform:scaleX(0.800);transform-origin:50% 0;color:#d4d4d4;">0.3</span>
<div class="a" style="left:1243px;top:451.11px;width:7px;height:1.5px;background:#b0b0b0"></div>
<span class="t" style="left:1216.78px;top:443.95px;font-size:18.5px;transform:scaleX(0.800);transform-origin:100% 0;color:#d4d4d4;">0.3</span>
<div class="a" style="left:1632.35px;top:757.5px;width:1.5px;height:8px;background:#c4c4c4"></div>
<span class="t" style="left:1615.09px;top:770.04px;font-size:18.5px;transform:scaleX(0.800);transform-origin:50% 0;color:#d4d4d4;">0.35</span>
<div class="a" style="left:1243px;top:399.94px;width:7px;height:1.5px;background:#b0b0b0"></div>
<span class="t" style="left:1206.49px;top:392.78px;font-size:18.5px;transform:scaleX(0.800);transform-origin:100% 0;color:#d4d4d4;">0.35</span>
<div class="a" style="left:1687.23px;top:757.5px;width:1.5px;height:8px;background:#c4c4c4"></div>
<span class="t" style="left:1675.12px;top:770.04px;font-size:18.5px;transform:scaleX(0.800);transform-origin:50% 0;color:#d4d4d4;">0.4</span>
<div class="a" style="left:1243px;top:348.78px;width:7px;height:1.5px;background:#b0b0b0"></div>
<span class="t" style="left:1216.78px;top:341.62px;font-size:18.5px;transform:scaleX(0.800);transform-origin:100% 0;color:#d4d4d4;">0.4</span>
<div class="a" style="left:1742.12px;top:757.5px;width:1.5px;height:8px;background:#c4c4c4"></div>
<span class="t" style="left:1724.86px;top:770.04px;font-size:18.5px;transform:scaleX(0.800);transform-origin:50% 0;color:#d4d4d4;">0.45</span>
<div class="a" style="left:1243px;top:297.62px;width:7px;height:1.5px;background:#b0b0b0"></div>
<span class="t" style="left:1206.49px;top:290.45px;font-size:18.5px;transform:scaleX(0.800);transform-origin:100% 0;color:#d4d4d4;">0.45</span>
<div class="a" style="left:1797px;top:757.5px;width:1.5px;height:8px;background:#c4c4c4"></div>
<span class="t" style="left:1784.89px;top:770.04px;font-size:18.5px;transform:scaleX(0.800);transform-origin:50% 0;color:#d4d4d4;">0.5</span>
<div class="a" style="left:1243px;top:246.45px;width:7px;height:1.5px;background:#b0b0b0"></div>
<span class="t" style="left:1216.78px;top:239.29px;font-size:18.5px;transform:scaleX(0.800);transform-origin:100% 0;color:#d4d4d4;">0.5</span>
<div class="a" style="left:1851.89px;top:757.5px;width:1.5px;height:8px;background:#c4c4c4"></div>
<span class="t" style="left:1834.63px;top:770.04px;font-size:18.5px;transform:scaleX(0.800);transform-origin:50% 0;color:#d4d4d4;">0.55</span>
<div class="a" style="left:1243px;top:195.28px;width:7px;height:1.5px;background:#b0b0b0"></div>
<span class="t" style="left:1206.49px;top:188.12px;font-size:18.5px;transform:scaleX(0.800);transform-origin:100% 0;color:#d4d4d4;">0.55</span>
<svg class="a" style="left:1251px;top:145px" width="657" height="613" viewBox="1251 145 657 613"><g fill="none" stroke="#fff" stroke-width="1.8"><rect x="1379" y="172.7" width="13.2" height="16.6"/><rect x="1404.4" y="203.2" width="13.2" height="16.6"/><rect x="1444.9" y="193.2" width="13.2" height="16.6"/><rect x="1465.9" y="182.6" width="13.2" height="16.6"/><rect x="1493.9" y="187.95" width="13.2" height="16.6"/><rect x="1526.4" y="196.1" width="13.2" height="16.6"/><rect x="1443.9" y="220.2" width="13.2" height="16.6"/><rect x="1411.4" y="261.1" width="13.2" height="16.6"/><rect x="1394.4" y="284.2" width="13.2" height="16.6"/><rect x="1569.9" y="200.9" width="13.2" height="16.6"/><rect x="1573" y="205" width="13.2" height="16.6"/><rect x="1535.4" y="212.1" width="13.2" height="16.6"/><rect x="1543.4" y="211.1" width="13.2" height="16.6"/><rect x="1547.15" y="212.95" width="13.2" height="16.6"/><rect x="1519.65" y="221.7" width="13.2" height="16.6"/><rect x="1500.4" y="231.7" width="13.2" height="16.6"/><rect x="1510.9" y="229.8" width="13.2" height="16.6"/><rect x="1520.9" y="227.95" width="13.2" height="16.6"/><rect x="1496.9" y="244.8" width="13.2" height="16.6"/><rect x="1510.9" y="239.2" width="13.2" height="16.6"/><rect x="1544.65" y="229.2" width="13.2" height="16.6"/><rect x="1528.4" y="226.7" width="13.2" height="16.6"/><rect x="1536.4" y="221.7" width="13.2" height="16.6"/><rect x="1652.9" y="237.2" width="13.2" height="16.6"/><rect x="1589.4" y="253.95" width="13.2" height="16.6"/><rect x="1736.9" y="213.2" width="13.2" height="16.6"/><rect x="1400.3" y="322.2" width="13.2" height="16.6"/><rect x="1435.4" y="318.6" width="13.2" height="16.6"/><rect x="1457.9" y="325.2" width="13.2" height="16.6"/><rect x="1492.9" y="346.2" width="13.2" height="16.6"/><rect x="1437.9" y="385.1" width="13.2" height="16.6"/><rect x="1557.4" y="313.7" width="13.2" height="16.6"/><rect x="1576.9" y="410.2" width="13.2" height="16.6"/><rect x="1438" y="446.1" width="13.2" height="16.6"/><rect x="1435.4" y="587.3" width="13.2" height="16.6"/></g><rect x="1458.9" y="269.2" width="13.2" height="16.6" fill="none" stroke="#000" stroke-width="2"/><g stroke="#000" stroke-width="1.2"><ellipse cx="1362" cy="177.9" rx="4.3" ry="5.2" fill="#00ff00"/><ellipse cx="1392.9" cy="208" rx="4.3" ry="5.2" fill="#4a9a4e"/><ellipse cx="1446" cy="197.9" rx="4.3" ry="5.2" fill="#a0b848"/><ellipse cx="1472.9" cy="189.5" rx="4.3" ry="5.2" fill="#ffff00"/><ellipse cx="1507.9" cy="196" rx="4.3" ry="5.2" fill="#e8c428"/><ellipse cx="1547.1" cy="203.1" rx="4.3" ry="5.2" fill="#e0a030"/><ellipse cx="1445" cy="227" rx="4.3" ry="5.2" fill="#5a6c46"/><ellipse cx="1404" cy="268.9" rx="4.3" ry="5.2" fill="#6cb8a8"/><ellipse cx="1383.9" cy="292.9" rx="4.3" ry="5.2" fill="#00ffff"/><ellipse cx="1464.4" cy="277.9" rx="4.3" ry="5.2" fill="#a0a0a0"/><ellipse cx="1468.1" cy="277.9" rx="4.3" ry="5.2" fill="#999999"/><ellipse cx="1564.4" cy="220" rx="4.3" ry="5.2" fill="#8a5a34"/><ellipse cx="1580.9" cy="217.9" rx="4.3" ry="5.2" fill="#7a4c28"/><ellipse cx="1593" cy="225" rx="4.3" ry="5.2" fill="#6a4028"/><ellipse cx="1603.1" cy="209.75" rx="4.3" ry="5.2" fill="#d88430"/><ellipse cx="1611.6" cy="212.9" rx="4.3" ry="5.2" fill="#b87028"/><ellipse cx="1561.25" cy="228.5" rx="4.3" ry="5.2" fill="#d08858"/><ellipse cx="1569.6" cy="229.4" rx="4.3" ry="5.2" fill="#d88a60"/><ellipse cx="1567" cy="237.1" rx="4.3" ry="5.2" fill="#f09878"/><ellipse cx="1540" cy="228.1" rx="4.3" ry="5.2" fill="#c88a5c"/><ellipse cx="1546.9" cy="233.75" rx="4.3" ry="5.2" fill="#c08058"/><ellipse cx="1553.1" cy="237.1" rx="4.3" ry="5.2" fill="#d08c68"/><ellipse cx="1531.5" cy="236.5" rx="4.3" ry="5.2" fill="#c89068"/><ellipse cx="1530" cy="240" rx="4.3" ry="5.2" fill="#c08a68"/><ellipse cx="1541.25" cy="240" rx="4.3" ry="5.2" fill="#b87c58"/><ellipse cx="1536.9" cy="245.6" rx="4.3" ry="5.2" fill="#6a4838"/><ellipse cx="1539" cy="234.75" rx="4.3" ry="5.2" fill="#c89068"/><ellipse cx="1515" cy="241.5" rx="4.3" ry="5.2" fill="#f8b890"/><ellipse cx="1513" cy="251" rx="4.3" ry="5.2" fill="#f0b090"/><ellipse cx="1512.25" cy="253.5" rx="4.3" ry="5.2" fill="#fcb8a0"/><ellipse cx="1634" cy="260.9" rx="4.3" ry="5.2" fill="#c05868"/><ellipse cx="1708" cy="246.9" rx="4.3" ry="5.2" fill="#b03848"/><ellipse cx="1791" cy="225" rx="4.3" ry="5.2" fill="#ff0000"/><ellipse cx="1456" cy="311.9" rx="4.3" ry="5.2" fill="#000000"/><ellipse cx="1391" cy="332" rx="4.3" ry="5.2" fill="#008098"/><ellipse cx="1436" cy="329.8" rx="4.3" ry="5.2" fill="#6080a8"/><ellipse cx="1464" cy="335.5" rx="4.3" ry="5.2" fill="#8a86b4"/><ellipse cx="1495" cy="368" rx="4.3" ry="5.2" fill="#5c3c6c"/><ellipse cx="1440.6" cy="402" rx="4.3" ry="5.2" fill="#5060a8"/><ellipse cx="1593" cy="324" rx="4.3" ry="5.2" fill="#c05898"/><ellipse cx="1614" cy="419" rx="4.3" ry="5.2" fill="#ff00ff"/><ellipse cx="1445" cy="471" rx="4.3" ry="5.2" fill="#4050a0"/><ellipse cx="1445" cy="604" rx="4.3" ry="5.2" fill="#0000ff"/></g></svg>
<div class="a" style="left:1695px;top:540px;width:209px;height:167px;background:#363636"></div>
<div class="a" style="left:1697px;top:542px;width:205.3px;height:163.3px;background:linear-gradient(135deg,#ff8c28,#ff6a1c 50%,#ff3c22);border:1.3px solid #8c8c8c;box-sizing:border-box"></div>
<svg class="a" style="left:1698px;top:543px" width="204" height="161" viewBox="1698 543 204 161"><g fill="none" stroke="#fff" stroke-width="1.4"><rect x="1832.7" y="569.2" width="13.4" height="17"/><rect x="1876.8" y="569.2" width="13.4" height="17"/><rect x="1731.8" y="591.1" width="13.4" height="17"/><rect x="1792.1" y="614.4" width="13.4" height="17"/><rect x="1873.7" y="613" width="13.4" height="17"/><rect x="1814.8" y="630" width="13.4" height="17"/><rect x="1710" y="626.5" width="13.4" height="17"/><rect x="1695.3" y="628" width="13.4" height="17"/><rect x="1715" y="641.9" width="13.4" height="17"/><rect x="1729.1" y="654" width="13.4" height="17"/><rect x="1799.3" y="660.5" width="13.4" height="17"/></g><g stroke="#000" stroke-width="1.1"><ellipse cx="1807.5" cy="608" rx="4.3" ry="5.2" fill="#c88850"/><ellipse cx="1882" cy="638" rx="4.3" ry="5.2" fill="#d08858"/><ellipse cx="1728.8" cy="647" rx="4.3" ry="5.2" fill="#c88860"/><ellipse cx="1762.9" cy="646.7" rx="4.3" ry="5.2" fill="#c08858"/><ellipse cx="1770" cy="653.8" rx="4.3" ry="5.2" fill="#f0a878"/><ellipse cx="1798.8" cy="654.8" rx="4.3" ry="5.2" fill="#c08050"/><ellipse cx="1708.8" cy="660.4" rx="4.3" ry="5.2" fill="#d09068"/><ellipse cx="1758.5" cy="667" rx="4.3" ry="5.2" fill="#c88860"/><ellipse cx="1809.8" cy="673.8" rx="4.3" ry="5.2" fill="#d08058"/><ellipse cx="1868.8" cy="684" rx="4.3" ry="5.2" fill="#ff9878"/><ellipse cx="1706.3" cy="699.4" rx="4.3" ry="5.2" fill="#6a4030"/></g></svg>
<div class="a" style="left:1645px;top:717px;width:260px;height:34px;background:#323232"></div>
<span class="t" style="left:1646px;top:723.83px;font-size:23px;transform:scaleX(0.882);transform-origin:0 0;color:#f2f2f2;">RGB Triplet: 202, 136, 97</span>
<span class="t" style="left:252.3px;top:810.67px;font-size:35px;transform:scaleX(0.866);transform-origin:0 0;color:#f2f2f2;-webkit-text-stroke:.45px #f2f2f2;">Avg dE2000: 3.04</span>
<span class="t" style="left:248.3px;top:860.87px;font-size:35px;transform:scaleX(0.874);transform-origin:0 0;color:#f2f2f2;-webkit-text-stroke:.45px #f2f2f2;">Max dE2000: 5.02</span>
<span class="t" style="left:215px;top:921.07px;font-size:35px;transform:scaleX(0.879);transform-origin:0 0;color:#f2f2f2;-webkit-text-stroke:.45px #f2f2f2;">Current Reading</span>
<span class="t" style="left:215px;top:971.48px;font-size:30.5px;transform:scaleX(0.842);transform-origin:0 0;color:#f2f2f2;-webkit-text-stroke:.35px #f2f2f2;">x: 0.4685</span>
<span class="t" style="left:376.7px;top:971.48px;font-size:30.5px;transform:scaleX(0.845);transform-origin:0 0;color:#f2f2f2;-webkit-text-stroke:.35px #f2f2f2;">y: 0.3781</span>
<span class="t" style="left:215px;top:1022.48px;font-size:30.5px;transform:scaleX(0.842);transform-origin:0 0;color:#f2f2f2;-webkit-text-stroke:.35px #f2f2f2;">fL: 46.76</span>
<span class="t" style="left:215px;top:1064.18px;font-size:30.5px;transform:scaleX(0.879);transform-origin:0 0;color:#f2f2f2;-webkit-text-stroke:.35px #f2f2f2;">cd/m²: 160.21</span>
<div class="a" style="left:532px;top:821px;width:1386px;height:281px;overflow:hidden">
<div class="a" style="left:0;top:0;width:1386px;height:35px;background:linear-gradient(#2e2e2e,#242424 50%,#1a1a1a 52%,#0e0e0e)"></div>
<div class="a" style="left:0;top:0;width:9px;height:35px;background:#000"></div>
<div class="a" style="left:0;top:34.8px;width:1386px;height:32.5px;background:#424242"></div>
<div class="a" style="left:0;top:34.8px;width:9px;height:32.5px;background:#2a2a2a"></div>
<div class="a" style="left:0;top:66.97px;width:1386px;height:32.5px;background:#808080"></div>
<div class="a" style="left:0;top:66.97px;width:9px;height:32.5px;background:#303030"></div>
<div class="a" style="left:0;top:99.14px;width:1386px;height:32.5px;background:#424242"></div>
<div class="a" style="left:0;top:99.14px;width:9px;height:32.5px;background:#2a2a2a"></div>
<div class="a" style="left:0;top:131.31px;width:1386px;height:32.5px;background:#808080"></div>
<div class="a" style="left:0;top:131.31px;width:9px;height:32.5px;background:#303030"></div>
<div class="a" style="left:0;top:163.48px;width:1386px;height:32.5px;background:#424242"></div>
<div class="a" style="left:0;top:163.48px;width:9px;height:32.5px;background:#2a2a2a"></div>
<div class="a" style="left:0;top:195.65px;width:1386px;height:32.5px;background:#808080"></div>
<div class="a" style="left:0;top:195.65px;width:9px;height:32.5px;background:#303030"></div>
<div class="a" style="left:0;top:227.82px;width:1386px;height:32.5px;background:#424242"></div>
<div class="a" style="left:0;top:227.82px;width:9px;height:32.5px;background:#2a2a2a"></div>
<div class="a" style="left:519.3px;top:133px;width:60.5px;height:28.5px;background:#f0f0f0;border:1px solid #fff;box-sizing:border-box"></div>
<span class="t" style="left:91.9px;top:10.02px;font-size:16.4px;transform:scaleX(0.640);transform-origin:0 0;color:#fff;">White</span>
<span class="t" style="left:132.9px;top:10.02px;font-size:16.4px;transform:scaleX(0.640);transform-origin:0 0;color:#fff;">Gray 80</span>
<span class="t" style="left:175.5px;top:10.02px;font-size:16.4px;transform:scaleX(0.640);transform-origin:0 0;color:#fff;">Gray 65</span>
<span class="t" style="left:217.8px;top:10.02px;font-size:16.4px;transform:scaleX(0.640);transform-origin:0 0;color:#fff;">Gray 50</span>
<span class="t" style="left:260.5px;top:10.02px;font-size:16.4px;transform:scaleX(0.640);transform-origin:0 0;color:#fff;">Gray 35</span>
<span class="t" style="left:303.1px;top:10.02px;font-size:16.4px;transform:scaleX(0.640);transform-origin:0 0;color:#fff;">Black</span>
<span class="t" style="left:334.1px;top:10.02px;font-size:16.4px;transform:scaleX(0.640);transform-origin:0 0;color:#fff;">Dark Skin</span>
<span class="t" style="left:384.4px;top:10.02px;font-size:16.4px;transform:scaleX(0.640);transform-origin:0 0;color:#fff;">Light Skin</span>
<span class="t" style="left:436.2px;top:10.02px;font-size:16.4px;transform:scaleX(0.640);transform-origin:0 0;color:#fff;">Blue Sky</span>
<span class="t" style="left:482.1px;top:10.02px;font-size:16.4px;transform:scaleX(0.640);transform-origin:0 0;color:#fff;">Foliage</span>
<span class="t" style="left:521.9px;top:10.02px;font-size:16.4px;transform:scaleX(0.640);transform-origin:0 0;color:#fff;">Blue Flower</span>
<span class="t" style="left:583.9px;top:10.02px;font-size:16.4px;transform:scaleX(0.640);transform-origin:0 0;color:#fff;">Bluish Green</span>
<span class="t" style="left:650.6px;top:10.02px;font-size:16.4px;transform:scaleX(0.640);transform-origin:0 0;color:#fff;">Orange</span>
<span class="t" style="left:691.6px;top:10.02px;font-size:16.4px;transform:scaleX(0.640);transform-origin:0 0;color:#fff;">Purplish Blue</span>
<span class="t" style="left:760.2px;top:10.02px;font-size:16.4px;transform:scaleX(0.640);transform-origin:0 0;color:#fff;">Moderate Red</span>
<span class="t" style="left:834.6px;top:10.02px;font-size:16.4px;transform:scaleX(0.640);transform-origin:0 0;color:#fff;">Purple</span>
<span class="t" style="left:871.4px;top:10.02px;font-size:16.4px;transform:scaleX(0.640);transform-origin:0 0;color:#fff;">Yellow Green</span>
<span class="t" style="left:939.6px;top:10.02px;font-size:16.4px;transform:scaleX(0.640);transform-origin:0 0;color:#fff;">Orange Yellow</span>
<span class="t" style="left:1014.3px;top:10.02px;font-size:16.4px;transform:scaleX(0.640);transform-origin:0 0;color:#fff;">Blue</span>
<span class="t" style="left:1048.9px;top:10.02px;font-size:16.4px;transform:scaleX(0.640);transform-origin:0 0;color:#fff;">Green</span>
<span class="t" style="left:1090.1px;top:10.02px;font-size:16.4px;transform:scaleX(0.640);transform-origin:0 0;color:#fff;">Red</span>
<span class="t" style="left:1124.8px;top:10.02px;font-size:16.4px;transform:scaleX(0.640);transform-origin:0 0;color:#fff;">Yellow</span>
<span class="t" style="left:1166.3px;top:10.02px;font-size:16.4px;transform:scaleX(0.640);transform-origin:0 0;color:#fff;">Magenta</span>
<span class="t" style="left:1214.4px;top:10.02px;font-size:16.4px;transform:scaleX(0.640);transform-origin:0 0;color:#fff;">Cyan</span>
<span class="t" style="left:1249.4px;top:10.02px;font-size:16.4px;transform:scaleX(0.640);transform-origin:0 0;color:#fff;">100% Red</span>
<span class="t" style="left:1302.7px;top:10.02px;font-size:16.4px;transform:scaleX(0.640);transform-origin:0 0;color:#fff;">100% Green</span>
<span class="t" style="left:1366.8px;top:10.02px;font-size:16.4px;transform:scaleX(0.640);transform-origin:0 0;color:#fff;">100% Blue</span>
<span class="t" style="left:11.9px;top:42.55px;font-size:19.2px;transform:scaleX(0.536);transform-origin:0 0;color:#f4f4f4;">x: CIE31</span>
<span class="t" style="left:91.9px;top:42.55px;font-size:19.2px;transform:scaleX(0.567);transform-origin:0 0;color:#f4f4f4;">0.31</span>
<span class="t" style="left:132.9px;top:42.55px;font-size:19.2px;transform:scaleX(0.567);transform-origin:0 0;color:#f4f4f4;">0.31</span>
<span class="t" style="left:175.5px;top:42.55px;font-size:19.2px;transform:scaleX(0.567);transform-origin:0 0;color:#f4f4f4;">0.32</span>
<span class="t" style="left:217.8px;top:42.55px;font-size:19.2px;transform:scaleX(0.567);transform-origin:0 0;color:#f4f4f4;">0.31</span>
<span class="t" style="left:260.5px;top:42.55px;font-size:19.2px;transform:scaleX(0.567);transform-origin:0 0;color:#f4f4f4;">0.31</span>
<span class="t" style="left:303.1px;top:42.55px;font-size:19.2px;transform:scaleX(0.567);transform-origin:0 0;color:#f4f4f4;">0.27</span>
<span class="t" style="left:334.1px;top:42.55px;font-size:19.2px;transform:scaleX(0.567);transform-origin:0 0;color:#f4f4f4;">0.42</span>
<span class="t" style="left:384.4px;top:42.55px;font-size:19.2px;transform:scaleX(0.567);transform-origin:0 0;color:#f4f4f4;">0.39</span>
<span class="t" style="left:436.2px;top:42.55px;font-size:19.2px;transform:scaleX(0.567);transform-origin:0 0;color:#f4f4f4;">0.24</span>
<span class="t" style="left:482.1px;top:42.55px;font-size:19.2px;transform:scaleX(0.567);transform-origin:0 0;color:#f4f4f4;">0.33</span>
<span class="t" style="left:521.9px;top:42.55px;font-size:19.2px;transform:scaleX(0.567);transform-origin:0 0;color:#f4f4f4;">0.27</span>
<span class="t" style="left:583.9px;top:42.55px;font-size:19.2px;transform:scaleX(0.567);transform-origin:0 0;color:#f4f4f4;">0.24</span>
<span class="t" style="left:650.6px;top:42.55px;font-size:19.2px;transform:scaleX(0.567);transform-origin:0 0;color:#f4f4f4;">0.54</span>
<span class="t" style="left:691.6px;top:42.55px;font-size:19.2px;transform:scaleX(0.567);transform-origin:0 0;color:#f4f4f4;">0.21</span>
<span class="t" style="left:760.2px;top:42.55px;font-size:19.2px;transform:scaleX(0.567);transform-origin:0 0;color:#f4f4f4;">0.50</span>
<span class="t" style="left:834.6px;top:42.55px;font-size:19.2px;transform:scaleX(0.567);transform-origin:0 0;color:#f4f4f4;">0.28</span>
<span class="t" style="left:871.4px;top:42.55px;font-size:19.2px;transform:scaleX(0.567);transform-origin:0 0;color:#f4f4f4;">0.37</span>
<span class="t" style="left:939.6px;top:42.55px;font-size:19.2px;transform:scaleX(0.567);transform-origin:0 0;color:#f4f4f4;">0.49</span>
<span class="t" style="left:1014.3px;top:42.55px;font-size:19.2px;transform:scaleX(0.567);transform-origin:0 0;color:#f4f4f4;">0.19</span>
<span class="t" style="left:1048.9px;top:42.55px;font-size:19.2px;transform:scaleX(0.567);transform-origin:0 0;color:#f4f4f4;">0.28</span>
<span class="t" style="left:1090.1px;top:42.55px;font-size:19.2px;transform:scaleX(0.567);transform-origin:0 0;color:#f4f4f4;">0.58</span>
<span class="t" style="left:1124.8px;top:42.55px;font-size:19.2px;transform:scaleX(0.567);transform-origin:0 0;color:#f4f4f4;">0.46</span>
<span class="t" style="left:1166.3px;top:42.55px;font-size:19.2px;transform:scaleX(0.567);transform-origin:0 0;color:#f4f4f4;">0.40</span>
<span class="t" style="left:1214.4px;top:42.55px;font-size:19.2px;transform:scaleX(0.567);transform-origin:0 0;color:#f4f4f4;">0.19</span>
<span class="t" style="left:1249.4px;top:42.55px;font-size:19.2px;transform:scaleX(0.567);transform-origin:0 0;color:#f4f4f4;">0.67</span>
<span class="t" style="left:1302.7px;top:42.55px;font-size:19.2px;transform:scaleX(0.567);transform-origin:0 0;color:#f4f4f4;">0.26</span>
<span class="t" style="left:1366.8px;top:42.55px;font-size:19.2px;transform:scaleX(0.567);transform-origin:0 0;color:#f4f4f4;">0.15</span>
<span class="t" style="left:11.9px;top:74.72px;font-size:19.2px;transform:scaleX(0.536);transform-origin:0 0;color:#f4f4f4;">y: CIE31</span>
<span class="t" style="left:91.9px;top:74.72px;font-size:19.2px;transform:scaleX(0.567);transform-origin:0 0;color:#f4f4f4;">0.33</span>
<span class="t" style="left:132.9px;top:74.72px;font-size:19.2px;transform:scaleX(0.567);transform-origin:0 0;color:#f4f4f4;">0.33</span>
<span class="t" style="left:175.5px;top:74.72px;font-size:19.2px;transform:scaleX(0.567);transform-origin:0 0;color:#f4f4f4;">0.33</span>
<span class="t" style="left:217.8px;top:74.72px;font-size:19.2px;transform:scaleX(0.567);transform-origin:0 0;color:#f4f4f4;">0.33</span>
<span class="t" style="left:260.5px;top:74.72px;font-size:19.2px;transform:scaleX(0.567);transform-origin:0 0;color:#f4f4f4;">0.33</span>
<span class="t" style="left:303.1px;top:74.72px;font-size:19.2px;transform:scaleX(0.567);transform-origin:0 0;color:#f4f4f4;">0.28</span>
<span class="t" style="left:334.1px;top:74.72px;font-size:19.2px;transform:scaleX(0.567);transform-origin:0 0;color:#f4f4f4;">0.36</span>
<span class="t" style="left:384.4px;top:74.72px;font-size:19.2px;transform:scaleX(0.567);transform-origin:0 0;color:#f4f4f4;">0.35</span>
<span class="t" style="left:436.2px;top:74.72px;font-size:19.2px;transform:scaleX(0.567);transform-origin:0 0;color:#f4f4f4;">0.26</span>
<span class="t" style="left:482.1px;top:74.72px;font-size:19.2px;transform:scaleX(0.567);transform-origin:0 0;color:#f4f4f4;">0.43</span>
<span class="t" style="left:521.9px;top:74.72px;font-size:19.2px;transform:scaleX(0.567);transform-origin:0 0;color:#f4f4f4;">0.25</span>
<span class="t" style="left:583.9px;top:74.72px;font-size:19.2px;transform:scaleX(0.567);transform-origin:0 0;color:#f4f4f4;">0.36</span>
<span class="t" style="left:650.6px;top:74.72px;font-size:19.2px;transform:scaleX(0.567);transform-origin:0 0;color:#f4f4f4;">0.40</span>
<span class="t" style="left:691.6px;top:74.72px;font-size:19.2px;transform:scaleX(0.567);transform-origin:0 0;color:#f4f4f4;">0.18</span>
<span class="t" style="left:760.2px;top:74.72px;font-size:19.2px;transform:scaleX(0.567);transform-origin:0 0;color:#f4f4f4;">0.30</span>
<span class="t" style="left:834.6px;top:74.72px;font-size:19.2px;transform:scaleX(0.567);transform-origin:0 0;color:#f4f4f4;">0.21</span>
<span class="t" style="left:871.4px;top:74.72px;font-size:19.2px;transform:scaleX(0.567);transform-origin:0 0;color:#f4f4f4;">0.50</span>
<span class="t" style="left:939.6px;top:74.72px;font-size:19.2px;transform:scaleX(0.567);transform-origin:0 0;color:#f4f4f4;">0.44</span>
<span class="t" style="left:1014.3px;top:74.72px;font-size:19.2px;transform:scaleX(0.567);transform-origin:0 0;color:#f4f4f4;">0.13</span>
<span class="t" style="left:1048.9px;top:74.72px;font-size:19.2px;transform:scaleX(0.567);transform-origin:0 0;color:#f4f4f4;">0.51</span>
<span class="t" style="left:1090.1px;top:74.72px;font-size:19.2px;transform:scaleX(0.567);transform-origin:0 0;color:#f4f4f4;">0.30</span>
<span class="t" style="left:1124.8px;top:74.72px;font-size:19.2px;transform:scaleX(0.567);transform-origin:0 0;color:#f4f4f4;">0.47</span>
<span class="t" style="left:1166.3px;top:74.72px;font-size:19.2px;transform:scaleX(0.567);transform-origin:0 0;color:#f4f4f4;">0.24</span>
<span class="t" style="left:1214.4px;top:74.72px;font-size:19.2px;transform:scaleX(0.567);transform-origin:0 0;color:#f4f4f4;">0.27</span>
<span class="t" style="left:1249.4px;top:74.72px;font-size:19.2px;transform:scaleX(0.567);transform-origin:0 0;color:#f4f4f4;">0.31</span>
<span class="t" style="left:1302.7px;top:74.72px;font-size:19.2px;transform:scaleX(0.567);transform-origin:0 0;color:#f4f4f4;">0.63</span>
<span class="t" style="left:1366.8px;top:74.72px;font-size:19.2px;transform:scaleX(0.567);transform-origin:0 0;color:#f4f4f4;">0.06</span>
<span class="t" style="left:11.9px;top:106.89px;font-size:19.2px;transform:scaleX(0.508);transform-origin:0 0;color:#f4f4f4;">Y</span>
<span class="t" style="left:91.9px;top:106.89px;font-size:19.2px;transform:scaleX(0.567);transform-origin:0 0;color:#f4f4f4;">448.04</span>
<span class="t" style="left:132.9px;top:106.89px;font-size:19.2px;transform:scaleX(0.567);transform-origin:0 0;color:#f4f4f4;">361.69</span>
<span class="t" style="left:175.5px;top:106.89px;font-size:19.2px;transform:scaleX(0.567);transform-origin:0 0;color:#f4f4f4;">290.05</span>
<span class="t" style="left:217.8px;top:106.89px;font-size:19.2px;transform:scaleX(0.567);transform-origin:0 0;color:#f4f4f4;">223.83</span>
<span class="t" style="left:260.5px;top:106.89px;font-size:19.2px;transform:scaleX(0.567);transform-origin:0 0;color:#f4f4f4;">156.70</span>
<span class="t" style="left:303.1px;top:106.89px;font-size:19.2px;transform:scaleX(0.567);transform-origin:0 0;color:#f4f4f4;">0.66</span>
<span class="t" style="left:334.1px;top:106.89px;font-size:19.2px;transform:scaleX(0.567);transform-origin:0 0;color:#f4f4f4;">45.19</span>
<span class="t" style="left:384.4px;top:106.89px;font-size:19.2px;transform:scaleX(0.567);transform-origin:0 0;color:#f4f4f4;">163.38</span>
<span class="t" style="left:436.2px;top:106.89px;font-size:19.2px;transform:scaleX(0.567);transform-origin:0 0;color:#f4f4f4;">82.60</span>
<span class="t" style="left:482.1px;top:106.89px;font-size:19.2px;transform:scaleX(0.567);transform-origin:0 0;color:#f4f4f4;">56.90</span>
<span class="t" style="left:521.9px;top:106.89px;font-size:19.2px;transform:scaleX(0.567);transform-origin:0 0;color:#f4f4f4;">105.51</span>
<span class="t" style="left:583.9px;top:106.89px;font-size:19.2px;transform:scaleX(0.567);transform-origin:0 0;color:#f4f4f4;">187.58</span>
<span class="t" style="left:650.6px;top:106.89px;font-size:19.2px;transform:scaleX(0.567);transform-origin:0 0;color:#f4f4f4;">134.70</span>
<span class="t" style="left:691.6px;top:106.89px;font-size:19.2px;transform:scaleX(0.567);transform-origin:0 0;color:#f4f4f4;">50.28</span>
<span class="t" style="left:760.2px;top:106.89px;font-size:19.2px;transform:scaleX(0.567);transform-origin:0 0;color:#f4f4f4;">86.91</span>
<span class="t" style="left:834.6px;top:106.89px;font-size:19.2px;transform:scaleX(0.567);transform-origin:0 0;color:#f4f4f4;">25.87</span>
<span class="t" style="left:871.4px;top:106.89px;font-size:19.2px;transform:scaleX(0.567);transform-origin:0 0;color:#f4f4f4;">197.27</span>
<span class="t" style="left:939.6px;top:106.89px;font-size:19.2px;transform:scaleX(0.567);transform-origin:0 0;color:#f4f4f4;">201.83</span>
<span class="t" style="left:1014.3px;top:106.89px;font-size:19.2px;transform:scaleX(0.567);transform-origin:0 0;color:#f4f4f4;">25.56</span>
<span class="t" style="left:1048.9px;top:106.89px;font-size:19.2px;transform:scaleX(0.567);transform-origin:0 0;color:#f4f4f4;">104.08</span>
<span class="t" style="left:1090.1px;top:106.89px;font-size:19.2px;transform:scaleX(0.567);transform-origin:0 0;color:#f4f4f4;">55.72</span>
<span class="t" style="left:1124.8px;top:106.89px;font-size:19.2px;transform:scaleX(0.567);transform-origin:0 0;color:#f4f4f4;">273.02</span>
<span class="t" style="left:1166.3px;top:106.89px;font-size:19.2px;transform:scaleX(0.567);transform-origin:0 0;color:#f4f4f4;">85.87</span>
<span class="t" style="left:1214.4px;top:106.89px;font-size:19.2px;transform:scaleX(0.567);transform-origin:0 0;color:#f4f4f4;">85.57</span>
<span class="t" style="left:1249.4px;top:106.89px;font-size:19.2px;transform:scaleX(0.567);transform-origin:0 0;color:#f4f4f4;">102.40</span>
<span class="t" style="left:1302.7px;top:106.89px;font-size:19.2px;transform:scaleX(0.567);transform-origin:0 0;color:#f4f4f4;">317.51</span>
<span class="t" style="left:1366.8px;top:106.89px;font-size:19.2px;transform:scaleX(0.567);transform-origin:0 0;color:#f4f4f4;">30.63</span>
<span class="t" style="left:11.9px;top:139.06px;font-size:19.2px;transform:scaleX(0.567);transform-origin:0 0;color:#f4f4f4;">Target x:CIE31</span>
<span class="t" style="left:91.9px;top:139.06px;font-size:19.2px;transform:scaleX(0.567);transform-origin:0 0;color:#f4f4f4;">0.31</span>
<span class="t" style="left:132.9px;top:139.06px;font-size:19.2px;transform:scaleX(0.567);transform-origin:0 0;color:#f4f4f4;">0.31</span>
<span class="t" style="left:175.5px;top:139.06px;font-size:19.2px;transform:scaleX(0.567);transform-origin:0 0;color:#f4f4f4;">0.31</span>
<span class="t" style="left:217.8px;top:139.06px;font-size:19.2px;transform:scaleX(0.567);transform-origin:0 0;color:#f4f4f4;">0.31</span>
<span class="t" style="left:260.5px;top:139.06px;font-size:19.2px;transform:scaleX(0.567);transform-origin:0 0;color:#f4f4f4;">0.31</span>
<span class="t" style="left:303.1px;top:139.06px;font-size:19.2px;transform:scaleX(0.567);transform-origin:0 0;color:#f4f4f4;">0.31</span>
<span class="t" style="left:334.1px;top:139.06px;font-size:19.2px;transform:scaleX(0.567);transform-origin:0 0;color:#f4f4f4;">0.40</span>
<span class="t" style="left:384.4px;top:139.06px;font-size:19.2px;transform:scaleX(0.567);transform-origin:0 0;color:#f4f4f4;">0.38</span>
<span class="t" style="left:436.2px;top:139.06px;font-size:19.2px;transform:scaleX(0.567);transform-origin:0 0;color:#f4f4f4;">0.25</span>
<span class="t" style="left:482.1px;top:139.06px;font-size:19.2px;transform:scaleX(0.567);transform-origin:0 0;color:#f4f4f4;">0.34</span>
<span class="t" style="left:521.9px;top:139.06px;font-size:19.2px;transform:scaleX(0.567);transform-origin:0 0;color:#111;">0.27</span>
<span class="t" style="left:583.9px;top:139.06px;font-size:19.2px;transform:scaleX(0.567);transform-origin:0 0;color:#f4f4f4;">0.26</span>
<span class="t" style="left:650.6px;top:139.06px;font-size:19.2px;transform:scaleX(0.567);transform-origin:0 0;color:#f4f4f4;">0.51</span>
<span class="t" style="left:691.6px;top:139.06px;font-size:19.2px;transform:scaleX(0.567);transform-origin:0 0;color:#f4f4f4;">0.22</span>
<span class="t" style="left:760.2px;top:139.06px;font-size:19.2px;transform:scaleX(0.567);transform-origin:0 0;color:#f4f4f4;">0.46</span>
<span class="t" style="left:834.6px;top:139.06px;font-size:19.2px;transform:scaleX(0.567);transform-origin:0 0;color:#f4f4f4;">0.29</span>
<span class="t" style="left:871.4px;top:139.06px;font-size:19.2px;transform:scaleX(0.567);transform-origin:0 0;color:#f4f4f4;">0.38</span>
<span class="t" style="left:939.6px;top:139.06px;font-size:19.2px;transform:scaleX(0.567);transform-origin:0 0;color:#f4f4f4;">0.47</span>
<span class="t" style="left:1014.3px;top:139.06px;font-size:19.2px;transform:scaleX(0.567);transform-origin:0 0;color:#f4f4f4;">0.19</span>
<span class="t" style="left:1048.9px;top:139.06px;font-size:19.2px;transform:scaleX(0.567);transform-origin:0 0;color:#f4f4f4;">0.31</span>
<span class="t" style="left:1090.1px;top:139.06px;font-size:19.2px;transform:scaleX(0.567);transform-origin:0 0;color:#f4f4f4;">0.54</span>
<span class="t" style="left:1124.8px;top:139.06px;font-size:19.2px;transform:scaleX(0.567);transform-origin:0 0;color:#f4f4f4;">0.45</span>
<span class="t" style="left:1166.3px;top:139.06px;font-size:19.2px;transform:scaleX(0.567);transform-origin:0 0;color:#f4f4f4;">0.37</span>
<span class="t" style="left:1214.4px;top:139.06px;font-size:19.2px;transform:scaleX(0.567);transform-origin:0 0;color:#f4f4f4;">0.21</span>
<span class="t" style="left:1249.4px;top:139.06px;font-size:19.2px;transform:scaleX(0.567);transform-origin:0 0;color:#f4f4f4;">0.64</span>
<span class="t" style="left:1302.7px;top:139.06px;font-size:19.2px;transform:scaleX(0.567);transform-origin:0 0;color:#f4f4f4;">0.30</span>
<span class="t" style="left:1366.8px;top:139.06px;font-size:19.2px;transform:scaleX(0.567);transform-origin:0 0;color:#f4f4f4;">0.15</span>
<span class="t" style="left:11.9px;top:171.23px;font-size:19.2px;transform:scaleX(0.571);transform-origin:0 0;color:#f4f4f4;">Target y:CIE31</span>
<span class="t" style="left:91.9px;top:171.23px;font-size:19.2px;transform:scaleX(0.567);transform-origin:0 0;color:#f4f4f4;">0.33</span>
<span class="t" style="left:132.9px;top:171.23px;font-size:19.2px;transform:scaleX(0.567);transform-origin:0 0;color:#f4f4f4;">0.33</span>
<span class="t" style="left:175.5px;top:171.23px;font-size:19.2px;transform:scaleX(0.567);transform-origin:0 0;color:#f4f4f4;">0.33</span>
<span class="t" style="left:217.8px;top:171.23px;font-size:19.2px;transform:scaleX(0.567);transform-origin:0 0;color:#f4f4f4;">0.33</span>
<span class="t" style="left:260.5px;top:171.23px;font-size:19.2px;transform:scaleX(0.567);transform-origin:0 0;color:#f4f4f4;">0.33</span>
<span class="t" style="left:303.1px;top:171.23px;font-size:19.2px;transform:scaleX(0.567);transform-origin:0 0;color:#f4f4f4;">0.33</span>
<span class="t" style="left:334.1px;top:171.23px;font-size:19.2px;transform:scaleX(0.567);transform-origin:0 0;color:#f4f4f4;">0.36</span>
<span class="t" style="left:384.4px;top:171.23px;font-size:19.2px;transform:scaleX(0.567);transform-origin:0 0;color:#f4f4f4;">0.36</span>
<span class="t" style="left:436.2px;top:171.23px;font-size:19.2px;transform:scaleX(0.567);transform-origin:0 0;color:#f4f4f4;">0.27</span>
<span class="t" style="left:482.1px;top:171.23px;font-size:19.2px;transform:scaleX(0.567);transform-origin:0 0;color:#f4f4f4;">0.43</span>
<span class="t" style="left:521.9px;top:171.23px;font-size:19.2px;transform:scaleX(0.567);transform-origin:0 0;color:#f4f4f4;">0.25</span>
<span class="t" style="left:583.9px;top:171.23px;font-size:19.2px;transform:scaleX(0.567);transform-origin:0 0;color:#f4f4f4;">0.36</span>
<span class="t" style="left:650.6px;top:171.23px;font-size:19.2px;transform:scaleX(0.567);transform-origin:0 0;color:#f4f4f4;">0.41</span>
<span class="t" style="left:691.6px;top:171.23px;font-size:19.2px;transform:scaleX(0.567);transform-origin:0 0;color:#f4f4f4;">0.19</span>
<span class="t" style="left:760.2px;top:171.23px;font-size:19.2px;transform:scaleX(0.567);transform-origin:0 0;color:#f4f4f4;">0.31</span>
<span class="t" style="left:834.6px;top:171.23px;font-size:19.2px;transform:scaleX(0.567);transform-origin:0 0;color:#f4f4f4;">0.22</span>
<span class="t" style="left:871.4px;top:171.23px;font-size:19.2px;transform:scaleX(0.567);transform-origin:0 0;color:#f4f4f4;">0.49</span>
<span class="t" style="left:939.6px;top:171.23px;font-size:19.2px;transform:scaleX(0.567);transform-origin:0 0;color:#f4f4f4;">0.44</span>
<span class="t" style="left:1014.3px;top:171.23px;font-size:19.2px;transform:scaleX(0.567);transform-origin:0 0;color:#f4f4f4;">0.14</span>
<span class="t" style="left:1048.9px;top:171.23px;font-size:19.2px;transform:scaleX(0.567);transform-origin:0 0;color:#f4f4f4;">0.49</span>
<span class="t" style="left:1090.1px;top:171.23px;font-size:19.2px;transform:scaleX(0.567);transform-origin:0 0;color:#f4f4f4;">0.32</span>
<span class="t" style="left:1124.8px;top:171.23px;font-size:19.2px;transform:scaleX(0.567);transform-origin:0 0;color:#f4f4f4;">0.47</span>
<span class="t" style="left:1166.3px;top:171.23px;font-size:19.2px;transform:scaleX(0.567);transform-origin:0 0;color:#f4f4f4;">0.25</span>
<span class="t" style="left:1214.4px;top:171.23px;font-size:19.2px;transform:scaleX(0.567);transform-origin:0 0;color:#f4f4f4;">0.27</span>
<span class="t" style="left:1249.4px;top:171.23px;font-size:19.2px;transform:scaleX(0.567);transform-origin:0 0;color:#f4f4f4;">0.33</span>
<span class="t" style="left:1302.7px;top:171.23px;font-size:19.2px;transform:scaleX(0.567);transform-origin:0 0;color:#f4f4f4;">0.60</span>
<span class="t" style="left:1366.8px;top:171.23px;font-size:19.2px;transform:scaleX(0.567);transform-origin:0 0;color:#f4f4f4;">0.06</span>
<span class="t" style="left:11.9px;top:203.4px;font-size:19.2px;transform:scaleX(0.604);transform-origin:0 0;color:#f4f4f4;">Target Y</span>
<span class="t" style="left:91.9px;top:203.4px;font-size:19.2px;transform:scaleX(0.567);transform-origin:0 0;color:#f4f4f4;">448.04</span>
<span class="t" style="left:132.9px;top:203.4px;font-size:19.2px;transform:scaleX(0.567);transform-origin:0 0;color:#f4f4f4;">352.39</span>
<span class="t" style="left:175.5px;top:203.4px;font-size:19.2px;transform:scaleX(0.567);transform-origin:0 0;color:#f4f4f4;">287.48</span>
<span class="t" style="left:217.8px;top:203.4px;font-size:19.2px;transform:scaleX(0.567);transform-origin:0 0;color:#f4f4f4;">220.79</span>
<span class="t" style="left:260.5px;top:203.4px;font-size:19.2px;transform:scaleX(0.567);transform-origin:0 0;color:#f4f4f4;">153.95</span>
<span class="t" style="left:303.1px;top:203.4px;font-size:19.2px;transform:scaleX(0.567);transform-origin:0 0;color:#f4f4f4;">0.00</span>
<span class="t" style="left:334.1px;top:203.4px;font-size:19.2px;transform:scaleX(0.567);transform-origin:0 0;color:#f4f4f4;">44.90</span>
<span class="t" style="left:384.4px;top:203.4px;font-size:19.2px;transform:scaleX(0.567);transform-origin:0 0;color:#f4f4f4;">156.27</span>
<span class="t" style="left:436.2px;top:203.4px;font-size:19.2px;transform:scaleX(0.567);transform-origin:0 0;color:#f4f4f4;">84.14</span>
<span class="t" style="left:482.1px;top:203.4px;font-size:19.2px;transform:scaleX(0.567);transform-origin:0 0;color:#f4f4f4;">58.67</span>
<span class="t" style="left:521.9px;top:203.4px;font-size:19.2px;transform:scaleX(0.567);transform-origin:0 0;color:#f4f4f4;">104.69</span>
<span class="t" style="left:583.9px;top:203.4px;font-size:19.2px;transform:scaleX(0.567);transform-origin:0 0;color:#f4f4f4;">187.03</span>
<span class="t" style="left:650.6px;top:203.4px;font-size:19.2px;transform:scaleX(0.567);transform-origin:0 0;color:#f4f4f4;">126.64</span>
<span class="t" style="left:691.6px;top:203.4px;font-size:19.2px;transform:scaleX(0.567);transform-origin:0 0;color:#f4f4f4;">52.75</span>
<span class="t" style="left:760.2px;top:203.4px;font-size:19.2px;transform:scaleX(0.567);transform-origin:0 0;color:#f4f4f4;">83.11</span>
<span class="t" style="left:834.6px;top:203.4px;font-size:19.2px;transform:scaleX(0.567);transform-origin:0 0;color:#f4f4f4;">30.26</span>
<span class="t" style="left:871.4px;top:203.4px;font-size:19.2px;transform:scaleX(0.567);transform-origin:0 0;color:#f4f4f4;">192.30</span>
<span class="t" style="left:939.6px;top:203.4px;font-size:19.2px;transform:scaleX(0.567);transform-origin:0 0;color:#f4f4f4;">189.51</span>
<span class="t" style="left:1014.3px;top:203.4px;font-size:19.2px;transform:scaleX(0.567);transform-origin:0 0;color:#f4f4f4;">28.37</span>
<span class="t" style="left:1048.9px;top:203.4px;font-size:19.2px;transform:scaleX(0.567);transform-origin:0 0;color:#f4f4f4;">102.76</span>
<span class="t" style="left:1090.1px;top:203.4px;font-size:19.2px;transform:scaleX(0.567);transform-origin:0 0;color:#f4f4f4;">52.46</span>
<span class="t" style="left:1124.8px;top:203.4px;font-size:19.2px;transform:scaleX(0.567);transform-origin:0 0;color:#f4f4f4;">264.81</span>
<span class="t" style="left:1166.3px;top:203.4px;font-size:19.2px;transform:scaleX(0.567);transform-origin:0 0;color:#f4f4f4;">84.48</span>
<span class="t" style="left:1214.4px;top:203.4px;font-size:19.2px;transform:scaleX(0.567);transform-origin:0 0;color:#f4f4f4;">86.68</span>
<span class="t" style="left:1249.4px;top:203.4px;font-size:19.2px;transform:scaleX(0.567);transform-origin:0 0;color:#f4f4f4;">95.28</span>
<span class="t" style="left:1302.7px;top:203.4px;font-size:19.2px;transform:scaleX(0.567);transform-origin:0 0;color:#f4f4f4;">320.42</span>
<span class="t" style="left:1366.8px;top:203.4px;font-size:19.2px;transform:scaleX(0.567);transform-origin:0 0;color:#f4f4f4;">32.34</span>
<span class="t" style="left:11.9px;top:235.57px;font-size:19.2px;transform:scaleX(0.577);transform-origin:0 0;color:#f4f4f4;">ΔE 2000</span>
<span class="t" style="left:91.9px;top:235.57px;font-size:19.2px;transform:scaleX(0.567);transform-origin:0 0;color:#f4f4f4;">1.77</span>
<span class="t" style="left:132.9px;top:235.57px;font-size:19.2px;transform:scaleX(0.567);transform-origin:0 0;color:#f4f4f4;">1.33</span>
<span class="t" style="left:175.5px;top:235.57px;font-size:19.2px;transform:scaleX(0.567);transform-origin:0 0;color:#f4f4f4;">2.23</span>
<span class="t" style="left:217.8px;top:235.57px;font-size:19.2px;transform:scaleX(0.567);transform-origin:0 0;color:#f4f4f4;">0.33</span>
<span class="t" style="left:260.5px;top:235.57px;font-size:19.2px;transform:scaleX(0.567);transform-origin:0 0;color:#f4f4f4;">1.42</span>
<span class="t" style="left:303.1px;top:235.57px;font-size:19.2px;transform:scaleX(0.567);transform-origin:0 0;color:#f4f4f4;">1.27</span>
<span class="t" style="left:334.1px;top:235.57px;font-size:19.2px;transform:scaleX(0.567);transform-origin:0 0;color:#f4f4f4;">3.87</span>
<span class="t" style="left:384.4px;top:235.57px;font-size:19.2px;transform:scaleX(0.567);transform-origin:0 0;color:#f4f4f4;">3.37</span>
<span class="t" style="left:436.2px;top:235.57px;font-size:19.2px;transform:scaleX(0.567);transform-origin:0 0;color:#f4f4f4;">2.11</span>
<span class="t" style="left:482.1px;top:235.57px;font-size:19.2px;transform:scaleX(0.567);transform-origin:0 0;color:#f4f4f4;">1.59</span>
<span class="t" style="left:521.9px;top:235.57px;font-size:19.2px;transform:scaleX(0.567);transform-origin:0 0;color:#f4f4f4;">0.86</span>
<span class="t" style="left:583.9px;top:235.57px;font-size:19.2px;transform:scaleX(0.567);transform-origin:0 0;color:#f4f4f4;">3.76</span>
<span class="t" style="left:650.6px;top:235.57px;font-size:19.2px;transform:scaleX(0.567);transform-origin:0 0;color:#f4f4f4;">4.19</span>
<span class="t" style="left:691.6px;top:235.57px;font-size:19.2px;transform:scaleX(0.567);transform-origin:0 0;color:#f4f4f4;">1.17</span>
<span class="t" style="left:760.2px;top:235.57px;font-size:19.2px;transform:scaleX(0.567);transform-origin:0 0;color:#f4f4f4;">3.82</span>
<span class="t" style="left:834.6px;top:235.57px;font-size:19.2px;transform:scaleX(0.567);transform-origin:0 0;color:#f4f4f4;">2.37</span>
<span class="t" style="left:871.4px;top:235.57px;font-size:19.2px;transform:scaleX(0.567);transform-origin:0 0;color:#f4f4f4;">1.50</span>
<span class="t" style="left:939.6px;top:235.57px;font-size:19.2px;transform:scaleX(0.567);transform-origin:0 0;color:#f4f4f4;">3.68</span>
<span class="t" style="left:1014.3px;top:235.57px;font-size:19.2px;transform:scaleX(0.567);transform-origin:0 0;color:#f4f4f4;">1.99</span>
<span class="t" style="left:1048.9px;top:235.57px;font-size:19.2px;transform:scaleX(0.567);transform-origin:0 0;color:#f4f4f4;">3.99</span>
<span class="t" style="left:1090.1px;top:235.57px;font-size:19.2px;transform:scaleX(0.567);transform-origin:0 0;color:#f4f4f4;">3.76</span>
<span class="t" style="left:1124.8px;top:235.57px;font-size:19.2px;transform:scaleX(0.567);transform-origin:0 0;color:#f4f4f4;">2.13</span>
<span class="t" style="left:1166.3px;top:235.57px;font-size:19.2px;transform:scaleX(0.567);transform-origin:0 0;color:#f4f4f4;">3.26</span>
<span class="t" style="left:1214.4px;top:235.57px;font-size:19.2px;transform:scaleX(0.567);transform-origin:0 0;color:#f4f4f4;">4.01</span>
<span class="t" style="left:1249.4px;top:235.57px;font-size:19.2px;transform:scaleX(0.567);transform-origin:0 0;color:#f4f4f4;">3.39</span>
<span class="t" style="left:1302.7px;top:235.57px;font-size:19.2px;transform:scaleX(0.567);transform-origin:0 0;color:#f4f4f4;">5.02</span>
<span class="t" style="left:1366.8px;top:235.57px;font-size:19.2px;transform:scaleX(0.567);transform-origin:0 0;color:#f4f4f4;">1.43</span>
<div class="a" style="left:9px;top:260px;width:1377px;height:21px;background:#5e5e5e"></div>
<div class="a" style="left:27px;top:262px;width:808px;height:17px;border-radius:8px;background:#4a4a4a"></div>
<div class="a" style="left:10px;top:261px;width:11px;height:19px;border-radius:3px;background:linear-gradient(#8a8a8a,#6a6a6a);border:1px solid #999;box-sizing:border-box"></div>
<svg class="a" style="left:12px;top:266px" width="6" height="10"><path d="M6 0v10l-6-5z" fill="#3c3c3c"/></svg>
<div class="a" style="left:1372px;top:261px;width:11px;height:19px;border-radius:3px;background:linear-gradient(#8a8a8a,#6a6a6a);border:1px solid #999;box-sizing:border-box"></div>
<svg class="a" style="left:1375px;top:266px" width="6" height="10"><path d="M0 0v10l6-5z" fill="#3c3c3c"/></svg>
</div>
<div class="a" style="left:199px;top:1107.5px;width:1405px;height:62.5px;background:#555"></div>
<div class="a" style="left:199px;top:1107.5px;width:1399px;height:50px;overflow:hidden">
<div class="a pb" style="left:2.2px;top:0;width:50px;height:49.5px"></div>
<div class="a" style="left:7.2px;top:6px;width:40px;height:24px;border-radius:3px;background:#ffffff;box-shadow:0 0 1.5px #444"></div>
<span class="t" style="left:12.91px;top:35.21px;font-size:10.5px;transform:scaleX(1.043);transform-origin:50% 0;color:#262626;font-weight:bold;">White</span>
<div class="a pb" style="left:54.2px;top:0;width:50px;height:49.5px"></div>
<div class="a" style="left:59.2px;top:6px;width:40px;height:24px;border-radius:3px;background:#e6e6e6;box-shadow:0 0 1.5px #444"></div>
<span class="t" style="left:59.94px;top:35.21px;font-size:10.5px;transform:scaleX(0.960);transform-origin:50% 0;color:#262626;font-weight:bold;">Gray 80</span>
<div class="a pb" style="left:106.2px;top:0;width:50px;height:49.5px"></div>
<div class="a" style="left:111.2px;top:6px;width:40px;height:24px;border-radius:3px;background:#d2d2d2;box-shadow:0 0 1.5px #444"></div>
<span class="t" style="left:111.94px;top:35.21px;font-size:10.5px;transform:scaleX(0.960);transform-origin:50% 0;color:#262626;font-weight:bold;">Gray 65</span>
<div class="a pb" style="left:158.2px;top:0;width:50px;height:49.5px"></div>
<div class="a" style="left:163.2px;top:6px;width:40px;height:24px;border-radius:3px;background:#bababa;box-shadow:0 0 1.5px #444"></div>
<span class="t" style="left:163.94px;top:35.21px;font-size:10.5px;transform:scaleX(0.960);transform-origin:50% 0;color:#262626;font-weight:bold;">Gray 50</span>
<div class="a pb" style="left:210.2px;top:0;width:50px;height:49.5px"></div>
<div class="a" style="left:215.2px;top:6px;width:40px;height:24px;border-radius:3px;background:#9f9f9f;box-shadow:0 0 1.5px #444"></div>
<span class="t" style="left:215.94px;top:35.21px;font-size:10.5px;transform:scaleX(0.960);transform-origin:50% 0;color:#262626;font-weight:bold;">Gray 35</span>
<div class="a pb" style="left:262.2px;top:0;width:50px;height:49.5px"></div>
<div class="a" style="left:267.2px;top:6px;width:40px;height:24px;border-radius:3px;background:#000000;box-shadow:0 0 1.5px #444"></div>
<span class="t" style="left:273.19px;top:35.21px;font-size:10.5px;transform:scaleX(0.917);transform-origin:50% 0;color:#262626;font-weight:bold;">Black</span>
<div class="a pb" style="left:314.2px;top:0;width:50px;height:49.5px"></div>
<div class="a" style="left:319.2px;top:6px;width:40px;height:24px;border-radius:3px;background:#74513f;box-shadow:0 0 1.5px #444"></div>
<span class="t" style="left:314.98px;top:35.21px;font-size:10.5px;transform:scaleX(0.950);transform-origin:50% 0;color:#262626;font-weight:bold;">Dark Skin</span>
<div class="a pb" style="left:366.2px;top:0;width:50px;height:49.5px"></div>
<div class="a" style="left:371.2px;top:6px;width:40px;height:24px;border-radius:3px;background:#c69784;box-shadow:0 0 1.5px #444"></div>
<span class="t" style="left:365.83px;top:35.21px;font-size:10.5px;transform:scaleX(0.920);transform-origin:50% 0;color:#262626;font-weight:bold;">Light Skin</span>
<div class="a pb" style="left:418.2px;top:0;width:50px;height:49.5px"></div>
<div class="a" style="left:423.2px;top:6px;width:40px;height:24px;border-radius:3px;background:#5f7da5;box-shadow:0 0 1.5px #444"></div>
<span class="t" style="left:421.02px;top:35.21px;font-size:10.5px;transform:scaleX(0.924);transform-origin:50% 0;color:#262626;font-weight:bold;">Blue Sky</span>
<div class="a pb" style="left:470.2px;top:0;width:50px;height:49.5px"></div>
<div class="a" style="left:475.2px;top:6px;width:40px;height:24px;border-radius:3px;background:#566b43;box-shadow:0 0 1.5px #444"></div>
<span class="t" style="left:476.82px;top:35.21px;font-size:10.5px;transform:scaleX(0.933);transform-origin:50% 0;color:#262626;font-weight:bold;">Foliage</span>
<div class="a pb" style="left:522.2px;top:0;width:50px;height:49.5px"></div>
<div class="a" style="left:527.2px;top:6px;width:40px;height:12px;border-radius:3px;background:#8681b4;box-shadow:0 0 1.5px #444"></div>
<span class="t" style="left:535.82px;top:22.91px;font-size:10.5px;transform:scaleX(0.936);transform-origin:50% 0;color:#262626;font-weight:bold;">Blue</span>
<span class="t" style="left:530.28px;top:35.31px;font-size:10.5px;transform:scaleX(0.984);transform-origin:50% 0;color:#262626;font-weight:bold;">Flower</span>
<div class="a pb" style="left:574.2px;top:0;width:50px;height:49.5px"></div>
<div class="a" style="left:579.2px;top:6px;width:40px;height:12px;border-radius:3px;background:#63bfab;box-shadow:0 0 1.5px #444"></div>
<span class="t" style="left:583.16px;top:22.91px;font-size:10.5px;transform:scaleX(0.913);transform-origin:50% 0;color:#262626;font-weight:bold;">Bluish</span>
<span class="t" style="left:584.03px;top:35.31px;font-size:10.5px;transform:scaleX(0.972);transform-origin:50% 0;color:#262626;font-weight:bold;">Green</span>
<div class="a pb" style="left:626.2px;top:0;width:50px;height:49.5px"></div>
<div class="a" style="left:631.2px;top:6px;width:40px;height:24px;border-radius:3px;background:#e07b28;box-shadow:0 0 1.5px #444"></div>
<span class="t" style="left:632.82px;top:35.21px;font-size:10.5px;transform:scaleX(0.952);transform-origin:50% 0;color:#262626;font-weight:bold;">Orange</span>
<div class="a pb" style="left:678.2px;top:0;width:50px;height:49.5px"></div>
<div class="a" style="left:683.2px;top:6px;width:40px;height:12px;border-radius:3px;background:#4a56a8;box-shadow:0 0 1.5px #444"></div>
<span class="t" style="left:683.4px;top:22.91px;font-size:10.5px;transform:scaleX(0.938);transform-origin:0 0;color:#262626;font-weight:bold;">Purplish</span>
<span class="t" style="left:683.4px;top:35.31px;font-size:10.5px;transform:scaleX(0.936);transform-origin:0 0;color:#262626;font-weight:bold;">Blue</span>
<div class="a pb" style="left:730.2px;top:0;width:50px;height:49.5px"></div>
<div class="a" style="left:735.2px;top:6px;width:40px;height:12px;border-radius:3px;background:#cc4c5c;box-shadow:0 0 1.5px #444"></div>
<span class="t" style="left:731.2px;top:22.91px;font-size:10.5px;transform:scaleX(1.028);transform-origin:0 0;color:#262626;font-weight:bold;">Moderate</span>
<span class="t" style="left:731.2px;top:35.31px;font-size:10.5px;transform:scaleX(0.917);transform-origin:0 0;color:#262626;font-weight:bold;">Red</span>
<div class="a pb" style="left:782.2px;top:0;width:50px;height:49.5px"></div>
<div class="a" style="left:787.2px;top:6px;width:40px;height:24px;border-radius:3px;background:#5b3a70;box-shadow:0 0 1.5px #444"></div>
<span class="t" style="left:790.86px;top:35.21px;font-size:10.5px;transform:scaleX(1.010);transform-origin:50% 0;color:#262626;font-weight:bold;">Purple</span>
<div class="a pb" style="left:834.2px;top:0;width:50px;height:49.5px"></div>
<div class="a" style="left:839.2px;top:6px;width:40px;height:12px;border-radius:3px;background:#a5c43c;box-shadow:0 0 1.5px #444"></div>
<span class="t" style="left:842.86px;top:22.91px;font-size:10.5px;transform:scaleX(0.995);transform-origin:50% 0;color:#262626;font-weight:bold;">Yellow</span>
<span class="t" style="left:844.03px;top:35.31px;font-size:10.5px;transform:scaleX(0.972);transform-origin:50% 0;color:#262626;font-weight:bold;">Green</span>
<div class="a pb" style="left:886.2px;top:0;width:50px;height:49.5px"></div>
<div class="a" style="left:891.2px;top:6px;width:40px;height:12px;border-radius:3px;background:#eba42c;box-shadow:0 0 1.5px #444"></div>
<span class="t" style="left:892.82px;top:22.91px;font-size:10.5px;transform:scaleX(0.952);transform-origin:50% 0;color:#262626;font-weight:bold;">Orange</span>
<span class="t" style="left:894.86px;top:35.31px;font-size:10.5px;transform:scaleX(0.995);transform-origin:50% 0;color:#262626;font-weight:bold;">Yellow</span>
<div class="a pb" style="left:938.2px;top:0;width:50px;height:49.5px"></div>
<div class="a" style="left:943.2px;top:6px;width:40px;height:24px;border-radius:3px;background:#363c98;box-shadow:0 0 1.5px #444"></div>
<span class="t" style="left:951.82px;top:35.21px;font-size:10.5px;transform:scaleX(0.936);transform-origin:50% 0;color:#262626;font-weight:bold;">Blue</span>
<div class="a pb" style="left:990.2px;top:0;width:50px;height:49.5px"></div>
<div class="a" style="left:995.2px;top:6px;width:40px;height:24px;border-radius:3px;background:#48964a;box-shadow:0 0 1.5px #444"></div>
<span class="t" style="left:1000.03px;top:35.21px;font-size:10.5px;transform:scaleX(0.972);transform-origin:50% 0;color:#262626;font-weight:bold;">Green</span>
<div class="a pb" style="left:1042.2px;top:0;width:50px;height:49.5px"></div>
<div class="a" style="left:1047.2px;top:6px;width:40px;height:24px;border-radius:3px;background:#b5333c;box-shadow:0 0 1.5px #444"></div>
<span class="t" style="left:1057.28px;top:35.21px;font-size:10.5px;transform:scaleX(0.917);transform-origin:50% 0;color:#262626;font-weight:bold;">Red</span>
<div class="a pb" style="left:1094.2px;top:0;width:50px;height:49.5px"></div>
<div class="a" style="left:1099.2px;top:6px;width:40px;height:24px;border-radius:3px;background:#edc724;box-shadow:0 0 1.5px #444"></div>
<span class="t" style="left:1102.86px;top:35.21px;font-size:10.5px;transform:scaleX(0.995);transform-origin:50% 0;color:#262626;font-weight:bold;">Yellow</span>
<div class="a pb" style="left:1146.2px;top:0;width:50px;height:49.5px"></div>
<div class="a" style="left:1151.2px;top:6px;width:40px;height:24px;border-radius:3px;background:#c25896;box-shadow:0 0 1.5px #444"></div>
<span class="t" style="left:1149.9px;top:35.21px;font-size:10.5px;transform:scaleX(1.010);transform-origin:50% 0;color:#262626;font-weight:bold;">Magenta</span>
<div class="a pb" style="left:1198.2px;top:0;width:50px;height:49.5px"></div>
<div class="a" style="left:1203.2px;top:6px;width:40px;height:24px;border-radius:3px;background:#0b8aad;box-shadow:0 0 1.5px #444"></div>
<span class="t" style="left:1210.36px;top:35.21px;font-size:10.5px;transform:scaleX(0.927);transform-origin:50% 0;color:#262626;font-weight:bold;">Cyan</span>
<div class="a pb" style="left:1250.2px;top:0;width:50px;height:49.5px"></div>
<div class="a" style="left:1255.2px;top:6px;width:40px;height:24px;border-radius:3px;background:#ff0000;box-shadow:0 0 1.5px #444"></div>
<span class="t" style="left:1250.4px;top:35.21px;font-size:10.5px;transform:scaleX(0.951);transform-origin:50% 0;color:#262626;font-weight:bold;">100% Red</span>
<div class="a pb" style="left:1302.2px;top:0;width:50px;height:49.5px"></div>
<div class="a" style="left:1307.2px;top:6px;width:40px;height:12px;border-radius:3px;background:#00ff00;box-shadow:0 0 1.5px #444"></div>
<span class="t" style="left:1313.77px;top:22.91px;font-size:10.5px;transform:scaleX(0.931);transform-origin:50% 0;color:#262626;font-weight:bold;">100%</span>
<span class="t" style="left:1312.03px;top:35.31px;font-size:10.5px;transform:scaleX(0.972);transform-origin:50% 0;color:#262626;font-weight:bold;">Green</span>
<div class="a pb" style="left:1354.2px;top:0;width:50px;height:49.5px"></div>
<div class="a" style="left:1359.2px;top:6px;width:40px;height:12px;border-radius:3px;background:#0000ff;box-shadow:0 0 1.5px #444"></div>
<span class="t" style="left:1365.77px;top:22.91px;font-size:10.5px;transform:scaleX(0.931);transform-origin:50% 0;color:#262626;font-weight:bold;">100%</span>
<span class="t" style="left:1367.82px;top:35.31px;font-size:10.5px;transform:scaleX(0.936);transform-origin:50% 0;color:#262626;font-weight:bold;">Blue</span>
</div>
<div class="a" style="left:199px;top:1157.5px;width:1399px;height:12.5px;background:#5c5c5c"></div>
<div class="a" style="left:214px;top:1158.5px;width:781px;height:11px;background:#3e3e3e;border-radius:6px"></div>
<div class="a" style="left:201px;top:1158px;width:11px;height:12px;background:linear-gradient(#8a8a8a,#6a6a6a);border-radius:2px"></div>
<svg class="a" style="left:203px;top:1160px" width="6" height="9"><path d="M6 0v9l-6-4.500z" fill="#333"/></svg>
<div class="a" style="left:1585px;top:1158px;width:11px;height:12px;background:linear-gradient(#8a8a8a,#6a6a6a);border-radius:2px"></div>
<svg class="a" style="left:1588px;top:1160px" width="6" height="9"><path d="M0 0v9l6-4.500z" fill="#333"/></svg>
<div class="a" style="left:1597px;top:1107.5px;width:323px;height:62.5px;background:#3a3a3a"></div>
<div class="a" style="left:1598px;top:1108px;width:47px;height:62px;background:linear-gradient(#7e7e7e,#5c5c5c);border-radius:4px 4px 0 0"></div>
<div class="a" style="left:1605.5px;top:1132.5px;width:31px;height:30.5px;background:linear-gradient(#a2a2a2,#787878);border-radius:5px;border:2.2px solid #242424;box-sizing:border-box"></div>
<div class="a" style="left:1614px;top:1141px;width:13.5px;height:13px;background:linear-gradient(135deg,#3a3a3a,#000 45%)"></div>
<div class="a" style="left:1646px;top:1108px;width:274px;height:30px;background:linear-gradient(#8a8a8a,#5e5e5e);border-radius:4px 0 0 0"></div>
<div class="a" style="left:1827px;top:1108px;width:93px;height:30px;background:linear-gradient(#444,#2c2c2c)"></div>
<div class="a" style="left:1692px;top:1108px;width:1.5px;height:30px;background:#383838"></div>
<div class="a" style="left:1737px;top:1108px;width:1.5px;height:30px;background:#383838"></div>
<div class="a" style="left:1782px;top:1108px;width:1.5px;height:30px;background:#383838"></div>
<div class="a" style="left:1872px;top:1108px;width:1.5px;height:30px;background:#383838"></div>
<div class="a" style="left:1658px;top:1112px;width:22px;height:22px;background:radial-gradient(circle at 50% 35%,#9a9a9a,#6c6c6c);border-radius:50%"></div>
<div class="a" style="left:1703.5px;top:1112px;width:22px;height:22px;background:radial-gradient(circle at 50% 35%,#9a9a9a,#6c6c6c);border-radius:50%"></div>
<div class="a" style="left:1748.5px;top:1112px;width:22px;height:22px;background:radial-gradient(circle at 50% 35%,#9a9a9a,#6c6c6c);border-radius:50%"></div>
<div class="a" style="left:1793.5px;top:1112px;width:22px;height:22px;background:radial-gradient(circle at 50% 35%,#9a9a9a,#6c6c6c);border-radius:50%"></div>
<div class="a" style="left:1838.5px;top:1112px;width:22px;height:22px;background:radial-gradient(circle at 50% 35%,#555,#333);border-radius:50%"></div>
<div class="a" style="left:1885px;top:1112px;width:22px;height:22px;background:radial-gradient(circle at 50% 35%,#555,#333);border-radius:50%"></div>
<div class="a" style="left:1646px;top:1139.3px;width:274px;height:31px;background:linear-gradient(#c0c0c0,#8e8e8e 55%,#7a7a7a);border-radius:5px 0 0 0;box-shadow:inset 0 1px 0 #dadada"></div>
<div class="a" style="left:1782px;top:1139.3px;width:1.5px;height:31px;background:#444"></div>
<div class="a" style="left:1667px;top:1144px;width:20px;height:20px;background:radial-gradient(circle at 50% 35%,#b4b4b4,#828282);border-radius:50%"></div>
<div class="a" style="left:1880px;top:1144px;width:20px;height:20px;background:radial-gradient(circle at 50% 35%,#b4b4b4,#828282);border-radius:50%"></div>
<svg class="a" style="left:1646px;top:1139px" width="274" height="31" fill="none" stroke="#333" stroke-width="1.6" stroke-linecap="round" stroke-linejoin="round"><path d="M30 10.500l-4 4.500l4 4.500M35 10.500l-4 4.500l4 4.500"/><path d="M241 10.500l4 4.500l-4 4.500M246 10.500l4 4.500l-4 4.500"/></svg>
<span class="t" style="left:1703.8px;top:1143.3px;font-size:21.5px;transform:scaleX(0.963);transform-origin:0 0;color:#2c2c2c;font-weight:bold;text-shadow:0 1px 0 rgba(255,255,255,.3);">Back</span>
<span class="t" style="left:1810.9px;top:1143.3px;font-size:21.5px;transform:scaleX(1.094);transform-origin:0 0;color:#2c2c2c;font-weight:bold;text-shadow:0 1px 0 rgba(255,255,255,.3);">Next</span>
<svg class="a" style="left:1530px;top:1080px" width="390" height="90" viewBox="1530 1080 390 90">
<g fill="none" stroke-linejoin="round" stroke-linecap="round"><path d="M1538 1090.500L1583.500 1101L1586.500 1127.800L1541.200 1133Z" stroke="#f4ecec" stroke-opacity=".5" stroke-width="8"/><path d="M1541.200 1133L1568 1151.500L1619.500 1135.800L1590 1129.500" stroke="#f4ecec" stroke-opacity=".5" stroke-width="7.500"/><path d="M1538 1090.500L1583.500 1101L1586.500 1127.800L1541.200 1133Z" stroke="#8c2c32" stroke-opacity=".78" stroke-width="4.600"/><path d="M1541.200 1133L1568 1151.500L1619.500 1135.800L1590 1129.500" stroke="#8c2c32" stroke-opacity=".78" stroke-width="4"/><path d="M1550 1106L1564.500 1124L1592.500 1087.500" stroke="#e8e8e8" stroke-opacity=".6" stroke-width="6"/><path d="M1550 1106L1564.500 1124L1592.500 1087.500" stroke="#383838" stroke-opacity=".9" stroke-width="3.500"/></g>
<text x="1594.500" y="1125.500" font-family="Liberation Sans,Arial,sans-serif" font-weight="bold" font-size="34.500" lengthAdjust="spacingAndGlyphs" textLength="196" fill="none" stroke="#f6eeee" stroke-opacity=".5" stroke-width="3.800" stroke-linejoin="round">NOTEBOOK</text>
<text x="1594.500" y="1125.500" font-family="Liberation Sans,Arial,sans-serif" font-weight="bold" font-size="34.500" lengthAdjust="spacingAndGlyphs" textLength="196" fill="#842a30" fill-opacity=".8" stroke="#842a30" stroke-opacity=".8" stroke-width=".800">NOTEBOOK</text>
<text x="1796" y="1125.500" font-family="Liberation Sans,Arial,sans-serif" font-weight="bold" font-size="34.500" lengthAdjust="spacingAndGlyphs" textLength="113.500" fill="none" stroke="#f0f0f0" stroke-opacity=".5" stroke-width="3.600" stroke-linejoin="round">CHECK</text>
<text x="1796" y="1125.500" font-family="Liberation Sans,Arial,sans-serif" font-weight="bold" font-size="34.500" lengthAdjust="spacingAndGlyphs" textLength="113.500" fill="#2a2a2a" fill-opacity=".85">CHECK</text>
</svg>
</body></html>
